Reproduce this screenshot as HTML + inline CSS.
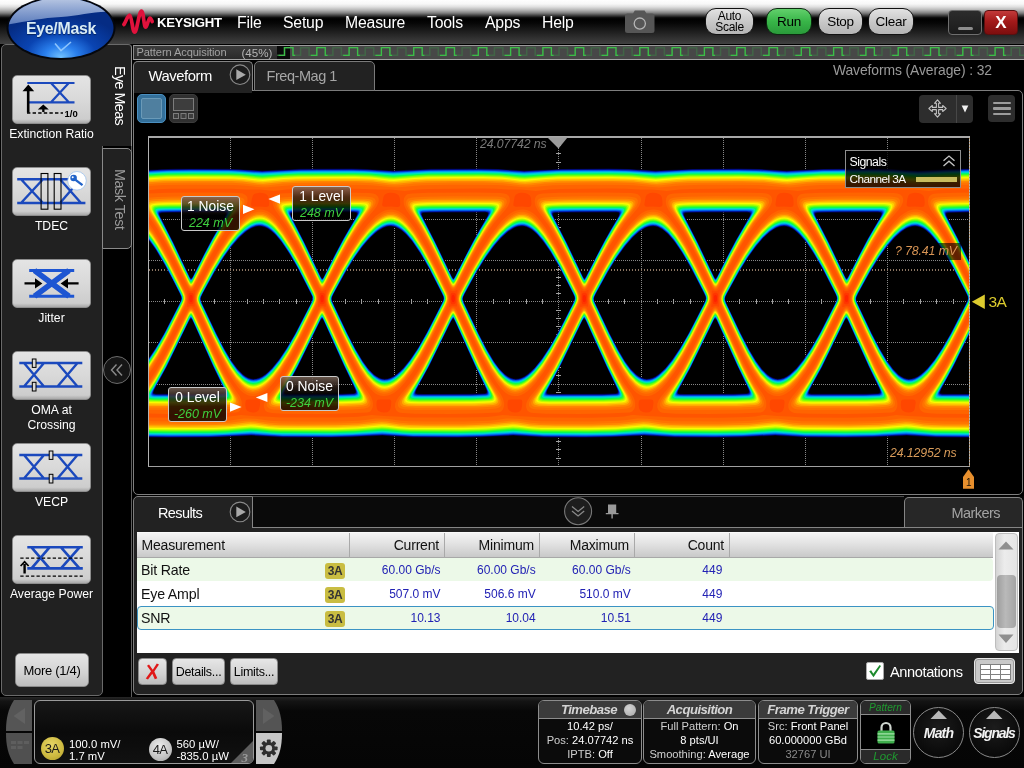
<!DOCTYPE html>
<html lang="en">
<head>
<meta charset="utf-8">
<title>Eye/Mask</title>
<style>
*{box-sizing:border-box;margin:0;padding:0}
html,body{width:1024px;height:768px;overflow:hidden;background:#000}
body{position:relative;font-family:"Liberation Sans",sans-serif;color:#fff;font-size:13px}
.a{position:absolute}
.t{position:absolute;white-space:nowrap;line-height:1}
svg{position:absolute;overflow:visible}
/* top bar */
#top{left:0;top:0;width:1024px;height:44px;background:linear-gradient(#fefefe 0,#f7f7f7 4px,#dedede 7px,#b6b6b6 10px,#808080 13px,#3e3e3e 15.5px,#0e0e0e 17.5px,#000 19px,#060606 23px,#3e3e3e 43px,#424242 44px)}
.menu{top:15px;font-size:15.8px;color:#fff;letter-spacing:-0.2px}
.pill{position:absolute;top:8px;height:27px;border-radius:11px;border:1px solid #111;background:linear-gradient(#e2e2e2,#c6c6c6 55%,#b4b4b4);color:#000;font-size:13.5px;text-align:center;line-height:25px;letter-spacing:-0.3px}
/* left panel */
#lp{left:1px;top:44px;width:102px;height:652px;background:#212121;border:1px solid #6a6a6a;border-radius:5px 0 5px 5px}
.mb{position:absolute;left:12px;width:79px;height:49px;border-radius:5px;background:linear-gradient(#e4e4e4,#d9d9d9 50%,#cdcdcd 92%,#a8a8a8);border:1px solid #8d8d8d}
.ml{position:absolute;left:0;width:103px;text-align:center;font-size:12.2px;color:#fff;line-height:15px;white-space:nowrap}
/* panels */
.panel{position:absolute;background:#000;border:1px solid #7e7e7e}
.tab{position:absolute;background:#222;border:1px solid #858585;border-bottom:none;border-radius:5px 5px 0 0}
.lbl{position:absolute;border:1px solid #c9c9c9;border-radius:3px;background:linear-gradient(rgba(120,100,88,.85) 0,rgba(45,32,24,.84) 30%,rgba(0,0,0,.80) 55%);text-align:center}
.lbl b{display:block;font-weight:normal;color:#fff;font-size:13.8px;line-height:15px;margin-top:2px;white-space:nowrap}
.lbl i{display:block;color:#3ecf3e;font-size:12.5px;line-height:14px;margin-top:2px;white-space:nowrap}
/* table */
.th{position:absolute;top:0;height:25px;font-size:14px;color:#111;line-height:25px;border-right:1px solid #a9a9a9;text-align:right;padding-right:5px;letter-spacing:-0.2px}
.row{position:absolute;left:0;width:856px;height:24px}
.row span{position:absolute;top:0;line-height:24px;white-space:nowrap}
.nm{left:4px;font-size:14.2px;color:#111;letter-spacing:-0.2px}
.v{font-size:12px;color:#2222b4;text-align:right}
.bdg{position:absolute;left:188px;top:5px;width:20px;height:16px;border-radius:3px;background:#c9bd42;color:#333;font-weight:bold;font-size:12px;line-height:16px;text-align:center;letter-spacing:-0.5px}
.gbtn{position:absolute;height:27px;border-radius:4px;background:linear-gradient(#e6e6e6,#d2d2d2 60%,#bdbdbd);border:1px solid #8a8a8a;color:#000;font-size:12.5px;line-height:27px;text-align:center;letter-spacing:-0.3px}
/* bottom */
.sbox{position:absolute;top:700px;height:64px;border:1px solid #8c8c8c;border-radius:6px;background:#0b0b0b;overflow:hidden}
.sbox .h{position:absolute;left:0;top:0;right:0;height:18px;background:#3b3b3b;border-bottom:1px solid #8c8c8c;font-weight:bold;font-style:italic;color:#d4d4d4;font-size:13.2px;line-height:17px;text-align:center;letter-spacing:-0.55px}
.sbox .l{position:absolute;left:0;right:0;text-align:center;font-size:11.15px;line-height:13px;color:#fff;white-space:nowrap}
.sbox .l span{color:#cfcfcf}
.circ{position:absolute;width:51px;height:51px;border-radius:50%;border:1px solid #8a8a8a;background:radial-gradient(circle at 50% 40%,#1c1c1c,#0a0a0a 70%);text-align:center;font-weight:bold;font-style:italic;font-size:14px;line-height:51px;color:#f2f2f2;letter-spacing:-0.8px}
</style>
</head>
<body>
<div id="root" style="position:absolute;left:0;top:0;width:1024px;height:768px;will-change:transform">
<div id="top" class="a"></div>
<!-- Eye/Mask button -->
<svg class="a" style="left:0;top:0;z-index:5" width="125" height="64" viewBox="0 0 125 64">
 <defs>
  <radialGradient id="emg" cx="50%" cy="88%" r="60%" fx="50%" fy="98%">
   <stop offset="0" stop-color="#6fc0ff"/><stop offset=".25" stop-color="#2a80ee"/><stop offset=".55" stop-color="#0a44b2"/><stop offset="1" stop-color="#052c84"/>
  </radialGradient>
  <linearGradient id="emh" x1="0" y1="0" x2="0" y2="1">
   <stop offset="0" stop-color="#d4def0" stop-opacity=".95"/><stop offset="1" stop-color="#6c8cc8" stop-opacity=".8"/>
  </linearGradient>
  <clipPath id="emc"><ellipse cx="61" cy="28" rx="52.5" ry="30"/></clipPath>
 </defs>
 <ellipse cx="61" cy="28" rx="54.5" ry="32" fill="#05070d"/>
 <ellipse cx="61" cy="28" rx="52.5" ry="30" fill="url(#emg)"/>
 <g clip-path="url(#emc)"><path d="M0 -6H125V14C100 8 84 16 61 17C40 18 24 22 0 26Z" fill="url(#emh)"/></g>
 <path d="M55 43.5L61 50.5L71 42" fill="none" stroke="#9fd0ff" stroke-width="1.6" opacity=".85"/>
</svg>
<div class="t" style="left:9px;top:20.5px;z-index:6;width:104px;text-align:center;font-weight:bold;font-size:15.9px;color:#d9ecf6;letter-spacing:-0.3px;text-shadow:0 1px 1px #06245e">Eye/Mask</div>
<!-- Keysight logo -->
<svg class="a" style="left:122px;top:8px" width="34" height="28" viewBox="0 0 34 28">
 <path d="M1.9 16.5C3.5 14.5 5.8 6.8 7.7 7.2C9.8 7.6 10.4 24.2 12.6 24.2C15 24.2 17 3 19.4 3C21.6 3 21.8 19.2 23.6 19.2C25.2 19.2 26.3 10.2 27.9 10C29 9.9 29.6 12.2 30.2 13.6" fill="none" stroke="#e1123c" stroke-width="3.7" stroke-linejoin="round" stroke-linecap="round"/>
</svg>
<div class="t" style="left:157px;top:15.5px;font-weight:bold;font-size:13.2px;color:#fff;letter-spacing:-0.35px">KEYSIGHT</div>
<div class="t menu" style="left:237px">File</div>
<div class="t menu" style="left:283px">Setup</div>
<div class="t menu" style="left:345px">Measure</div>
<div class="t menu" style="left:427px">Tools</div>
<div class="t menu" style="left:485px">Apps</div>
<div class="t menu" style="left:542px">Help</div>
<!-- camera -->
<svg class="a" style="left:625px;top:10px" width="30" height="24" viewBox="0 0 30 24">
 <path d="M2.5 3.5H8L9.8 .6H19.6L21.5 3.5H27a2.5 2.5 0 0 1 2.5 2.5V20.5a2.5 2.5 0 0 1-2.5 2.5H2.5a2.5 2.5 0 0 1-2.5-2.5V6a2.5 2.5 0 0 1 2.5-2.5Z" fill="#565656"/>
 <circle cx="14.8" cy="13.6" r="5.6" fill="none" stroke="#b5b5b5" stroke-width="1.3"/>
</svg>
<div class="pill" style="left:705px;width:49px;font-size:12px;line-height:11px;padding-top:2px">Auto<br>Scale</div>
<div class="pill" style="left:766px;width:46px;background:linear-gradient(#62d06c,#38b548 50%,#2a9a3a);border-color:#0c2a10">Run</div>
<div class="pill" style="left:818px;width:45px">Stop</div>
<div class="pill" style="left:868px;width:46px">Clear</div>
<div class="a" style="left:948px;top:10px;width:34px;height:25px;border:1px solid #6e6e6e;border-radius:4px;background:linear-gradient(#2c2c2c,#1b1b1b)"><div class="a" style="left:9px;top:16px;width:15px;height:3px;border-radius:1.5px;background:#8d8d8d"></div></div>
<div class="a" style="left:984px;top:10px;width:34px;height:25px;border:1px solid #5a1010;border-radius:4px;background:linear-gradient(#c23a3a,#a31a1a 45%,#7d0e0e);text-align:center;font-weight:bold;font-size:17px;line-height:23px;color:#fff">X</div>
<!-- pattern acquisition strip -->
<div class="a" style="left:133px;top:45px;width:891px;height:15px;background:#474747;border-top:1px solid #9a9a9a;border-bottom:1px solid #a4a4a4;border-left:1px solid #8a8a8a"></div>
<div class="a" style="left:134px;top:46px;width:143px;height:13px;background:linear-gradient(#3c3c3c,#2a2a2a)"></div>
<div class="a" style="left:277px;top:46px;width:13px;height:13px;background:#0a0a0a"></div>
<div class="t" style="left:136.5px;top:47px;font-size:11.1px;color:#a2a2a2;letter-spacing:-0.1px">Pattern Acquisition</div>
<div class="t" style="left:241.5px;top:46.5px;font-size:11.6px;color:#b4b4b4">(45%)</div>
<svg class="a" style="left:0;top:0" width="1024" height="64" viewBox="0 0 1024 64"><path d="M277 55.3H284.5V47.7H293V55.3H300.6V47.7H309.1V55.3H316.8V47.7H325.3V55.3H332.9V47.7H341.4V55.3H349.1V47.7H357.6V55.3H365.2V47.7H373.7V55.3H381.4V47.7H389.9V55.3H397.5V47.7H406V55.3H413.7V47.7H422.2V55.3H429.8V47.7H438.3V55.3H446V47.7H454.5V55.3H462.1V47.7H470.6V55.3H478.3V47.7H486.8V55.3H494.4V47.7H502.9V55.3H510.6V47.7H519.1V55.3H526.7V47.7H535.2V55.3H542.9V47.7H551.4V55.3H559V47.7H567.5V55.3H575.2V47.7H583.7V55.3H591.3V47.7H599.8V55.3H607.5V47.7H616V55.3H623.6V47.7H632.1V55.3H639.8V47.7H648.3V55.3H655.9V47.7H664.4V55.3H672.1V47.7H680.6V55.3H688.2V47.7H696.7V55.3H704.4V47.7H712.9V55.3H720.5V47.7H729V55.3H736.7V47.7H745.2V55.3H752.8V47.7H761.3V55.3H769V47.7H777.5V55.3H785.1V47.7H793.6V55.3H801.3V47.7H809.8V55.3H817.4V47.7H825.9V55.3H833.6V47.7H842.1V55.3H849.7V47.7H858.2V55.3H865.9V47.7H874.4V55.3H882V47.7H890.5V55.3H898.2V47.7H906.7V55.3H914.3V47.7H922.8V55.3H930.5V47.7H939V55.3H946.6V47.7H955.1V55.3H962.8V47.7H971.3V55.3H978.9V47.7H987.4V55.3H995.1V47.7H1003.6V55.3H1011.2V47.7H1019.7V55.3H1024" stroke="#3f6d46" stroke-width="1.6" opacity=".75" fill="none"/><path d="M278.5 55.3H284.5V47.7H293V55.3H295.2M310.8 55.3H316.8V47.7H325.3V55.3H327.5M343.1 55.3H349.1V47.7H357.6V55.3H359.8M375.4 55.3H381.4V47.7H389.9V55.3H392.1M407.7 55.3H413.7V47.7H422.2V55.3H424.4M440 55.3H446V47.7H454.5V55.3H456.7M472.3 55.3H478.3V47.7H486.8V55.3H489M504.6 55.3H510.6V47.7H519.1V55.3H521.3M536.9 55.3H542.9V47.7H551.4V55.3H553.6M569.2 55.3H575.2V47.7H583.7V55.3H585.9M601.5 55.3H607.5V47.7H616V55.3H618.2M633.8 55.3H639.8V47.7H648.3V55.3H650.5M666.1 55.3H672.1V47.7H680.6V55.3H682.8M698.4 55.3H704.4V47.7H712.9V55.3H715.1M730.7 55.3H736.7V47.7H745.2V55.3H747.4M763 55.3H769V47.7H777.5V55.3H779.7M795.3 55.3H801.3V47.7H809.8V55.3H812M827.6 55.3H833.6V47.7H842.1V55.3H844.3M859.9 55.3H865.9V47.7H874.4V55.3H876.6M892.2 55.3H898.2V47.7H906.7V55.3H908.9M924.5 55.3H930.5V47.7H939V55.3H941.2M956.8 55.3H962.8V47.7H971.3V55.3H973.5M989.1 55.3H995.1V47.7H1003.6V55.3H1005.8" stroke="#3cbe48" stroke-width="1.3" fill="none"/></svg>

<div id="lp" class="a"></div>
<!-- vertical tabs -->
<div class="a" style="left:102px;top:44px;width:30px;height:102px;background:#212121;border:1px solid #8a8a8a;border-left:none;border-top-color:#6a6a6a;border-radius:0 4px 0 0;border-bottom:none"></div>
<div class="a" style="left:131px;top:146px;width:1px;height:551px;background:#5e5e5e"></div>
<div class="a" style="left:102px;top:148px;width:30px;height:101px;background:#212121;border:1px solid #8a8a8a;border-radius:0 5px 5px 0"></div>
<div class="t" style="left:119.5px;top:66px;font-size:14.4px;color:#fff;transform-origin:0 0;transform:rotate(90deg) translate(0,-50%);letter-spacing:-0.6px">Eye Meas</div>
<div class="t" style="left:120px;top:168.5px;font-size:14.4px;color:#9b9b9b;transform-origin:0 0;transform:rotate(90deg) translate(0,-50%);letter-spacing:-0.45px">Mask Test</div>
<!-- collapse chevron -->
<div class="a" style="left:103px;top:356px;width:28px;height:28px;border-radius:50%;border:1px solid #6b6b6b;background:#151515"></div>
<svg class="a" style="left:103px;top:356px" width="28" height="28" viewBox="0 0 28 28"><path d="M13.5 8.5L8.5 14L13.5 19.5M19 8.5L14 14L19 19.5" fill="none" stroke="#8a8a8a" stroke-width="1.4"/></svg>
<!-- buttons -->
<div class="mb" style="top:75px"></div>
<svg class="a" style="left:12px;top:75px" width="79" height="49" viewBox="0 0 79 49">
 <g fill="none" stroke="#1b49bd" stroke-width="2.2"><path d="M15.3 8H62.5M15.3 27.3H62.5M39 8L56.8 27.3M56.8 8L39 27.3"/></g>
 <path d="M14.9 37.7V15H17.5V37.7ZM10.5 16.2L16.3 9.5L22.2 16.2Z" fill="#000"/>
 <path d="M30.2 37V33H32.5V37ZM25.8 34.4L31.3 29.4L36.8 34.4Z" fill="#000"/>
 <path d="M15 38H51" stroke="#000" stroke-width="1.3" stroke-dasharray="3.4 2.2" fill="none"/>
 <text x="52.5" y="41.5" font-family="Liberation Sans,sans-serif" font-weight="bold" font-size="9.5" fill="#000">1/0</text>
</svg>
<div class="ml" style="top:127px">Extinction Ratio</div>

<div class="mb" style="top:167px"></div>
<svg class="a" style="left:12px;top:167px" width="79" height="49" viewBox="0 0 79 49">
 <g fill="none" stroke="#1b49bd" stroke-width="2.4"><path d="M5.2 12.3H64M5.2 36H73.4M9 12.3L31 36M31 12.3L9 36M48 12.3L69 36M64 17.5L48 36"/></g>
 <g fill="none" stroke="#000" stroke-width="1.1"><rect x="29.1" y="6.5" width="6.8" height="35.7"/><rect x="42.2" y="6.5" width="6.8" height="35.7"/></g>
 <circle cx="65" cy="13.8" r="9.3" fill="#fff" stroke="#9ec3ee" stroke-width=".8"/>
 <circle cx="61.6" cy="11" r="3.3" fill="#2163c9"/><circle cx="60.7" cy="10.2" r="1" fill="#fff"/>
 <path d="M63.5 12.8L70.5 18.2" stroke="#2163c9" stroke-width="2.3" fill="none"/>
</svg>
<div class="ml" style="top:219px">TDEC</div>

<div class="mb" style="top:259px"></div>
<svg class="a" style="left:12px;top:259px" width="79" height="49" viewBox="0 0 79 49">
 <g fill="none" stroke="#1d55d2"><path d="M17.2 11.5H62.2M17.2 37.3H62.2" stroke-width="3"/><path d="M22.5 11.5L57 37.3M57 11.5L22.5 37.3" stroke-width="5.6"/></g>
 <path d="M12.5 23.2H24V25.6H12.5ZM23 19.2L30.4 24.4L23 29.6ZM66.6 23.2H55V25.6H66.6ZM56 19.2L48.6 24.4L56 29.6Z" fill="#000"/>
</svg>
<div class="ml" style="top:311px">Jitter</div>

<div class="mb" style="top:351px"></div>
<svg class="a" style="left:12px;top:351px" width="79" height="49" viewBox="0 0 79 49">
 <g fill="none" stroke="#1b49bd" stroke-width="2.4"><path d="M7.3 12H70.3M7.3 35.5H70.3M12 12L32 35.5M32 12L12 35.5M45.5 12L65.5 35.5M65.5 12L45.5 35.5"/></g>
 <g fill="#d9d9d9" stroke="#000" stroke-width="1"><rect x="20.3" y="8" width="3.7" height="8.4"/><rect x="20.3" y="31.3" width="3.7" height="8.7"/></g>
</svg>
<div class="ml" style="top:403px">OMA at<br>Crossing</div>

<div class="mb" style="top:443px"></div>
<svg class="a" style="left:12px;top:443px" width="79" height="49" viewBox="0 0 79 49">
 <g fill="none" stroke="#1b49bd" stroke-width="2.4"><path d="M7.3 12H70.3M7.3 35.5H70.3M12 12L32 35.5M32 12L12 35.5M45.5 12L65.5 35.5M65.5 12L45.5 35.5"/></g>
 <g fill="#d9d9d9" stroke="#000" stroke-width="1"><rect x="37.2" y="8" width="3.7" height="8.4"/><rect x="37.2" y="31.3" width="3.7" height="8.7"/></g>
</svg>
<div class="ml" style="top:495px">VECP</div>

<div class="mb" style="top:535px"></div>
<svg class="a" style="left:12px;top:535px" width="79" height="49" viewBox="0 0 79 49">
 <g fill="none" stroke="#1b49bd" stroke-width="2.6"><path d="M15.3 12.3H70.8M15.3 33.4H70.8M19.5 12.3L37.5 33.4M37.5 12.3L19.5 33.4M49 12.3L67.5 33.4M67.5 12.3L49 33.4"/></g>
 <path d="M8.3 23.2H70.8M8.3 41.2H70.8" stroke="#000" stroke-width="1.2" stroke-dasharray="3.3 2.1" fill="none"/>
 <path d="M11.4 38.6V29H13.8V38.6ZM8 30.5L12.6 25.5L17.2 30.5L16 31.6L12.6 28L9.2 31.6Z" fill="#000"/>
</svg>
<div class="ml" style="top:587px">Average Power</div>

<div class="gbtn" style="left:15px;top:653px;width:74px;height:34px;line-height:34px;font-size:13px;border-radius:5px">More (1/4)</div>

<!-- waveform panel -->
<div class="panel" style="left:133px;top:90px;width:890px;height:405px;border-radius:0 5px 5px 5px"></div>
<div class="tab" style="left:133px;top:61px;width:120px;height:30px"></div>
<div class="a" style="left:134px;top:90px;width:118px;height:3px;background:#222"></div>
<div class="a" style="left:134px;top:93px;width:118px;height:1px;background:#000"></div>
<div class="tab" style="left:254px;top:61px;width:121px;height:30px;border-color:#7a7a7a;border-bottom:1px solid #7a7a7a"></div>
<div class="t" style="left:148.5px;top:69px;font-size:14.8px;color:#fff;letter-spacing:-0.45px">Waveform</div>
<div class="t" style="left:266.5px;top:69px;font-size:14.5px;color:#a6a6a6;letter-spacing:-0.45px">Freq-Mag 1</div>
<svg class="a" style="left:229px;top:64px" width="22" height="22" viewBox="0 0 22 22"><circle cx="11" cy="10.7" r="9.8" fill="#1c1c1c" stroke="#8a8a8a" stroke-width="1.1"/><path d="M7.3 5.3L16.8 10.7L7.3 16.1Z" fill="#a9a9a9"/></svg>
<div class="t" style="left:833px;top:63.5px;font-size:13.9px;color:#9a9a9a;letter-spacing:-0.1px">Waveforms (Average) : 32</div>
<!-- view buttons -->
<div class="a" style="left:137px;top:94px;width:29px;height:29px;border-radius:5px;background:#34709a;border:1px solid #4a8fc0"></div>
<div class="a" style="left:141px;top:98px;width:21px;height:21px;border-radius:2px;background:#4f7f9f;border:1px solid #6a9ab8"></div>
<div class="a" style="left:169px;top:94px;width:29px;height:29px;border-radius:5px;background:#303030;border:1px solid #3c3c3c"></div>
<svg class="a" style="left:169px;top:94px" width="29" height="29" viewBox="0 0 29 29"><g fill="#3d3d3d" stroke="#7c7c7c" stroke-width="1"><rect x="4.5" y="4.5" width="20" height="12"/><rect x="4.5" y="19.5" width="5" height="5"/><rect x="12" y="19.5" width="5" height="5"/><rect x="19.5" y="19.5" width="5" height="5"/></g></svg>
<!-- move / menu buttons -->
<div class="a" style="left:919px;top:95px;width:54px;height:28px;border-radius:4px;background:#2d2d2d"></div>
<div class="a" style="left:956px;top:95px;width:1px;height:28px;background:#474747"></div>
<svg class="a" style="left:927.5px;top:99px" width="19" height="19" viewBox="0 0 22 22"><path d="M11 1L14.5 5H12.3V9.7H17V7.5L21 11L17 14.5V12.3H12.3V17H14.5L11 21L7.5 17H9.7V12.3H5V14.5L1 11L5 7.5V9.7H9.7V5H7.5Z" fill="#2d2d2d" stroke="#c6c6c6" stroke-width="1.2" stroke-linejoin="round"/></svg>
<svg class="a" style="left:960.5px;top:104.5px" width="8" height="8" viewBox="0 0 9 9"><path d="M.700 .500H8.3L4.5 8.5Z" fill="#f0f0f0"/></svg>
<div class="a" style="left:988px;top:95px;width:27px;height:27px;border-radius:4px;background:#2d2d2d"></div>
<div class="a" style="left:993px;top:101.5px;width:17.5px;height:2.6px;background:#9c9c9c;border-radius:1px"></div>
<div class="a" style="left:993px;top:107px;width:17.5px;height:2.6px;background:#9c9c9c;border-radius:1px"></div>
<div class="a" style="left:993px;top:112.5px;width:17.5px;height:2.6px;background:#9c9c9c;border-radius:1px"></div>
<!-- plot -->
<svg class="a" style="left:0;top:0" width="1024" height="500" viewBox="0 0 1024 500" shape-rendering="crispEdges"><path d="M230.5 138V466M312.5 138V466M394.5 138V466M476.5 138V466M558.5 138V466M641.5 138V466M723.5 138V466M805.5 138V466M887.5 138V466" stroke="#878787" stroke-width="1" stroke-dasharray="1 1" fill="none"/><path d="M149 178.5H969M149 219.5H969M149 260.5H969M149 301.5H969M149 342.5H969M149 384.5H969M149 425.5H969" stroke="#878787" stroke-width="1" stroke-dasharray="1 1" fill="none"/><path d="M164.5 299V304M181.5 299V304M197.5 299V304M214.5 299V304M247.5 299V304M263.5 299V304M279.5 299V304M296.5 299V304M329.5 299V304M345.5 299V304M361.5 299V304M378.5 299V304M411.5 299V304M427.5 299V304M444.5 299V304M460.5 299V304M493.5 299V304M509.5 299V304M526.5 299V304M542.5 299V304M575.5 299V304M591.5 299V304M608.5 299V304M624.5 299V304M657.5 299V304M673.5 299V304M690.5 299V304M706.5 299V304M739.5 299V304M756.5 299V304M772.5 299V304M788.5 299V304M821.5 299V304M838.5 299V304M854.5 299V304M870.5 299V304M903.5 299V304M920.5 299V304M936.5 299V304M953.5 299V304M556 145.5H561M556 153.5H561M556 162.5H561M556 170.5H561M556 186.5H561M556 195.5H561M556 203.5H561M556 211.5H561M556 227.5H561M556 236.5H561M556 244.5H561M556 252.5H561M556 269.5H561M556 277.5H561M556 285.5H561M556 293.5H561M556 310.5H561M556 318.5H561M556 326.5H561M556 334.5H561M556 351.5H561M556 359.5H561M556 367.5H561M556 375.5H561M556 392.5H561M556 400.5H561M556 408.5H561M556 416.5H561M556 433.5H561M556 441.5H561M556 449.5H561M556 458.5H561" stroke="#a0a0a0" stroke-width="1" fill="none"/><path d="M149 270H969" stroke="#8b7562" stroke-width="2" stroke-dasharray="1 2" fill="none"/></svg>
<div class="a" style="left:148px;top:137px;width:822px;height:330px;overflow:hidden"><svg class="a" style="left:0;top:0" width="822" height="330" viewBox="0 0 822 330" fill-rule="evenodd">
<path fill="#00003c" d="M26.4 31.7l53.8 0 34 1.8 38.6-1.7 51.4-0.2 15.6 0.4 18 1.2 7.4 0.3 38-1.7 49-0.2 18 0.4 26 1.5 37.6-1.6 47.4-0.3 20.1 0.3 25.9 1.6 37.6-1.6 46-0.3 21 0.3 19.4 1.4 7.6 0.2 37-1.6 45-0.3 22 0.3 19.4 1.4 7.6 0.2 31.4-1.5 20.6-0.3 0.2 22-0.2 21.8-21 0.4-2 0.6-0.4 1.3 1.4 3.8 10.1 19.6 11.9 24.7 0.2 51.9-0.3 18.4-16.1 33-12.4 22.9-1 3.1 0.6 1.1 2.4 0.5 26.6 0.1 0.2 21.9-0.2 21.9-33.6-0.2-29.4-1.7-35 1.6-27.6 0.3-38-0.2-31-1.7-34.4 1.6-26 0.3-39.6-0.2-31-1.7-34 1.5-24.4 0.4-41.6-0.2-31-1.7-34 1.5-22 0.4-43.4-0.2-31.6-1.7-33 1.5-18.4 0.3-47.6-0.1-32-1.7-42.9 1.7-39.5 0.2-20.6-0.3-0.2-58.6 0.2-19.8 7.6-11.2 9.4-16.5 14.6-28.3 1-2.2 0.5-2.5-0.5-2.3-2-4.3-13.6-25.9-9-15.1-8-11.2-0.2-20.3 0.2-49.5zM108.3 89.7l-5.6 2.1-6.5 4.4-6.4 6.2-7.1 8.3-7.5 10.5-8.4 13.6-11.6 20.8-2 4.1-0.5 2.1 0.3 2 1.2 3 14 29.3 8 15.4 7 11.8 6 8.2 5.8 5.7 2.8 2 3 1.5 2.4 0.8 2.6 0.2 3-0.3 2.4-0.8 3-1.4 3.6-2.4 6.4-6.1 7-8.6 7-10.4 9-15.4 15.6-30.1 1.4-3.4 0.2-1.6-0.6-2.4-1.6-3.3-13.4-26-9-15.2-7-10-6.7-7.5-2.9-2.6-3.4-2.4-3-1.4-2.6-0.7-3-0.3zM147.2 75.7l-2.4 0.2-1.6 0.6-0.3 1.3 0.3 1.5 14.4 28.5 15.2 31.9 1 1.5 0.4 0.2 0.6-0.3 1-1.4 10.7-21.5 8.4-16 12.9-22.1 0.9-2.3 0.1-1.1-1.1-0.9-3.5-0.3zM239.2 89.7l-5.4 2.1-6.5 4.4-6.5 6.3-7 8.3-7.6 10.5-9 14.5-11.4 21-1.6 3.1-0.4 1.9 0.4 2.4 1 2.4 14.6 30.3 8 15.4 7 11.6 5.4 7.5 3 3.3 2.9 2.5 2.8 2 2.9 1.5 2.4 0.7 2.6 0.3 2.9-0.3 2.5-0.7 3.1-1.5 3-2 3.5-2.9 3.4-3.5 7-8.5 8-12 9.6-16.6 14.4-28.3 1-2.5 0.3-1.7-0.3-1.4-2-4.5-13-25.1-8.4-14.5-8-11.6-6.6-7.3-3.4-3-3-2-3-1.4-2.6-0.7-3-0.3zM278.2 75.7l-3 0.4-1 0.5-0.2 1.2 0.7 2.4 12.8 25 16.3 34.3 1 1.6 0.4 0.3 0.6-0.2 1.4-2.3 17.8-34.7 13.8-23.9 1-2.5 0-1.3-0.6-0.5-1-0.4-3.4-0.2zM370.2 89.7l-3 1-2.4 1.2-6.4 4.3-6.6 6.4-6.6 7.7-7.4 10.4-8.6 13.6-12 21.7-2 4.2-0.3 1.6 0.3 2 1 2.5 14.6 30.5 8 15.3 7 11.7 5.4 7.5 3 3.3 3 2.6 2.8 2 2.8 1.5 2.4 0.7 2.6 0.3 2.4-0.2 3-0.8 3.1-1.5 3.7-2.4 6.8-6.4 7-8.7 8-12.1 8.4-14.8 14.6-28.2 1.4-3.4 0.4-2-0.8-3-2.1-4.1-13.5-25.8-8-13.5-8-11.4-6.4-7.2-3-2.5-3-1.9-3-1.5-2.5-0.7-3.1-0.2zM409.2 75.7l-3 0.4-0.9 0.7-0.2 1.4 0.7 1.9 13.3 26.1 15.7 33.1 1 1.7 0.4 0.4 0.6-0.1 1.4-2.2 17.9-34.9 13.7-23.8 1.1-2.6-0.1-1.5-1.6-0.7-3.4-0.2zM501.8 89.7l-2.6 0.6-3.1 1.5-6 4-6.3 5.8-7 8.2-8.6 11.8-8.4 13.7-11.6 20.9-1.5 3-0.7 2.6 0.2 1.8 1 2.5 14.6 30.4 8.5 16.3 6.5 10.8 6 8.1 5.4 5.5 2.9 2 2.7 1.4 2.4 0.8 2.6 0.3 2.4-0.2 3.1-0.7 3.1-1.6 3.7-2.4 6.7-6.3 7-8.7 8-12 9-15.7 14.4-28.3 1.1-2.5 0.4-2.1-0.5-2-3-6.3-13.4-25.7-8-13.4-7.5-10.6-6.5-7.1-2.9-2.3-3-2-3.1-1.5-2.6-0.7-2.4-0.2zM540.8 75.7l-3 0.3-1.4 0.8-0.2 1.4 0.6 1.7 13.1 25.9 15.9 33.3 1 1.7 0.4 0.5 0.6 0 1.4-2 10.3-20.5 8.5-16 12.8-22.2 1.1-2.4 0.1-1.4-0.2-0.6-0.8-0.4-3.2-0.3zM632.8 89.7l-2.6 0.7-3 1.4-3.3 2-3.3 2.4-6.4 6.1-7.4 8.9-7.6 10.6-9 14.5-11.4 21-1.2 2.5-0.5 2 0.2 1.4 0.9 2.7 15 31.4 7.6 14.4 7.4 12.5 6 8 5.2 5 2.8 2.1 3 1.5 2.6 0.7 2.4 0.2 3-0.3 3-1 3.2-1.6 2.8-2.1 6.6-6.1 7.4-9.3 8-12.2 8.6-14.8 14.4-28.3 1.1-2.2 0.5-2.6-0.6-2.2-2-4.3-13.4-25.9-8-13.6-8-11.5-6.6-7.2-3.2-2.7-3-2-2.8-1.4-2.4-0.7-3-0.3zM671.8 75.7l-2.6 0.2-1.4 0.5-0.5 1.4 0.5 2 13.7 27 15.3 32.1 1 1.8 1 0.7 1.4-1.9 18.3-35.7 13.3-23 1.1-2.6 0.3-1.4-0.4-0.7-0.7-0.3-3.3-0.3zM763.8 89.7l-5.6 2.1-6.4 4.4-6.6 6.2-6.9 8.3-7.5 10.5-8.6 13.6-11.4 20.8-2 4.1-0.6 2.1 0.3 2 1.3 3 14 29.3 8 15.4 7 11.8 6 8.2 5.7 5.7 2.8 2 2.9 1.5 2.6 0.8 2.4 0.2 3-0.3 2.6-0.8 3-1.4 3.5-2.4 6.5-6.1 7-8.6 7-10.4 9-15.4 15.4-30.1 1.5-3.4 0.2-1.6-0.6-2.4-1.5-3.3-13.6-26-9-15.2-7-10-6.6-7.5-2.8-2.6-3.6-2.4-3-1.4-2.4-0.7-3-0.3zM16.2 75.7l-2.4 0.2-1.6 0.5-0.4 1.4 0.5 2 13.7 27 15.2 32.1 1 1.8 1 0.7 1.6-1.9 18.2-35.7 13.3-23 1.1-2.6 0.3-1.4-0.5-0.7-0.6-0.3-3.4-0.3zM173.8 181.7l-1 1.2-1 1.9-21.7 44.4-12.3 22.9-1 2.7 0 1 0.4 0.5 1.6 0.4 4 0.1 49.4 0 13.1-0.5 1.5-0.4 0.6-0.7 0-2-1.2-2.8-10.8-22.6-19.6-43.8-1-1.8-0.6-0.5zM305.2 181.7l-1 0.6-1 1.7-20.7 42.8-13.7 25.4-1 3 0.4 1 0.6 0.2 2 0.4 5 0.1 48-0.2 12.4-0.4 1.6-0.3 0.7-0.8-0.1-2-1.2-3-10.2-21.4-19.8-43.9-1-2zM436.3 181.7l-1.1 0.7-1 1.8-20.6 42.6-13.8 25.7-0.9 2.7 0.3 0.9 0.6 0.3 1.6 0.4 4.8 0.1 48.4-0.1 12.6-0.5 1.6-0.3 0.8-0.8 0.1-1.4-0.9-2.7-10.3-21.3-20.3-45.1-0.9-2zM567.2 181.7l-1 0.9-1 1.8-22.3 45.8-11.7 21.6-1.1 3 0 1 0.7 0.6 1.7 0.4 4.3 0.1 48.9-0.1 12.5-0.5 1.6-0.2 0.9-0.9 0.1-1.4-1-2.9-10.8-22.7-19.8-43.7-1-2zM698.2 181.7l-1 1-1 1.9-21.7 44.6-12.3 22.7-1 2.9 0 0.9 0.6 0.6 1.8 0.5 3.6 0 49.6 0 12.4-0.5 2-0.4 0.6-0.7-0-1.9-1-2.7-10.3-21.4-20.3-45-1-1.8zM42.8 181.7l-1 1-1 1.9-21.8 44.6-12.2 22.7-1.1 2.9 0 1 0.5 0.5 1.9 0.5 3.7 0 49.5 0 12.5-0.5 2-0.4 0.5-0.7 0-2-1.1-2.6-10.2-21.4-20.2-45-1-1.8z"/>
<path fill="#0017aa" d="M13.7 32.8l29.5-0.5 35.6 0.1 12.4 0.4 23 1.4 38.6-1.7 51-0.2 16 0.4 25.4 1.5 38-1.7 48.6-0.2 18.4 0.3 26 1.6 38-1.7 46.6-0.2 20 0.3 27 1.6 37-1.7 45.4-0.2 21.6 0.3 27 1.6 37-1.7 44.4-0.2 22 0.3 27.6 1.6 32-1.5 20-0.4 0.2 21.5-0.2 21-21.6 0.4-2 0.5-0.5 1.1 0.2 1.4 0.9 2.1 10.8 20.9 12.2 25.2 0.2 51.4-0.2 17.9-16.2 33.1-12.8 23.5-1.3 3.5 0.3 0.8 0.4 0.4 2 0.4 27.6 0.2 0.2 21.2-0.2 21.2-33-0.2-30-1.8-33.6 1.6-29 0.4-38-0.2-31-1.8-33 1.6-27.4 0.4-39.6-0.2-31-1.8-32.4 1.6-26.6 0.4-40.4-0.2-31.6-1.8-32 1.6-24 0.4-43.4-0.2-31.6-1.8-31.4 1.6-20.6 0.4-47-0.2-32-1.8-29.4 1.5-14 0.4-39.6 0.1-20-0.3-0.2-58 0.2-19.1 8.6-12.9 8-13.9 14.4-28.2 1.6-3.4 0.7-2.4-0.3-2.2-1.4-3.4-7.6-14.9-7-13.1-9.4-15.9-7.6-10.4-0.2-19.7 0.2-48.8zM36.2 74.7l-22.4 0.5-2.1 0.6-0.5 0.4-0.1 1 1.1 3.3 12.8 24.7 16.2 34.2 1 1.8 1 0.7 1.6-1.9 11.1-22.2 8.5-16 12.8-22 1-2 0.2-1.6-0.6-1-3-0.4zM110.8 88.7l-3 0.5-3 1-3.2 1.6-3 2-6.8 5.9-7.5 8.5-8.5 11.6-9 14.4-12 21.8-2 4.2-0.3 1.6 0.2 2 1.1 2.5 14 29.5 8 15.5 7.4 12.6 6 8.2 5.6 5.6 2.7 2.1 2.7 1.4 2.6 0.8 2.4 0.4 3-0.3 3-0.8 3.2-1.5 2.9-2 3.5-2.9 3.4-3.6 7-8.6 7-10.4 8.6-14.5 15-29 2-4.1 0.8-2.9-0.4-2.5-1-2.3-12.4-24.4-8.6-14.9-8-12.1-6.4-7.8-5.7-5-2.3-1.6-3-1.5-3-0.8zM167.8 74.7l-23 0.5-2.1 0.6-0.4 0.4-0.1 1 1 3.1 12.9 24.9 16.1 34 1 1.9 1 0.8 0.6-0.2 1-1.5 10.7-21.4 9-17 12.7-21.9 1.1-2.1 0.2-1.6-0.7-1-3-0.4zM241.7 88.7l-2.9 0.5-3 1-6.1 3.6-6.9 6-7.6 8.5-8 10.9-8.4 13.5-12.6 22.5-2 4-0.6 2.6 0.2 1.6 1 2.7 14.4 30.4 8 15.5 7 11.8 5.6 7.6 5.5 5.8 2.6 2 2.9 1.7 2.4 1 3 0.5 3-0.2 3-0.9 3.3-1.5 2.9-2 3.4-2.8 3.4-3.6 7-8.5 7.6-11.2 9-15.6 14.4-28.1 2-4.3 0.5-1.9-0.2-2-1.3-3-12.4-24.4-9-15.7-8-11.9-6-7.1-5.6-4.9-3-1.9-2.4-1.2-3-0.8zM298.8 74.7l-23 0.5-2 0.6-0.5 1.4 1.5 3.9 12.1 23.7 16.9 35.2 1 1.6 0.4 0.3 0.6-0.2 1-1.3 17.7-34.6 6.9-12.6 8.3-14 0.9-3-0.8-1-2.6-0.4zM372.8 88.7l-3 0.5-3 1-6 3.6-7 6.1-7 7.9-8.6 11.6-9 14.3-12.4 22.7-1.6 3.1-0.5 2.3 0.1 1.4 1 2.6 14.4 30.6 8.6 16.3 7 11.7 5.4 7.5 5.8 5.9 2.8 2 2.8 1.4 2.6 0.9 2.6 0.3 2.4-0.2 3.3-1 3.1-1.4 3.6-2.6 6.6-6.2 7-8.7 8-12.1 8-13.9 14.4-28.1 2-4.3 0.6-2.1-0.2-2-1.4-3.2-12.4-24.4-9.6-16.5-7-10.3-6.4-7.8-6-5.3-2.6-1.5-3-1.3-3-0.7zM429.7 74.7l-22.9 0.5-1.8 0.6-0.5 0.4-0.1 1 1.4 3.7 12.7 24.9 16.3 34 1.4 2.1 1-0.6 1-1.7 17.4-33.8 6.9-12.6 8.3-13.8 1-3.2-0.2-0.4-0.8-0.7-2.6-0.3zM504.2 88.7l-3.4 0.5-2.9 1-6 3.6-6.7 5.7-7.4 8.4-8 10.9-8.6 13.4-12 21.5-3 6-0.4 2.1 0.4 2.4 1 2.5 14.6 30.5 8 15.3 6.9 11.8 5.5 7.5 5.9 6 2.7 2 2.9 1.4 2.5 0.9 2.6 0.3 3-0.3 2.8-0.9 3.1-1.4 2.9-2 6.6-6.1 7-8.6 8-11.9 8-13.8 15-29 2-4.2 0.7-2.4-0.1-1.8-1-2.6-12.6-24.5-9-15.7-8-12-6.4-7.7-6-5.2-5-2.7-3-0.7zM560.8 74.7l-23 0.5-1.7 0.6-0.5 0.4-0.1 1 1.3 3.6 12.6 24.4 16.4 34.4 1 1.8 0.4 0.4 0.6 0 1.4-2 10.4-20.6 8.4-16 13.8-23.6 0.9-2.4 0.1-1-0.7-1-2.9-0.4zM635.2 88.7l-3.4 0.5-2.8 1-3 1.6-3.7 2.4-7.1 6.4-7 8.1-8 11-8.4 13.5-12.6 22.6-2 4.2-0.3 1.8 0.3 2.3 1 2.4 14.6 30.5 8.5 16.3 6.5 10.8 6 8.2 5.4 5.5 2.7 2 2.9 1.4 2.4 0.8 2.6 0.4 3-0.3 2.9-0.9 3.1-1.4 2.9-2 6.5-6 7-8.5 8-11.9 9-15.6 14.6-28.2 1.5-3.4 0.7-2.4-0.2-2-1-2.6-12.6-24.5-8.4-14.8-8-12.1-6.6-7.9-5.7-5.1-2.3-1.6-3-1.4-3-0.8zM691.8 74.7l-22.6 0.5-2 0.6-0.5 0.4-0.1 1 1.2 3.3 12.7 24.7 16.3 34.2 1 1.8 1 0.7 1.4-1.9 11.2-22.2 8.5-16 12.9-22 0.9-2 0.2-1.6-0.7-1-3-0.4zM766.2 88.7l-3 0.5-3 1-3.1 1.6-3 2-6.9 5.9-7.4 8.5-8.6 11.6-9 14.4-12 21.8-1.9 4.2-0.3 1.6 0.2 2 1 2.5 14 29.5 8 15.5 7.6 12.6 6 8.2 5.4 5.6 2.8 2.1 2.8 1.4 2.4 0.8 2.6 0.4 3-0.3 2.9-0.8 3.2-1.5 2.9-2 3.4-2.9 3.6-3.6 7-8.6 7-10.4 8.4-14.5 15-29 2-4.1 0.9-2.9-0.3-2.5-1-2.3-12.6-24.4-8.4-14.9-8-12.1-6.6-7.8-5.6-5-2.4-1.6-3-1.5-3-0.8zM42.8 181.2l-1 1-1 1.9-22.3 45.7-12.7 23.3-0.9 2.7 0.3 1 0.6 0.3 2 0.3 6 0.1 49.4-0.1 11.6-0.4 1.4-0.4 0.8-0.8-0.1-2-1.1-2.8-10.3-21.2-20.7-46.1-1-1.9zM173.8 181.2l-1 1.2-1 1.9-22.2 45.5-12.8 23.4-0.8 2.6 0.2 0.8 0.6 0.4 2 0.4 5 0.1 50.4-0.1 11.6-0.4 1.4-0.4 0.9-0.8-0.2-2-1.1-3.1-10.9-22.5-20.1-44.7-1-1.8-0.6-0.5zM304.8 181.2l-2 3.3-21.4 43.7-13.2 24.3-1 2.7-0 1 0.6 0.8 2 0.4 4.4 0.1 50.6-0.1 12-0.4 1.4-0.3 1-0.9-0-1.6-1-2.6-10.7-22.4-20.3-44.9-1.4-2.7-0.6-0.4zM436.2 181.2l-1 0.7-1 1.8-20.6 42.5-6.6 12.6-7.8 13.9-1 3 0.4 1.1 0.6 0.4 2.6 0.3 7 0.1 47.4-0.2 11.6-0.4 1.4-0.3 1-0.8 0.1-1.7-1.1-2.8-10.1-21.2-20.9-46.1-1-2zM567.2 181.2l-1 0.8-1 1.9-22.6 46.4-12.4 22.6-0.9 2.9 0.4 1 0.5 0.3 2 0.4 6 0 47-0.1 13-0.4 2-0.3 1-0.6 0.2-1.9-1.2-3-10.7-22.4-20.3-44.9-1-1.9zM698.2 181.2l-1 1-1 1.9-22.2 45.7-12.8 23.3-0.8 2.7 0.3 1 0.5 0.3 2 0.3 6 0.1 49.6-0.1 11.4-0.4 1.6-0.4 0.7-0.8-0.1-2-1.2-2.8-10.2-21.2-20.8-46.1-1-1.9z"/>
<path fill="#004de2" d="M21 33.2l22.2-0.2 37 0.1 11 0.4 16 1.3 7 0.2 39-1.8 51.6-0.2 16 0.4 24.4 1.6 37-1.7 50.6-0.3 18.4 0.4 25 1.6 36.6-1.7 49-0.3 20 0.4 19 1.4 7 0.2 36-1.7 47.4-0.3 21.6 0.4 19 1.4 7 0.2 36-1.7 46-0.3 23 0.4 26 1.6 30.4-1.5 21.6-0.4 0.2 20.7-0.2 20.3-22 0.4-2 0.5-0.6 0.4-0.2 0.8 0.2 1.6 1 2.3 11.4 21.7 12.2 25.2 0.2 50.8-0.2 17.3-14.7 30.1-7.1 13.6-7.8 13.6-1.5 3.8 0.5 1.3 2.6 0.7 28 0.1 0.2 20.5-0.2 20.5-34-0.3-29.6-1.7-33.4 1.6-29 0.4-38.6-0.2-30-1.8-33.4 1.6-27.6 0.4-40-0.2-30-1.8-33 1.6-26 0.4-41.4-0.2-30.6-1.8-32.4 1.6-23.6 0.4-44.4-0.2-30.6-1.8-31.4 1.5-19 0.4-49-0.1-31.6-1.8-41.9 1.8-39.1 0.2-22-0.3-0.2-57.2 0.2-18.6 7-10.4 9-15.5 15-29.2 2-4.2 0.6-2.1-0.3-2-1.3-3.2-8-15.9-7-13.1-8.4-14.4-4-6-4.6-6-0.2-19 0.2-48zM109.2 88.2l-2.4 0.6-3.6 1.4-6.1 4-6.9 6.4-7 8.2-7.4 10.4-8.6 13.6-12.4 22.6-2 4.1-0.6 2.3 0.2 1.4 0.8 2.6 14.6 30.6 8.4 16.4 7 11.8 6 8.2 5.6 5.6 2.5 1.8 2.7 1.6 2.8 0.9 2.4 0.3 3-0.2 3-0.9 3.4-1.7 2.9-2 6.7-6.2 7-8.7 8-12 8.6-14.8 15-29.2 1.4-3.2 0.7-2.3-0.2-2-1.5-3.4-13-25.4-8.4-14.8-8.6-12.5-6.4-7.6-3-2.8-3-2.2-3.6-1.8-2.4-0.8-2.6-0.4zM150.2 74.2l-7.4 0.6-1.2 1 0.2 2 14.7 29 15.7 33 1 1.8 1 0.8 0.6-0.2 1-1.4 10.8-21.6 9-17 13.6-23.3 1-2.1 0.1-1.6-0.5-0.6-1-0.3-3-0.2zM240.2 88.2l-2.4 0.6-3.5 1.4-3.4 2-3.3 2.6-6.8 6.4-7.6 9-8 11.5-8 13-12 21.9-1.4 3.2-0.5 2 0.4 2.4 1.1 2.5 14.4 30.5 8 15.4 7.6 12.6 6 8.1 5.4 5.4 5 3.1 2.9 1 2.7 0.2 3-0.3 3-0.9 3-1.6 3.4-2.4 6.6-6.3 7-8.7 8-12.1 8.4-14.9 15-29.3 1.6-3.5 0.2-1.8-0.2-1.5-1.6-3.5-13.4-26.3-8.6-14.6-8-11.8-6.4-7.5-3.1-2.8-3.4-2.4-3-1.6-2.5-0.8-2.6-0.3zM281.8 74.2l-8 0.6-1.1 1 0.2 2 15.2 29.9 15.7 32.9 1 1.5 1 0.2 1.4-2.3 10.2-20.2 8.2-15.6 6.5-11.4 8.1-13.7 1.1-2.3 0.1-1.6-1.2-0.8-3.4-0.3zM371.2 88.2l-3 0.8-2.8 1.2-6.2 4.1-7 6.5-7.4 8.9-7.6 10.6-9 14.5-12 22-1.4 3.3-0.4 1.7 0.4 2.2 1 2.5 14 29.5 8.4 16.5 7 11.8 6 8.2 5.6 5.7 2.7 2 2.7 1.6 3 1 2.6 0.2 3-0.2 2.9-1 3.1-1.5 3-2.1 3.4-3 3.6-3.6 7.4-9.3 8.6-13.1 9-16 14-27.5 1-2.5 0.3-2-0.3-1.8-1.6-3.4-13.4-26.3-9-15.4-8-11.6-6.6-7.3-3-2.6-2.9-2-2.9-1.6-2.6-0.8-2.6-0.3zM412.8 74.2l-6 0.3-2 0.3-1 1.1 0.3 2.3 14.4 28 16.3 34.2 1 1.6 0.4 0.4 0.6-0.1 1.4-2.1 10.3-20.4 9-17 13.8-23.6 1.1-2.4 0.1-1.6-1.3-0.9-3.4-0.2zM502.8 88.2l-3 0.7-3.3 1.3-6.1 4-6.6 6.2-7.6 8.8-8.4 12-8 13-12 21.8-1.6 3.2-0.7 2.6 0.3 1.9 1 2.5 14.4 30.6 8.6 16.4 7 11.7 5.4 7.5 5.7 5.8 2.7 2 2.7 1.6 2.9 0.9 2.6 0.3 3-0.2 3-0.9 3-1.5 3-2.1 6.4-6 7-8.5 8-12 9.6-16.5 15-29.4 1-2.3 0.4-2.4-0.4-2.1-2-4.4-14-26.9-8-13.6-7.6-10.9-6-7-6-5.1-2.6-1.4-2.8-1.2-3-0.5zM543.8 74.2l-6 0.3-2 0.4-0.6 0.3-0.4 1 0.4 2 14.4 28 16.2 34 1 1.7 1 0.5 1.4-2 10.7-21.2 8.2-15.4 14.5-25 0.9-2 0.1-1.6-0.4-0.4-1-0.5-3.4-0.2zM633.8 88.2l-2.6 0.6-3.4 1.4-6.3 4-6.7 6.3-7 8.2-8 11.1-9 14.5-12 21.9-1.6 3.1-0.6 2.5 0.2 1.5 1 2.7 14.4 30.6 8.6 16.4 7 11.8 5.4 7.5 5.8 5.9 2.7 2 2.7 1.6 2.8 0.9 2.6 0.3 3-0.2 3-0.9 3.2-1.7 2.9-2 3.3-2.8 3.6-3.5 7-8.7 7-10.4 9-15.5 15-29.2 2-4.2 0.5-2.1-0.3-2-1.2-3.2-13-25.4-9.6-16.4-7.4-11-6.5-7.6-3.1-2.8-2.9-2.2-2.6-1.4-2.9-1.2-3-0.5zM674.8 74.2l-6 0.3-2 0.4-0.6 0.4-0.3 0.9 0.3 1.8 14.2 27.8 16.4 34.2 1 1.8 1 0.6 1.4-1.8 11.3-22.4 8.5-16 13.7-23.4 0.9-2 0.1-1.6-0.5-0.5-1-0.4-3.4-0.2zM764.8 88.2l-2.6 0.6-3.4 1.4-6.2 4-6.8 6.4-7 8.2-7.6 10.4-8.4 13.6-12.6 22.6-2 4.1-0.5 2.3 0.2 1.4 0.9 2.6 14.4 30.6 8.6 16.4 7 11.8 6 8.2 5.4 5.6 2.6 1.8 2.7 1.6 2.7 0.9 2.6 0.3 3-0.2 3-0.9 3.3-1.7 2.9-2 6.8-6.2 7-8.7 7.9-12 8.5-14.8 15-29.2 1.6-3.2 0.6-2.3-0.2-2-1.4-3.4-13-25.4-8.5-14.8-8.6-12.5-6.4-7.6-3.1-2.8-3-2.2-3.4-1.8-2.6-0.8-2.4-0.4zM19.2 74.2l-6 0.3-2 0.4-0.4 0.4-0.4 0.9 0.4 1.8 14.1 27.8 16.3 34.2 1 1.8 1 0.6 1.6-1.8 11.2-22.4 8.5-16 13.7-23.4 0.9-2 0.1-1.6-0.4-0.5-1-0.4-3.6-0.2zM173.8 180.7l-1 1.1-1 1.9-22.3 45.5-13.3 24.2-1 2.8 0.3 1 0.6 0.6 2.1 0.4 5 0.1 50.6-0.2 12.4-0.4 1.7-0.5 0.9-0.8-0.1-1.6-1-2.7-11.2-23.3-20.3-44.8-1.4-2.9zM304.8 180.7l-2 3.2-22.2 45.3-13.4 24.4-0.8 2.6 0.2 1 0.6 0.6 2 0.3 4.6 0.2 49-0.1 14-0.5 2-0.3 1-0.8-0-1.8-1-2.9-10.8-22.1-20.8-46.1-1.4-2.7-0.6-0.4zM436.2 180.6l-1 0.7-1 1.8-23.3 47.7-12.6 23-0.8 2.4 0.2 1 0.5 0.5 2 0.4 4.6 0.2 48-0.1 15-0.5 2-0.3 1-0.6 0.1-2-1.1-3.1-11.4-23.4-20.2-44.8-1-1.9zM567.2 180.6l-1 0.9-1 1.8-23.2 47.5-12.6 23-0.8 2.4 0.2 1 0.6 0.6 1.8 0.3 4.6 0.2 48-0.1 15-0.5 2-0.3 1.1-0.6 0.2-1-0.1-1-1.2-3.3-10.8-22.3-20.8-45.9-1-1.9zM698.2 180.6l-1 1-1 1.9-22.3 45.7-13.2 24-1 3 0.2 1 0.6 0.6 1.7 0.3 4.6 0.2 48-0.1 15-0.5 2-0.2 1.2-0.7 0.3-1.1-0.2-0.9-1.3-3.6-10.3-21-21.3-47.1-1-1.8zM42.8 180.6l-1 1-1 1.9-22.4 45.7-13.2 24-1 3 0.2 1 0.6 0.6 1.8 0.3 4.4 0.2 48-0.1 15-0.5 2-0.2 1.3-0.7 0.3-1-0.2-1-1.4-3.6-10.2-21-21.2-47.1-1-1.8z"/>
<path fill="#008dfa" d="M43.2 33.8l41 0.2 30 1.8 32.6-1.7 27.4-0.4 41 0.3 30 1.8 32.6-1.7 27.4-0.4 41.6 0.3 29.4 1.8 32.6-1.7 28-0.4 41 0.3 29.4 1.8 33-1.7 27.6-0.4 41 0.3 30 1.8 38-1.8 54.4-0.2 14 0.4 19 1.4 6 0.2 30.6-1.6 21-0.4 0.2 20-0.2 19.5-22.6 0.5-2.1 0.4-0.5 0.6-0.3 1 0.4 2 1.1 2.1 11.2 21.3 12.8 26.4 0.2 50.2-0.2 16.7-16.9 34.3-6.4 12-7.3 12.7-1 2.3-0.2 1.4 0.8 1.2 2.4 0.5 28.6 0.1 0.2 19.8-0.2 19.8-34-0.3-29.6-1.8-32 1.6-29.4 0.4-39-0.2-30.6-1.8-31.4 1.6-28 0.4-41-0.2-30.6-1.8-31.4 1.6-26.6 0.4-42.4-0.2-30.6-1.8-31 1.6-24 0.4-45-0.1-31-1.9-30 1.5-21 0.5-48.4-0.1-31.6-1.9-28.4 1.5-13.6 0.4-40 0.1-21-0.2-0.2-56.5 0.2-17.9 8-12.1 9.6-16.7 14.4-28.4 1.6-3.4 0.3-2.1-0.4-2-2.5-5.3-14-27-9-15.1-8-11.2-0.2-18.4 0.2-47.3 18.6-0.9zM108.2 87.7l-5.4 2.1-6.5 4.4-6.5 6.3-7 8.3-8 11.3-9 14.6-12 22.1-1.5 3.3-0.3 1.7 0.2 2.1 1 2.5 14.6 30.6 8.4 16.5 7 11.8 6 8.2 5.8 5.7 2.8 2.1 2.9 1.5 2.5 0.7 2.6 0.2 3-0.3 3-1 3-1.6 3-2 6.4-6.2 7.6-9.3 8-12.2 8.4-14.8 15.6-30.4 1-2.3 0.4-2.4-0.4-2.1-2-4.4-14-27-8.6-14.5-7.4-10.9-6.6-7.4-3-2.7-3.4-2.4-3-1.4-2.6-0.8-3-0.2zM144.2 73.7l-2 0.3-1.1 0.8-0.3 1.4 0.9 2.6 13.8 26.4 17.3 36.2 1 1.4 1 0 1.4-2.4 9.9-19.6 8.4-16 6.5-11.6 9.2-15.2 0.8-1.8 0.2-1.4-0.4-0.7-1-0.5-4-0.3-41.6 0zM239.2 87.7l-3.2 1.1-3 1.4-6.2 4.6-7 6.9-7 8.6-8 11.5-8.6 14-11.4 21.2-1.5 3.2-0.2 1.6 0.1 1.8 1 2.6 14.6 30.6 8.4 16.5 7 11.8 6 8.3 5.9 5.8 2.8 2 2.9 1.5 2.4 0.8 2.6 0.2 2.4-0.2 3-0.8 3-1.5 3.6-2.4 3.4-3 3.6-3.6 7.4-9.4 7.6-11.5 9.4-16.7 14.6-28.5 1-2.3 0.5-2.6-0.5-2.3-1.6-3.3-13.4-26.3-9-15.5-8-11.6-6.6-7.4-3.4-3-3-2-3-1.5-2.6-0.7-3-0.2zM275.2 73.7l-2 0.4-1.1 0.7-0.2 1.4 0.9 2.5 13.8 26.5 17.2 36 1 1.5 1 0.1 1.4-2.2 10.8-21.4 8.5-16 6.5-11.4 8.2-13.6 0.9-2 0.1-1.5-0.4-0.7-1-0.4-4-0.3-41.6-0zM370.2 87.7l-3.1 1.1-3 1.4-6.2 4.6-6.7 6.4-7 8.5-8 11.5-8 13-12 22-1.4 3.1-0.7 2.5 0.2 1.4 0.9 2.8 15 31.6 8.6 16.4 7 11.7 6 8.1 5.4 5.5 2.8 1.9 2.8 1.5 2.4 0.7 2.6 0.3 2.4-0.2 3-0.8 3.1-1.5 3-1.9 3.4-2.9 3.5-3.5 7.1-8.6 7.9-12 9.6-16.6 15-29.4 1.2-3.1 0.4-2-0.6-2.4-1.6-3.4-14-27.2-8.4-14.5-7.6-11-7-8-3.4-2.9-3-2-3-1.5-2.6-0.7-3-0.2zM406.2 73.7l-2 0.4-1 0.7-0.2 1.4 0.8 2.3 13.6 26.3 17.4 36.2 1 1.6 0.4 0.4 0.6-0.1 1.4-2.1 10.4-20.6 9-17 5.9-10.4 8.7-14.5 1.1-2.5-0.1-1.3-0.4-0.6-1-0.3-4.6-0.3-41-0zM501.8 87.7l-2.6 0.7-3.1 1.4-3.2 2-3.3 2.4-6.4 6.1-7.4 8.9-8.6 12.1-8.4 14-11.6 21.1-1.4 3.1-0.6 2.3 0.2 1.4 0.8 2.6 14.6 30.6 8.4 16.5 7 11.9 6.6 8.9 5.4 5.5 2.9 2 2.7 1.4 2.4 0.8 2.6 0.3 2.4-0.1 3-0.9 3.2-1.4 3.6-2.5 6.8-6.4 7-8.7 8-12.1 8.4-14.8 15.6-30.3 1.3-3.3 0.4-2-0.4-2-1.9-4.1-13.4-26.2-8.6-14.6-8-11.7-6.4-7.5-3-2.7-3-2.2-3.1-1.5-2.9-1-3-0.3zM537.8 73.7l-2.6 0.4-0.9 0.7-0.2 1.4 0.7 2.1 14.2 27.5 16.8 35 1 1.7 1 0.4 1.4-1.9 11.2-22.2 8.5-16 14.3-24.3 1.2-2.7-0.2-1.5-0.7-0.5-1.3-0.3-4.4-0.2-40.6 0zM632.8 87.7l-2.6 0.7-3 1.4-6.5 4.4-6.9 6.7-7 8.4-8 11.4-8 13-12.6 22.9-1.4 3.2-0.5 2 0.5 2.4 1 2.5 14 29.5 8.4 16.6 7 11.9 6 8.3 5.6 5.8 2.6 2 2.8 1.6 2.6 0.9 3 0.4 2.4-0.1 3.1-0.8 3.2-1.6 3.6-2.4 6.7-6.3 7.4-9.3 8.6-13.1 9-15.9 14.4-28.5 1.1-2.5 0.3-2-0.4-2-2-4.3-13.4-26.2-9-15.4-8-11.5-6.6-7.3-3.2-2.7-3-2-3.2-1.5-2.6-0.7-2.4-0.2zM668.8 73.7l-2 0.3-1.4 0.8-0.2 1.4 0.7 2 14.2 27.6 16.7 34.8 1 1.8 1 0.6 1.4-1.8 10.8-21.4 9-17 6-10.6 8.2-13.5 1.2-2.5 0.2-1.4-0.4-0.6-0.9-0.6-4.1-0.3-41-0zM763.7 87.7l-5.5 2.1-6.4 4.4-6.6 6.3-7 8.3-8 11.3-9 14.6-12 22.1-1.4 3.3-0.3 1.7 0.3 2.1 1 2.5 14.4 30.6 8.6 16.5 7 11.8 6 8.2 5.7 5.7 2.7 2.1 3 1.5 2.6 0.7 2.4 0.2 3-0.3 3-1 3-1.6 3.1-2 6.5-6.2 7.4-9.3 8-12.2 8.6-14.8 15.4-30.4 1-2.3 0.5-2.4-0.5-2.1-2-4.4-14-27-8.5-14.5-7.5-10.9-6.4-7.4-3-2.7-3.6-2.4-3-1.4-2.4-0.8-3-0.2zM13.2 73.7l-2 0.3-1.3 0.8-0.2 1.4 0.7 2 14.2 27.6 16.6 34.8 1 1.8 1 0.6 1.6-1.8 10.7-21.4 9-17 6-10.6 8.3-13.5 1.1-2.5 0.2-1.4-0.3-0.6-1-0.6-4-0.3-41-0zM173.8 180.1l-1 1.1-1 1.9-22.4 45.7-14 25.4-0.9 3 0.7 1.2 2 0.5 5.6 0.1 50-0.1 14-0.5 1.4-0.3 1.1-0.9 0.1-2-1.2-2.9-11.2-23.1-21.2-46.9-1-1.7zM304.8 180.2l-2 3.1-22.8 46.5-13.3 24-1.1 3 0.1 1 0.5 0.6 2 0.5 4.6 0.1 50.4-0.1 14.6-0.5 2-0.5 0.6-0.7 0.1-1.9-1.3-3.2-10.6-21.9-21.4-47.1-1.4-2.6-0.6-0.4zM435.8 180.2l-2 3.3-21.9 44.7-6.4 12-7.7 13.6-1.1 3 0.1 1 0.4 0.5 1.6 0.5 4.4 0.2 50.6-0.1 15-0.5 2-0.5 0.7-0.7 0.2-1.4-0.9-2.8-11.8-24.2-20.2-44.8-2-3.7-0.6-0.2zM567.2 180.1l-1 0.8-0.9 1.8-23.3 47.5-13.2 23.8-1.1 3.2 0.5 1 0.6 0.3 2.4 0.4 6.6 0.1 49-0.1 13-0.5 2-0.4 0.8-0.8 0.2-1.4-1-3-11.3-23-21.3-47.1-1-1.9zM698.2 180.1l-1 1-1 1.8-23.1 47.3-13.3 24-0.9 3 0.3 0.9 0.6 0.4 2 0.4 6 0.1 49.9-0.1 13.5-0.5 1.6-0.4 0.9-0.8 0.1-2-1-2.6-11.9-24.4-20.7-45.7-1-1.8zM42.8 180.1l-1 1-1 1.8-23.2 47.3-13.4 24-0.8 3 0.4 0.9 0.4 0.4 2 0.4 6 0.1 50-0.1 13.6-0.5 1.4-0.4 1-0.8 0.1-2-1.1-2.6-11.8-24.4-20.6-45.7-1-1.8z"/>
<path fill="#00c4e2" d="M21.2 34.8l22-0.3 37.6 0.1 11 0.4 22.4 1.6 37-1.8 54-0.2 16.6 0.4 23.4 1.6 36.6-1.8 51.4-0.3 18.6 0.4 24.4 1.7 36-1.8 50-0.3 20.6 0.4 25 1.7 35.4-1.8 48.6-0.3 21.4 0.4 25.6 1.7 35.4-1.8 47.6-0.3 22.4 0.4 25.6 1.7 29.4-1.6 22.6-0.4 0.2 19.2-0.2 18.7-23.6 0.6-2.1 0.7-0.4 0.4-0.2 1 1.3 3.6 11.6 22 13.4 27.5 0.2 49.5-0.2 16.1-15.4 31.3-7.4 14-8.6 15-1.3 3.6 0.7 1.2 2.4 0.6 29.6 0.2 0.2 19-0.2 19-34.6-0.3-29-1.9-32.4 1.8-29 0.4-40-0.3-29.6-1.9-32.4 1.8-27 0.4-41.6-0.2-30-2-32 1.8-26 0.4-43-0.2-30-2-31.4 1.7-22.6 0.4-46.4-0.1-30.6-2-30.4 1.7-19 0.4-50.6-0.1-31-2-27 1.5-14 0.5-39 0.2-23-0.3-0.2-55.7 0.2-17.3 7.6-11.2 9.4-16.6 15-29.4 1.6-3.2 0.5-2.3-0.2-2-1.3-3.4-7.6-15.1-7.4-14.1-9-15.3-4.6-6.7-4-5.3-0.2-17.7 0.2-46.5zM109.8 86.7l-3 0.7-3.4 1.4-6.2 4-7 6.5-7.4 8.9-8.5 12-8.1 13-12.4 23-1.6 3.1-0.5 2.5 0.1 1.4 1 2.8 14.4 30.7 8.6 16.6 7 11.9 6.4 9 5.5 5.6 2.7 2 2.8 1.4 2.6 0.9 2.4 0.4 3-0.3 3-0.9 3.2-1.6 2.9-1.9 3.5-2.9 3.4-3.6 7-8.6 8-12.1 8.6-14.8 15.4-30.3 1.6-3.3 0.6-2.4-0.2-2-1-2.6-13.4-26.5-8.6-15-8.4-12.7-6.6-7.8-3.1-3-3.3-2.4-2.6-1.6-3-1-2.4-0.5zM150.2 72.7l-6.4 0.3-2.6 0.4-1 0.7-0.2 0.7 0.4 2 15 29 16.8 35.2 1 1.8 1 0.7 1-0.7 1-1.8 11.3-22.2 9-17 14.4-24 1.1-2.6-0.1-1.4-0.7-0.7-1-0.3-3.5-0.2zM240.7 86.7l-2.9 0.7-3.3 1.4-3.4 2-3.3 2.4-7 6.7-7 8.4-8 11.3-9 14.7-12 22.1-1.6 3.1-0.5 2.3 0.5 2.4 1 2.7 14.6 30.6 8.4 16.5 7 11.8 6 8.3 5.6 5.6 2.7 2.1 2.7 1.4 2.6 0.9 2.4 0.3 3-0.2 3-0.8 3.3-1.6 2.9-2 3.4-2.8 3.4-3.6 7-8.6 8-12 8.6-14.8 15.4-30.2 1.9-4 0.4-2-0.3-2.3-1-2.5-13-25.6-9.4-16.7-8-11.9-6.6-7.7-3-2.9-3.3-2.4-2.7-1.6-3-1.1-2.4-0.4zM281.3 72.7l-6.5 0.3-2.6 0.4-0.5 0.4-0.6 1 0.4 2 15 29 17.3 36 1 1.5 1 0.1 1.4-2.2 10.3-20.4 9-17 6.6-11.6 9.1-14.9 0.9-2.1-0.1-1.4-0.4-0.6-1.4-0.4-3.4-0.2zM372.2 86.7l-2.8 0.5-2.7 1-2.9 1.6-3.7 2.4-7.3 6.8-7.6 8.8-7.4 10.5-9 14.4-13 23.9-1.6 3.2-0.3 2 0.3 2.4 1 2.5 14.6 30.6 8.4 16.5 7 11.9 6 8.2 5.7 5.9 2.7 2 2.8 1.4 2.8 1 2.6 0.3 2.5-0.3 3.4-1 3.1-1.5 3.4-2.5 6.6-6.2 7-8.7 8.4-13 8.5-15 15.6-30.4 0.9-2.4 0.4-2.3-0.4-2-1.4-3.5-13-25.4-9.6-16.5-7.4-11.1-6-7.2-6-5.3-3.4-2-2.6-1-2.6-0.5zM412.2 72.7l-6.4 0.3-2.6 0.5-0.4 0.3-0.6 1 0.4 2 15 29 17.2 35.8 1 1.6 1 0.2 1.4-2 11.7-23.2 8.6-16 6-10.4 8.7-14.4 1-2.2-0.1-1.4-1.3-0.9-4-0.3zM503.2 86.7l-2.7 0.5-2.7 1.1-3 1.5-3.6 2.4-7 6.4-7.4 8.7-8.6 11.9-9 14.6-12.4 22.9-1.6 3.4-0.2 1.7 0.2 2.1 1 2.5 15 31.7 8 15.5 7.6 12.7 6 8.1 5.4 5.5 2.5 1.9 2.8 1.4 2.7 1 2.6 0.3 3-0.3 3-1 3-1.5 3.4-2.4 6.6-6.2 7.4-9.4 7.6-11.4 9.4-16.7 14.6-28.5 1.4-3.3 0.6-2.2-0.4-2.4-1.2-2.6-13.4-26.5-8.6-14.9-8-12-6.4-7.8-6-5.2-3-1.8-2.9-1.2-2.7-0.5zM543.8 72.7l-9 0.6-1.3 0.9-0.2 1 0.4 1.6 15.3 29.4 16.8 35.2 1 1.7 1 0.4 1.4-1.9 11.3-22.4 8.5-16 6.6-11.4 8.6-14.2 1.1-2.4-0.1-1.4-0.4-0.6-1-0.4-3.6-0.2zM634.2 86.7l-3 0.7-3.4 1.4-6 3.9-7 6.5-7 8.2-7.6 10.4-9 14.4-13 23.8-1.5 3.2-0.6 2.6 0.1 1.7 1 2.7 14.6 30.7 8.4 16.5 7 12 6 8.3 5.9 6.1 2.7 2 2.8 1.4 2.6 0.9 2.6 0.4 3-0.3 3-0.9 3-1.5 3-2 6.4-6 7-8.6 8-11.9 9-15.7 15.6-30.3 1.4-3.2 0.6-2.3-0.2-2-1.4-3.4-12.4-24.6-8.6-15.1-8.4-12.9-6.6-8-3.1-3-3.2-2.6-3.1-1.9-2.8-1.1-2.8-0.5zM674.8 72.7l-6.6 0.3-2.4 0.4-1 0.6-0.4 0.8 0.4 2 15.3 29.4 16.7 35 1 1.8 1 0.5 1.4-1.7 11.4-22.6 9.3-17.4 6.1-10.6 8.3-13.4 1.1-2.6-0.1-1.4-0.5-0.6-1-0.4-3.6-0.2zM765.2 86.7l-3 0.7-3.3 1.4-6.1 4-7 6.5-7.6 8.9-8.5 12-8 13-12.5 23-1.4 3.1-0.6 2.5 0.1 1.4 0.9 2.8 14.6 30.7 8.4 16.6 7 11.9 6.6 9 5.4 5.6 2.7 2 2.8 1.4 2.5 0.9 2.6 0.4 3-0.3 3-0.9 3.1-1.5 2.9-2 3.4-2.9 3.6-3.6 7-8.6 8-12.1 8.5-14.8 15.5-30.3 1.5-3.3 0.6-2.4-0.1-2-1-2.6-13.6-26.5-8.4-15-8.6-12.7-6.5-7.8-3.1-3-3.3-2.4-2.6-1.6-2.9-1-2.6-0.5zM19.2 72.7l-6.4 0.3-2.6 0.4-1 0.6-0.3 0.8 0.4 2 15.3 29.4 16.6 35 1 1.8 1 0.5 1.6-1.7 11.3-22.6 9.3-17.4 6.1-10.6 8.3-13.4 1.1-2.6-0.1-1.4-0.6-0.6-1-0.4-3.4-0.2zM173.8 179.6l-1 1-1 1.9-23.2 47.3-5.7 10.4-8.3 14.6-1 3 0.3 1 0.7 0.4 2.6 0.5 7 0.1 50.6-0.2 12.4-0.5 2-0.5 0.9-0.8-0.1-2-1.2-3.3-11.3-22.7-21.3-47.1-1.4-2.7zM304.8 179.6l-2 3.1-22.8 46.5-5.9 11-8.4 14.6-1 3 0.3 1 0.7 0.4 2.5 0.5 7 0.1 50.6-0.2 12.4-0.5 2-0.4 1-0.9 0.1-1.6-1.1-2.8-12.3-25.2-20.7-45.7-1.4-2.6zM435.8 179.7l-2 3.2-22.7 46.3-6.5 12-7.8 13.6-1 3 0.3 1 0.7 0.4 2.4 0.4 5.6 0.2 50.4-0.2 14-0.5 2-0.4 1-0.8 0.2-1.7-1.2-3-11.7-24-21.3-46.9-1.4-2.5zM566.8 179.7l-2 3.4-22.4 45.7-5.9 10.9-8.7 15.4-0.9 2.7 0.3 1 0.6 0.4 2.4 0.4 5.6 0.2 51.4-0.2 13.6-0.5 1.5-0.3 1.1-1-0.1-2-1.1-2.9-11.1-22.7-21.3-47.1-1.6-2.9-0.4-0.5zM698.2 179.5l-1 1-1 1.8-23.2 47.5-14.2 25.4-0.8 2.6 0.2 0.8 0.9 0.6 2.7 0.5 6.4 0.1 50.6-0.2 13-0.5 2-0.5 0.7-0.8-0.1-2-1.2-3.1-11.7-23.9-21.3-46.9-1-1.8zM42.8 179.5l-1 1-1 1.8-23.3 47.5-14.3 25.4-0.7 2.6 0.3 0.8 0.8 0.6 2.6 0.5 6.6 0.1 50.4-0.2 13-0.5 2-0.5 0.8-0.8-0.1-2-1.1-3.1-11.8-23.9-21.2-46.9-1-1.8z"/>
<path fill="#00e9ae" d="M14.3 35.8l28.9-0.5 37 0.1 12.6 0.5 15.4 1.4 6 0.2 37.6-1.9 53-0.2 17.4 0.4 23 1.7 37-1.9 50.6-0.3 18.4 0.4 19.6 1.6 6 0.2 36-1.9 49-0.3 20 0.4 26 1.8 36-1.9 47.4-0.3 21.6 0.4 26 1.8 36-1.9 46.4-0.3 22.6 0.4 26 1.8 28.4-1.7 23.5-0.4 0.3 18.4-0.2 17.9-23.6 0.6-2.5 0.5-0.6 0.4-0.4 1 0.4 2 1.1 2.5 11.9 22.1 13.7 28.1 0.2 48.9-0.2 15.4-16.8 34-7.5 14-7.7 13.2-1.6 3.8 0.2 1 0.4 0.6 3 0.6 30 0.2 0.2 18.2-0.2 18.2-35.5-0.3-28.1-2-31.4 1.9-29.6 0.4-41-0.3-28.9-2-31.1 1.8-28.4 0.5-42.6-0.3-29-2-30.4 1.8-26.6 0.5-43.4-0.2-9-0.4-21.6-1.7-30.4 1.8-24 0.4-46-0.1-9-0.4-21.6-1.7-29.4 1.8-20.6 0.4-50-0.1-9.4-0.4-16-1.4-6-0.3-27 1.7-14 0.4-39.6 0.2-22-0.3-0.2-54.9 0.2-16.6 8-12.1 8.6-14.8 16-31.3 1.4-3.5 0.4-1.7-0.3-2.6-1.1-2.5-8-16.1-7-13.2-9.4-16.2-4.6-6.8-4-5.3-0.2-16.9 0.2-45.7zM33.2 71.7l-22 0.6-2.4 0.7-0.6 0.8-0.1 1 1.7 4.1 7.8 14.3 7.9 15.6 15.7 33.1 1 1.7 1 0.5 1.6-1.7 11.6-23.2 9.1-17 7-12 8.3-13.2 0.9-2.2 0.1-1.6-1-1-3.6-0.4zM108.2 86.2l-3.1 1-3.1 1.6-6.2 4.4-7 7-7 8.6-8 11.5-9 14.9-11.6 21.3-1.4 3.3-0.4 2 0.4 2.4 1 2.5 14.4 30.7 9 17.5 7 11.8 6 8.2 5.6 5.6 5 3.3 2.4 1 3 0.4 2.6-0.1 3-0.9 3.2-1.5 3.6-2.5 6.6-6.2 7.6-9.3 8.4-13 9-16 15-29.6 1.1-2.3 0.4-2.6-0.5-2.3-1.4-3.4-14.6-28.3-9-15.4-7.4-10.9-6.6-7.4-3-2.7-3.4-2.5-3-1.4-2.6-0.7-3-0.3zM164.2 71.7l-22 0.6-2.4 0.8-0.5 0.7-0.1 1 1.6 3.9 8.1 15.1 7.7 15 15.6 32.9 1 1.7 1 0.7 1-0.7 1-1.8 11.8-23.4 9.5-17.4 5.5-9.6 8.8-14 1-2.4 0.1-1.6-1.1-1-3.6-0.4zM239.8 86.2l-2.6 0.6-3.1 1.4-3.3 2-3.3 2.6-6.7 6.4-7.6 9.1-8 11.4-8.4 13.9-12.6 23.1-1.4 3.4-0.3 1.7 0.3 2.1 1 2.5 14.4 30.8 8.6 16.6 7 12 6 8.4 3 3.4 3 2.8 3 2.3 2.4 1.3 2.6 0.9 3 0.3 3-0.3 3-1 3-1.6 3-2.1 6.4-6.1 7.6-9.3 8-12.2 9-15.8 15.4-30.5 1.3-3.1 0.3-2-0.6-2.6-1.4-3.3-14-27.4-8.6-14.7-8.4-12.4-6.6-7.4-3-2.7-3-2.1-2.5-1.4-2.9-1-3-0.3zM295.2 71.7l-22 0.6-1.4 0.3-1 0.6-0.5 1.6 1.5 3.7 8.2 15.3 7.4 14.4 15.8 33.3 1 1.8 1 0.8 1-0.6 1-1.7 11.7-23 9.1-17 7-12 7.8-12.6 1.1-2.4 0.1-1.6-0.2-0.5-1-0.6-3.6-0.3zM370.8 86.2l-2.6 0.7-3 1.3-3.3 2-3.3 2.6-6.8 6.5-7 8.4-8.6 12.2-8.4 13.9-12.6 23.1-1.2 2.9-0.4 2 0.2 1.7 1 2.7 15 31.8 8.4 16.5 7 11.9 6 8.3 3 3.3 3 2.8 2.8 2 2.8 1.4 2.4 0.7 2.6 0.3 2.4-0.2 3-0.8 3-1.5 3.6-2.5 3.4-2.9 3.6-3.6 7.5-9.4 8.5-13.1 9-16.1 14.4-28.5 1.4-3.4 0.3-2-0.7-2.9-1.4-3.2-14-27.3-9-15.5-7.6-11-6.4-7.5-3.4-3-2.8-2-2.8-1.6-3.1-1-2.9-0.3zM426.2 71.7l-22 0.6-1.5 0.3-0.9 0.6-0.4 1.6 1.4 3.5 8.6 15.9 7.1 14 16.3 34.1 1.4 1.8 1-0.5 1-1.6 17.3-33.8 8.5-15 9.8-15.7 1.1-2.3 0.3-1.4-0.3-1-0.7-0.5-3-0.5zM501.8 86.2l-2.6 0.7-3 1.3-6.5 4.6-6.9 6.6-7 8.5-8 11.4-9.6 15.5-12 22.3-1 2.1-0.5 2.6 0.2 2 1.3 3.3 14 29.7 9 17.6 7 11.8 6 8.4 5.6 5.7 2.5 1.9 2.9 1.7 2.6 0.9 3 0.4 2.4-0.2 3-0.8 3.1-1.4 3.6-2.6 3.5-3 3.8-3.9 7-8.9 8-12.2 9-15.9 15-29.5 1.5-3.6 0.3-2-0.3-2-1.9-4.3-14-27.3-9-15.5-7.6-10.9-6.4-7.5-3-2.7-3.1-2.2-2.9-1.6-3-1-3-0.3zM557.8 71.7l-22.6 0.6-1.4 0.4-0.9 0.5-0.4 1.6 1.7 4.3 8.3 15.1 7.6 15 15.7 32.9 1 1.6 1 0.4 1.4-1.9 11.4-22.4 9.3-17.6 6.1-10.4 9.3-15 0.8-2 0.2-1.6-1-1-3.5-0.4zM632.8 86.2l-3.3 1-3.1 1.6-6.2 4.4-7 6.9-7 8.6-8 11.5-8.4 14-12 22.1-1.6 3.2-0.4 2.3 0.4 2.4 1 2.7 14.6 30.7 8 15.7 7.4 12.8 6 8.3 5.6 5.8 2.6 2 2.8 1.7 2.6 0.9 3 0.4 2.4-0.2 3-0.8 3.2-1.4 3.6-2.6 6.8-6.3 7-8.7 8.4-12.9 9-15.9 15.6-30.5 1-2.4 0.3-2.3-0.3-2-1.6-3.5-13.4-26.5-9.6-16.5-7.4-11-6.6-7.6-3-2.9-3.4-2.5-3-1.6-3.1-0.9-2.9-0.3zM688.8 71.7l-22 0.6-2.6 0.7-0.5 0.8-0.1 1 1.6 4.1 7.9 14.3 7.9 15.6 15.8 33.1 1 1.7 1 0.5 1.4-1.7 11.7-23.2 9.1-17 7-12 8.2-13.2 1-2.2 0.1-1.6-1.1-1-3.4-0.4zM763.8 86.2l-3.2 1-3.1 1.6-6.2 4.4-7 7-7.1 8.6-8 11.5-9 14.9-11.4 21.3-1.6 3.3-0.3 2 0.3 2.4 1 2.5 14.6 30.7 9 17.5 7 11.8 6 8.2 5.4 5.6 5 3.3 2.5 1 3.1 0.4 2.4-0.1 3.1-0.9 3.2-1.4 3.6-2.6 6.7-6.2 7.4-9.3 8.6-13 9-16 15-29.6 1-2.4 0.4-2.5-0.4-2.3-1.6-3.4-14.4-28.3-9-15.4-7.6-10.9-6.4-7.4-3.1-2.7-3.5-2.5-3-1.4-2.4-0.7-3-0.3zM42.2 179.2l-1.4 2.5-22.9 46.5-6.4 12-8.8 15-1.1 3 0.2 1 1 0.8 2.4 0.4 8 0.2 51-0.2 13.1-0.6 1.8-0.6 0.7-0.7 0-1.7-1-2.9-12.3-24.7-21.3-46.9-1.4-2.8-0.6-0.5zM173.8 179l-1 1-1 1.9-14.7 30.3-9.1 18-6 11-8.2 14.2-1.1 2.8 0.2 1 0.9 0.8 2.4 0.4 6.6 0.2 50.4-0.2 14.6-0.5 2-0.4 1-0.8 0.1-1.9-1.1-3.1-12.4-24.9-21.2-46.7-1.4-2.7zM304.8 179l-1 1.2-1 1.9-15.4 31.7-8.3 16.4-6 11.1-8.3 14.3-1 2.6 0.2 1 0.8 0.7 2 0.5 6 0.1 50.4 0 15.6-0.6 2-0.4 1-0.7 0.2-2-1.2-3.3-12.3-24.7-21.3-47-1.4-2.5zM435.8 179.1l-2 3.2-22.8 46.5-6.5 12-8.7 15-0.9 2.4 0.2 1 0.7 0.7 2 0.5 5.4 0.1 50.6 0 16-0.6 2-0.4 1.1-0.7 0.3-1-0.1-1-1.3-3.5-11.7-23.5-21.9-48.2-1.4-2.4zM566.8 179.2l-2 3.3-22.7 46.3-6.5 12-8.7 15-0.9 2.4 0.2 1 0.6 0.6 2 0.6 5 0.1 50.4-0 16.6-0.6 2-0.3 1.2-0.8 0.3-1.6-1.1-3.1-12.7-25.9-20.7-45.7-1.6-2.9-1-0.7zM697.8 179.2l-1.6 2.5-22.8 46.5-6.4 12-8.8 15-1.1 3 0.2 1 0.9 0.8 2.6 0.4 8 0.2 51-0.2 13-0.6 1.8-0.6 0.6-0.7 0.1-1.7-1.1-2.9-12.2-24.7-21.2-46.9-1.6-2.8-0.4-0.5z"/>
<path fill="#00fa5c" d="M29.9 36.2l53.9 0.2 10.4 0.5 15 1.3 5.1 0.2 36.5-2 55.4-0.2 15.6 0.4 23.4 1.8 36-2 53-0.2 18 0.4 19.5 1.6 5.1 0.2 35.4-2 50.6-0.2 20 0.4 25 1.8 35-2 49.4-0.2 21.6 0.4 25 1.8 35-1.9 48.4-0.3 22.6 0.4 25 1.8 29.4-1.8 22.6-0.4 0.2 17.6-0.2 17.1-24.6 0.6-2.5 0.6-0.6 0.7-0.2 1 0.3 1.4 1 2.5 12.2 22.5 14.4 29.4 0.2 48.2-0.2 14.8-16.3 33.2-7.6 14-9.1 15.5-1 2-0.5 1.9 0.3 1 0.6 0.5 2.7 0.5 30.9 0.2 0.2 17.4-0.2 17.3-35-0.2-28.6-2.1-30 1.9-29.4 0.4-42-0.2-29.6-2.1-30 1.9-28.4 0.4-43-0.2-29.6-2.1-29.5 1.8-26.9 0.5-45-0.2-29.6-2.1-29 1.8-24.4 0.5-47.6-0.2-9.4-0.4-20.6-1.7-28 1.8-21 0.5-51.4-0.2-10-0.4-15.1-1.4-5.9-0.3-25.6 1.6-14.4 0.6-40 0.1-22.6-0.2-0.2-54.1 0.2-15.8 9-13.8 9-16 15-29.6 1.4-3.4 0.3-2-0.7-2.9-1.4-3.3-8-16-7-13.2-9.6-16.2-8-11.2-0.2-16.1 0.2-44.9 14-0.8zM109.8 85.2l-3 0.7-3.4 1.3-6.2 4.1-7 6.5-7.4 8.9-8.6 12.2-8.4 13.9-13 24-1.3 3-0.4 2 0.1 1.7 1 2.8 15 31.8 8.6 16.6 7 12 6.4 9 5.5 5.5 2.6 2 2.7 1.6 2.8 0.9 2.4 0.3 3-0.2 3-1 3-1.5 3.1-2.1 3.5-2.9 3.4-3.5 7.6-9.4 8-12.2 8.4-14.9 16-31.5 1.6-3.5 0.2-1.5-0.2-2.4-1-2.5-13-25.8-9.6-16.8-8-12.1-6.4-8-3-2.9-3.2-2.5-3.3-2-2.5-1.1-3-0.6zM145.8 71.2l-4.6 0.3-2 0.6-0.8 1.1 0.5 2.6 15.6 29.4 17.7 37.1 1 1.8 1 0.6 1-0.7 1-1.7 12.2-24.1 9.2-17 6.4-11 8.8-14 1.1-2.4-0.1-1.6-0.6-0.6-1-0.4-4.4-0.3-33.6-0zM240.8 85.2l-2.6 0.6-3.4 1.3-6.4 4.1-6.6 6.2-7.6 8.8-8.4 12-9.6 15.6-12.4 23.2-1.1 2.2-0.5 2.6 0.2 2 1.4 3.4 13.4 28.7 8.6 16.8 7.4 13.1 6 8.5 6.1 6.5 2.9 2.3 2.9 1.7 2.7 0.9 2.4 0.3 3-0.2 3-0.9 3.3-1.7 2.9-2 3.4-2.8 3.4-3.5 7-8.7 8-12 9-15.8 16-31.4 1.6-3.4 0.3-1.8-0.3-2.6-1-2.5-13.6-26.7-9.4-16.7-8-12-6.6-7.7-3-2.8-3.2-2.6-2.8-1.5-3-1.1-2.4-0.5zM277.2 71.2l-5 0.4-2 0.6-0.5 0.6-0.2 1 0.5 2 15.6 29.4 18.2 37.9 1 1.4 1 0.1 1.4-2.1 11.3-22.3 9.1-17 6.9-12 9.7-15.4 0.8-2-0.1-1.6-0.7-0.6-1-0.4-4.4-0.3-33.6 0zM371.8 85.2l-2.6 0.6-3.4 1.4-6.3 4-6.7 6.3-7.6 8.9-8 11.2-9 14.7-13 23.9-1.4 3.3-0.5 2.3 0.4 2.4 1.1 2.7 15 31.9 8.4 16.5 7 11.9 6 8.2 5.7 5.8 2.6 2 2.7 1.6 3 0.9 2.6 0.3 3-0.3 2.9-0.9 3.1-1.6 3.4-2.4 6.6-6.4 7-8.7 8.4-13 9-15.9 15.6-30.6 1-2.4 0.4-2.6-0.4-2.4-1.6-3.4-13.4-26.5-9-15.8-8-11.9-6.6-7.7-3.4-3.3-2.7-2-2.9-1.6-3-1.1-2.4-0.4zM408.2 71.2l-5 0.4-2 0.6-0.4 0.7-0.2 0.9 0.6 2.4 15.2 28.6 18.4 38.1 1 1.5 1 0.2 1.4-1.9 11.9-23.5 9.4-17.4 6.4-11 9.3-15 0.9-2-0.1-1.6-0.8-0.7-1-0.3-4.4-0.3-33 0zM502.8 85.2l-3 0.8-3.1 1.2-3.4 2-3.3 2.6-7.2 6.9-7 8.4-8.6 12.2-8.4 14-12.6 23.1-1.4 3.3-0.4 2.1 0.4 2.4 1 2.5 14 29.8 8.4 16.8 7.6 12.9 6 8.5 3 3.5 3 2.9 2.8 2.2 2.7 1.5 2.9 0.9 2.6 0.3 3-0.3 3-0.9 3-1.6 3.4-2.4 6.6-6.3 7-8.7 8-12.1 8.4-14.9 16-31.4 1.6-3.3 0.5-2.3-0.2-2-1.3-3.5-13-25.7-9.6-16.8-8-12.1-6.4-7.8-3.4-3.1-3.2-2.5-2.6-1.5-2.8-1.1-3.1-0.6zM539.2 71.2l-5 0.4-1.9 0.6-0.6 1.6 0.5 2.2 15.3 28.8 18.3 37.9 1 1.6 1 0.4 1.4-1.8 11.7-23.1 9.1-17 7-12 9.1-14.6 1.1-2.4-0.1-1.6-0.4-0.4-1.5-0.6-4.4-0.3-33 0zM633.8 85.2l-3 0.8-3 1.3-3.4 1.9-3.3 2.6-6.9 6.5-7.4 9-9 13-8.6 14-12 22.3-1.3 3.2-0.4 2 0.3 2.1 1 2.6 14.4 30.8 8.6 16.7 7.4 12.8 6 8.4 5.9 6 2.7 2.1 2.6 1.5 2.8 0.9 2.6 0.3 3-0.3 3-0.9 3-1.5 3-2.1 3.4-3 3.6-3.5 7.4-9.4 8.6-13.1 8.4-15.1 15-29.5 1.6-3.2 0.6-2.6-0.2-2-1-2.7-13-25.8-9-16-9-13.7-6.4-7.8-3.3-3-3.2-2.6-2.6-1.4-2.9-1.2-3-0.5zM670.2 71.2l-5 0.4-1.8 0.6-0.6 1.6 0.4 2 15.4 29 18.2 37.7 1 1.7 1 0.5 1-0.9 1-1.7 11.7-23.3 9.5-17.6 6.4-11 8.8-14 1.1-2.4-0.1-1.5-0.4-0.6-1.1-0.5-4.5-0.3-33.4 0zM765.2 85.2l-3 0.7-3.3 1.3-6.1 4.1-7 6.5-7.6 8.9-8.4 12.2-8.6 13.9-13 24-1.2 3-0.4 2 0.2 1.7 1 2.8 15 31.8 8.4 16.6 7 12 6.6 9 5.4 5.5 2.6 2 2.7 1.6 2.7 0.9 2.6 0.3 3-0.2 3-1 3-1.5 3-2.1 3.4-2.9 3.6-3.5 7.5-9.4 7.9-12.2 8.5-14.9 16.1-31.5 1.4-3.5 0.3-1.5-0.3-2.4-1-2.5-12.9-25.8-9.5-16.8-8-12.1-6.6-8-3-2.9-3.1-2.5-3.3-2-2.6-1.1-3-0.6zM14.8 71.2l-5 0.4-1.9 0.6-0.6 1.6 0.4 2 15.4 29 18.1 37.7 1 1.7 1 0.5 1-0.9 1-1.7 11.8-23.3 9.5-17.6 6.4-11 8.8-14 1.1-2.4 0-1.5-0.6-0.6-1-0.5-4.4-0.3-33.6 0zM173.2 178.7l-1.4 2.5-14.8 30.6-8.6 17-6.8 12.4-8.9 15-0.9 3 0.3 1 0.7 0.5 2.4 0.5 6.6 0.2 53-0.1 13.4-0.6 2.3-0.5 1.1-1 0.1-1.4-0.9-3-12.8-25.6-21.8-47.8-1.5-2.7-0.5-0.3zM304.8 178.4l-1 1.1-1 1.9-14.7 30.4-9.1 18-6 11-9.2 15.4-0.9 3 0.3 1 0.7 0.6 2.6 0.4 6.7 0.2 52.7-0.2 13.9-0.5 2-0.5 0.9-1 0-2-0.9-2.6-12.2-24.4-22.4-49-1.4-2.6zM435.8 178.5l-2 3.1-14.9 30.6-8.8 17.6-6.6 12-8.8 14.8-0.7 2.6 0.2 0.9 0.8 0.7 2.6 0.4 6.6 0.2 52.8-0.2 13.8-0.5 2-0.5 1-1-0-2-1-2.8-12.9-25.6-21.1-46.8-1.6-2.9-1-0.8zM566.8 178.5l-2 3.3-14.8 30.4-8.6 17-5.9 11-9.7 16.6-0.7 2.4 0.3 1 0.7 0.6 2.7 0.5 7 0.1 52.3-0.2 13.7-0.5 2-0.5 1.1-1 0-2-1.1-3-12.3-24.4-21.7-48-1.6-2.8-1-0.7zM697.8 178.6l-2 3.4-14.2 29.2-9.1 18-6.5 12-8.9 15-0.9 3 0.3 1 0.7 0.6 2.6 0.4 7 0.2 52.4-0.2 13.6-0.5 2.1-0.5 1.1-1 0.1-1.4-0.9-2.7-13.3-26.9-21.1-46.6-1.6-2.7-1-0.6zM42.2 178.6l-2 3.4-14.1 29.3-9.1 17.9-6.5 12-8.9 15-0.9 3 0.3 1 0.7 0.6 2.5 0.4 7 0.2 52.5-0.2 13.5-0.5 2.2-0.5 1.1-1 0.1-1.4-0.8-2.7-13.4-26.9-21.2-46.6-1.4-2.7-1-0.6z"/>
<path fill="#34ff2d" d="M21.9 37.2l21.3-0.2 38.6 0.2 11 0.4 21.4 1.8 23-1.6 13-0.5 56-0.2 16.6 0.5 22.4 1.8 35.6-2.1 53.4-0.2 18.6 0.4 19 1.7 5 0.2 34.4-2.1 51.6-0.3 21 0.5 24 1.9 34.4-2.1 50.6-0.3 21.4 0.5 24.6 1.9 34.4-2.1 49-0.3 23 0.5 24.6 1.9 28.4-1.8 23.6-0.5 0.2 16.7-0.2 16.2-25.6 0.7-2.4 0.7-0.7 0.8-0.1 1 1.3 3.6 12.7 23.4 14.8 30.1 0.2 14.5-0.2 15.4-1-3-4-8.2-12-23.3-8-13.8-7-10.5-6.6-8-5.7-5.2-2.3-1.5-2.9-1.5-3.1-0.8-2.4-0.1-3.6 0.4-2.8 1.1-3.2 1.6-3.4 2.3-7 6.3-7.6 8.7-8.4 11.9-9 14.6-13.6 24.9-1.4 3.3-0.5 2.4 0.4 2.4 1.1 2.8 15 31.9 8.4 16.6 7.6 12.8 6 8.2 5.6 5.7 2.8 2.2 2.7 1.4 2.9 0.8 2.4 0.3 2.6-0.3 3-0.9 3-1.6 3.4-2.4 3.6-3.1 3.4-3.6 7-8.8 7.6-11.4 8.4-14.9 14.6-28.3 3-6.2 1-3 0.2 15.4-0.2 14.1-17.8 35.8-7 13.1-9.2 15.2-1.5 3.8 0.2 1 0.7 0.7 3 0.6 31.6 0.2 0.2 16.5-0.2 16.5-35.6-0.3-28-2.2-31 2-28.4 0.4-42.6-0.2-29-2.2-30.4 2-27.6 0.4-44-0.2-9-0.5-14.4-1.4-5.6-0.3-28.4 1.9-27.1 0.5-45.9-0.2-9.6-0.4-20-1.8-28.4 1.9-24.6 0.5-48.4-0.2-9.6-0.4-15-1.5-5.4-0.3-26.6 1.8-21.4 0.6-52.6-0.1-10-0.5-15-1.5-5.4-0.3-24.6 1.7-14.4 0.6-39 0.2-24.6-0.3-0.2-16.2 0.2-17.5 2.6 0.7 5.9 0.2 57.1-0.1 13-0.7 2-0.7 0.7-1.5-0.3-1.7-1-2.5-12.7-25.2-22.3-48.9-1.4-2.7-1-0.5-1 0.9-1 1.7-15.8 32.5-9.4 18.4-6.1 11-9.3 15.6-0.2-16 0.2-15.1 8.6-12.9 8.4-15 16-31.5 1.6-3.4 0.4-2.1-0.3-2.6-1.1-2.8-15-29.6-10-17.2-4.6-6.7-4-5.3-0.2-15.4 0.2-43.9zM111.8 84.2l-3 0.3-3 0.9-3 1.4-3.9 2.4-7.1 6.3-8 9.2-8.6 11.9-9 14.6-13.4 24.9-1.6 3.3-0.4 2.4 0.4 2.4 1 2.8 14 29.9 8.6 16.8 7.4 13 6 8.6 6 6.4 2.6 2.1 3 1.7 2.4 0.9 3 0.5 3-0.3 3-0.9 3-1.6 3.5-2.3 3.5-3.2 3.6-3.6 7-8.8 7.4-11.4 9.6-16.7 15.4-30.6 1.6-3.3 0.5-2.4-0.2-2-0.9-2.6-12.4-24.9-9.6-17.1-7.9-12.5-6.5-8.2-6-5.7-3-2.1-3-1.5-2.6-0.7zM149.7 70.2l-7.5 0.3-3 0.5-1 0.4-0.6 0.8 0.2 2.2 1.4 3.4 7.9 14 7 13.4 18.1 37.8 1 1.7 1 0.6 1-0.7 1-1.6 12.3-24.2 9.5-17.6 6.5-11 9.2-14.4 1.2-2.6 0.1-1.4-0.8-1-1-0.4-4-0.3zM242.8 84.2l-3 0.3-3 0.9-3.6 1.7-3.2 2.1-7.2 6.4-7.6 8.6-9 12.5-9.4 15.5-13 24.1-1.6 3.4-0.3 2.1 0.3 2.4 1 2.6 14.6 30.9 9 17.6 7 12 6 8.5 5.6 6 2.5 2 2.9 1.6 2.4 1 3 0.4 3-0.2 3-0.9 3-1.5 3.6-2.4 6.4-6.1 7.6-9.4 8.4-13 8.6-15 15.4-30.6 1.6-3.2 0.6-2.7-0.2-2.1-1-2.7-12-24-9-16.3-8.4-13.4-6.6-8.3-3-3.2-3.4-3-3-2.1-3-1.5-2.6-0.7zM280.8 70.2l-8 0.4-3 0.6-1.1 1 0.3 2.6 1.2 2.8 8.2 14.6 6.5 12.6 18.3 38.1 1.6 2.2 1 0.1 1.4-2 11.9-23.4 9.4-17.6 7.1-12 9.2-14.4 1.2-2.6 0.1-1.4-0.3-0.7-1-0.6-4.6-0.4zM373.8 84.2l-3 0.4-3 0.9-3.6 1.7-3.1 2-7.3 6.5-7.6 8.6-8.4 11.8-9 14.6-13.6 24.8-1.7 3.7-0.5 2.6 0.2 2.1 1 2.7 14.6 30.9 8.4 16.7 7.6 13 6 8.4 5.7 6.2 2.5 2 2.8 1.6 2.4 0.9 3 0.5 3-0.2 3-0.9 3.1-1.5 3.5-2.3 3.4-3.1 3.6-3.6 7.4-9.4 7.6-11.5 9.4-16.8 15.6-30.6 1.3-3.1 0.4-2-0.3-2.4-1-2.6-11.4-23-10-18.1-8-12.5-6.6-8.4-3.4-3.6-2.9-2.4-2.9-2-2.8-1.4-2.4-0.8zM411.7 70.2l-7.5 0.4-3 0.4-1 0.6-0.4 0.6-0.1 1 0.4 1.6 15.9 30 18.8 38.8 1 1.5 1 0.2 1.4-1.9 12.2-24.2 9.5-17.4 7.1-12 9.2-14.6 0.9-2 0.1-1.4-0.4-0.7-1-0.6-4-0.4-35-0.1zM504.8 84.2l-3.1 0.4-2.9 0.9-3.5 1.7-3.1 2-3.7 3-3.7 3.6-7.6 8.7-8.4 11.8-9.6 15.4-13 24-1.4 3.2-0.7 2.9 0.1 1.7 1 2.8 14 29.9 8.6 16.9 7.4 13.1 6 8.7 6 6.5 2.9 2.4 2.7 1.5 2.4 1 3 0.5 3-0.2 3-0.8 3-1.5 3.1-2.1 3.5-2.8 3.4-3.5 7.6-9.3 8.4-13 9-15.9 15.6-30.6 1.4-3.3 0.4-2-0.3-2.6-1.1-2.6-12.4-24.9-9.6-17-8-12.4-6.4-8.1-6-5.6-2.7-1.8-3.1-1.6-2.8-0.7zM543.2 70.2l-8 0.4-3 0.5-1 0.6-0.3 0.5-0.1 1 0.4 1.6 16.2 30.4 18.4 38.2 1 1.6 1 0.3 1-0.9 1-1.8 11.7-23.4 9.5-17.4 6.5-11 9.7-15.4 1-2.2 0.1-1.4-0.5-0.8-1-0.5-4-0.4zM635.8 84.2l-3.6 0.5-2.9 1.1-3.1 1.5-3.4 2.4-3.8 3.1-3.8 3.6-7.4 8.8-8.6 12-9.4 15.6-12.6 23.1-1.4 3.2-0.6 2.7 0.2 2 1.4 3.5 14.4 30.8 9 17.6 7 11.9 6 8.4 3 3.4 3 2.8 2.8 2 2.8 1.5 2.4 0.8 2.6 0.4 2.4-0.2 3.2-0.9 3.1-1.6 3.6-2.4 6.7-6.4 7-8.7 8.4-12.9 8.6-15 16-31.5 1.4-3.4 0.5-2.1-0.3-2.6-1.2-2.8-12-23.9-9-16.3-8.4-13.3-6.6-8.3-6.1-5.8-2.9-2-3-1.5-2.4-0.8zM674.2 70.2l-8 0.4-3 0.5-1.2 1.1 0.3 2.6 16.2 30.4 18.3 38.1 1 1.6 1 0.4 1-0.8 1-1.7 12.1-24 9.2-17 6.5-11 9.6-15.3 1.1-2.3 0.1-1.4-0.6-0.9-1-0.5-4-0.3zM18.8 70.2l-8 0.4-3 0.5-1.3 1.1 0.3 2.6 16.2 30.4 18.2 38.1 1 1.6 1 0.4 1-0.8 1-1.7 12.2-24 9.2-17 6.5-11 9.7-15.3 1-2.3 0.1-1.4-0.7-0.9-1-0.5-4-0.3zM173.8 177.7l-1 1-1 1.8-15.2 31.2-9.1 18.1-6.9 12.4-8.8 14.8-1 2.8 0.2 1 0.8 0.7 2.4 0.6 5.6 0.1 52-0 17-0.7 2.4-0.5 1.1-0.8 0.2-2-1.3-3.4-12.6-25-22.4-49.1-1.4-2.6zM305.2 177.7l-1 0.5-1.5 2.5-15.7 32.5-9.5 18.6-5.5 10-9.2 15.4-0.9 2.6 0.2 1 0.7 0.7 2.4 0.6 5.7 0.1 51.3-0 17.6-0.6 2.4-0.5 1.2-0.9 0.3-1.4-0.9-3.1-13.4-26.5-22.2-48.7-1-1.9zM436.2 177.7l-1 0.6-1 1.6-16.1 33.3-9.2 18-6.4 11.6-8.7 14.4-0.6 1.6-0.2 1.4 0.6 1 0.6 0.5 3 0.4 7 0.2 51-0.1 15.6-0.6 2.4-0.5 1.3-0.9 0.2-2-0.9-2.8-13.3-26.2-22.3-49-1-1.7zM567.2 177.7l-1 0.7-1 1.7-16.3 33.7-8.9 17.4-6.4 11.6-8.4 14-1.1 3 0.2 1 0.9 0.8 3 0.5 7 0.2 53-0.2 14.6-0.6 2-0.5 1-1.1-0-1.7-1-3-7.3-14-6.1-12.5-22.2-48.7-1-1.7zM698.2 177.7l-1 0.9-1 1.7-15.7 32.5-9.4 18.4-6.1 11-8.8 14.6-1 3 0.2 1 0.8 0.8 2.6 0.5 6.4 0.2 52-0.1 16-0.7 2.6-0.5 1-0.8 0.1-2-1.1-3.2-12.8-25.2-22.2-48.9-1.6-2.7z"/>
<path fill="#7dff0b" d="M18.8 38.2l24.4-0.2 38.6 0.1 11.4 0.5 21 1.8 22.6-1.6 14-0.6 55.4-0.2 16.6 0.5 18 1.7 5 0.2 21.4-1.6 13.1-0.5 53.9-0.3 19 0.5 18.6 1.7 5 0.2 21.4-1.5 12.6-0.6 52.4-0.3 21 0.5 23.6 1.9 21.4-1.5 12.6-0.6 51-0.3 22 0.4 24 2 34-2.1 50-0.3 23 0.4 24 2 28-1.9 24-0.5 0.2 15.8-0.2 15.3-26 0.7-2.1 0.3-0.9 0.6-0.5 0.5-0.2 1 0.2 1.6 0.9 2.2 13.7 24.8 14.9 30.3 0.2 13.7-0.2 14.1-7-14.7-10-19.3-7.6-13-7-10.7-6.4-8.1-6-5.6-3-1.9-2.9-1.4-2.7-0.7-2.4-0.1-3 0.4-3.1 1-3 1.4-3.7 2.6-7.2 6.4-7.6 8.7-8.4 11.9-9.6 15.5-13.4 25.1-1.5 3.4-0.3 2 0.2 2.2 1 2.7 15 32 9 17.7 7 11.9 6 8.5 5.7 6 2.6 2 2.7 1.6 2.6 0.9 3 0.4 2.4-0.1 3-0.9 3.1-1.5 3.7-2.4 6.8-6.4 7-8.7 7-10.5 8.4-14.7 10.6-20.1 9-18.6 0.2 14-0.2 13.3-17.9 36.1-8 14.6-9.2 15-1 2-0.5 2 0.3 1 0.7 0.6 3 0.6 32.6 0.2 0.2 15.6-0.2 15.5-36-0.3-27.6-2.2-30 2-29.4 0.5-43-0.2-9-0.5-14-1.5-5.6-0.3-30 2-28 0.5-44.4-0.2-9.6-0.6-14-1.4-5-0.3-29.4 2-26.6 0.5-46.4-0.2-9.6-0.6-19-1.7-29 2-24 0.5-49-0.2-9.4-0.5-14.6-1.5-5.4-0.3-26 1.9-21.6 0.5-53.4-0.1-10-0.5-14.6-1.5-5.4-0.3-23.6 1.7-14.4 0.6-38.6 0.2-26-0.2-0.2-15.3 0.2-16.2 3.6 0.5 11.4 0.1 52.6-0.2 12-0.8 2-0.8 0.6-1.2-0.2-1.6-1-2.6-7.7-14.8-6.1-12.4-22.2-48.7-1.4-2.6-1-0.4-1 0.8-1 1.7-15.9 32.6-9.5 18.6-7 12.4-8.2 13.3-0.2-14.7 0.2-14.3 8.6-12.9 9-15.9 16-31.7 1.3-3.2 0.4-2-0.3-2.6-1.4-3.6-15-29.6-10-17.2-4-6-4.6-6.1-0.2-14.5 0.2-43zM21.8 69.2l-11 0.4-3.6 0.5-1 0.5-0.5 0.6-0.2 1 0.2 1.6 1.5 3.3 8.3 14.7 7.1 13.4 18.6 38.8 1 1.5 1 0.5 1-0.8 1-1.7 11.8-23.3 10-18.4 7.5-12.6 9.4-14.4 1-2.6 0-1.4-0.7-0.8-1-0.4-4-0.4zM108.8 83.7l-3.6 1-3 1.5-6.2 4.6-7.2 7.1-7.6 9.3-8.4 12.5-9 15.1-11.6 21.6-1.4 3.4-0.3 2 0.3 2.2 1 2.7 15 32 9 17.7 7 11.9 6 8.5 5.6 6 2.6 2 2.8 1.6 2.4 0.9 3 0.4 3-0.2 3-1 3.4-1.7 3.2-2.3 3.4-3 3.6-3.7 7.4-9.5 9-14.1 9-16.2 15-29.8 1.1-2.4 0.4-2.6-0.5-2.3-1.4-3.5-14.6-28.6-9.4-16.6-7.6-11-6.4-7.7-3-2.8-3.6-2.6-2.5-1.3-2.9-1.1-3-0.3zM152.8 69.2l-10 0.4-4 0.4-1 0.3-1 0.9-0.1 2 1.5 3.7 7.9 13.9 7.8 15 18.3 38 1 1.6 1 0.6 1-0.7 1-1.6 13.2-26 9.6-17.5 6.6-11 9.6-14.9 0.8-2.1-0-1.4-0.8-0.9-1-0.4-4-0.3zM239.8 83.7l-2.6 0.7-3 1.4-3.3 2-3.7 2.8-7 6.9-7.4 9.2-8 11.6-9 14.9-12.6 23.4-1.3 3.2-0.3 2 0.2 2 1 2.7 15 32 8.5 16.8 7.5 12.9 6 8.4 5.7 6.2 2.7 2.1 2.6 1.4 2.4 1 3 0.4 2.6-0.1 3-0.8 3.1-1.6 3.7-2.4 6.7-6.3 7.5-9.4 8.4-13 9-16 15.6-30.6 1.4-3.4 0.6-2.3-0.4-2.6-1.2-3-13.4-26.8-10-17.7-8-12-7-8.3-3.5-3.2-2.8-2-2.7-1.5-3-1-3-0.3zM283.8 69.2l-10.6 0.4-3.4 0.4-1 0.4-0.9 0.8-0.1 2 1.4 3.6 8.3 14.4 7.5 14.6 18.2 37.8 1.6 2.2 1 0.1 1.4-2 12.3-24.1 9.4-17.6 7.1-12 10.1-15.4 1.1-2.6-0.1-1.4-0.9-1-1-0.3-4-0.3zM370.8 83.7l-3 0.9-3 1.5-6.6 4.6-7 6.9-7.4 9.2-8.6 12.4-9 15.1-12 22.5-1 2.4-0.5 2.6 0.2 2 0.9 2.4 15 32.1 9 17.7 7.4 12.8 6.6 8.9 5.4 5.5 2.8 2 2.8 1.5 2.4 0.8 2.6 0.2 3-0.3 3-1 3-1.6 3.4-2.5 3.6-3.1 3.4-3.7 7.6-9.6 8-12.5 9.4-17 15-29.8 1.2-2.8 0.4-2.6-0.4-2.4-1.2-2.8-14-27.7-9-15.9-8.4-12.8-7-8.3-3-2.7-3.2-2.4-2.8-1.5-3-1-3-0.3zM415.2 69.2l-10.4 0.4-4 0.4-1 0.4-0.8 0.8-0.1 2 1.4 3.6 8.3 14.4 7.8 15 17.8 37.2 1.6 2.3 1 0.2 1-1 1-1.8 11.2-22.3 10-18.6 7.4-12.4 9.8-15 1.1-2.6-0.1-1.4-0.4-0.7-1-0.5-4.6-0.4zM501.8 83.7l-3 1-3 1.4-6.5 4.7-7.1 6.9-7 8.6-8 11.5-9 14.9-12.4 23.3-1.5 3.2-0.6 2.6 0.4 2.4 1.1 2.9 14.6 31 9 17.7 7 12.1 6 8.5 6 6.4 2.5 2 2.9 1.6 2.6 0.9 3 0.4 2.4-0.2 3-0.9 3-1.4 3.6-2.4 3.4-3 3.6-3.7 7.4-9.4 9-14 9-16.1 15-29.8 1.5-3.6 0.2-2-0.6-3-1.5-3.4-14.6-28.6-9.4-16.4-7.6-11-6.4-7.6-3-2.7-3.1-2.3-2.9-1.5-3-1-3-0.3zM546.2 69.2l-11 0.4-3.4 0.5-1 0.4-0.7 0.7-0.1 2 1.7 4 8.2 14.6 7.6 14.4 18.3 38 1 1.4 1 0.4 1-1 1-1.7 12.1-24.1 10.1-18.4 6.5-11 9.8-15 1.1-2.6-0.1-1.4-0.5-0.8-1-0.4-4.6-0.4zM632.8 83.7l-3 1-3.2 1.5-3.1 2-3.7 3-7 7.1-7.6 9.4-7.4 11-9 15.1-12 22.4-1.6 3.4-0.3 2.2 0.3 2.4 1 2.7 14 29.9 9 17.9 7.6 13 6 8.6 6 6.4 2.6 2.1 2.8 1.6 2.6 0.9 3 0.4 3-0.3 3-0.9 3.2-1.7 3.2-2.3 3.6-3.1 3.4-3.7 7.6-9.6 8-12.4 9.4-16.9 15-29.8 1.6-3.6 0.2-2.2-0.2-2-1.6-3.6-14-27.7-9.4-16.7-8-11.9-6.6-7.7-3-2.8-3.4-2.6-3-1.6-3-0.9-3-0.3zM677.2 69.2l-11 0.4-3.4 0.5-1 0.5-0.6 0.6-0.2 1 0.2 1.6 1.6 3.3 8.2 14.7 7.1 13.5 18.7 38.7 1 1.5 1 0.5 1-0.8 1-1.7 11.7-23.3 10-18.4 7.5-12.6 9.4-14.4 1-2.6-0-1.4-0.6-0.8-1-0.4-4-0.4zM173.8 177.1l-1 0.9-1 1.8-15.8 32.4-9.5 18.6-7 12.4-8.8 14.6-1 3 0.3 1 0.8 0.6 3 0.6 7 0.2 53-0.1 16-0.7 2.4-0.6 1-0.9 0.2-2.1-1.1-3-7.7-14.6-5.6-11.5-22.8-49.8-1.4-2.5zM304.8 177.1l-1 1.1-1 1.8-15.7 32.2-9.2 18-7 12.6-9.1 15-1 3 0.3 1 0.7 0.5 2.4 0.7 7 0.2 54-0.1 16-0.8 2.3-0.5 0.9-1 0.1-2-1.3-3.3-7.2-13.7-5.9-12-22.9-50.1-1.4-2.4zM435.8 177.2l-2.1 3-15.2 31.6-9.5 18.4-7 12.6-9.1 15-0.9 3 0.2 1 0.6 0.5 2.4 0.6 6.6 0.3 54-0.1 16.4-0.7 2.4-0.6 0.9-1 0.2-1.6-1-3-7.6-14.4-6.2-12.6-22.1-48.7-1.6-2.7-0.4-0.6zM566.8 177.2l-2 3.2-15.2 31.4-9.5 18.4-6.7 12-9.6 16-0.7 2.6 0.2 1 0.9 0.7 3 0.5 8.6 0.2 53-0.2 14.4-0.6 2.5-0.6 0.9-1 0.1-2-0.9-2.6-7.9-15-5.9-12-22.2-48.9-1.6-2.7-0.4-0.4zM698.2 177.1l-1 0.8-1 1.7-15.8 32.6-9.5 18.6-6.4 11.4-9.4 15.6-1 3 0.3 1 0.8 0.6 3 0.6 7.6 0.2 53.4-0.2 15-0.6 2.6-0.6 0.9-1 0.1-2-1-2.8-7.8-14.8-6.1-12.4-22.1-48.7-1.6-2.6z"/>
<path fill="#c0ff00" d="M18.4 39.2l24.8-0.3 39 0.2 11.6 0.5 15.7 1.6 5.3 0.3 21.4-1.7 14-0.6 56.6-0.2 16.4 0.5 17.4 1.7 5.2 0.3 21-1.6 13-0.6 54.4-0.3 19.6 0.5 18 1.8 5 0.2 21-1.6 12.4-0.6 53-0.3 21 0.4 23.6 2.1 21-1.6 12.4-0.6 51.6-0.3 22.4 0.4 23.6 2.1 21.4-1.6 12-0.6 50.6-0.3 23.4 0.4 23.6 2.1 27.4-2 24.6-0.5 0.2 14.8-0.2 14.3-26.6 0.7-3 0.7-0.8 0.7-0.3 1 0.1 1.6 1 2.5 13.7 24.5 15.9 32.1 0.2 12.9-0.2 13.1-8.6-17.5-9.4-18.1-7-12.1-7-10.6-6.6-7.9-5.9-5.5-3.1-1.9-2.4-1.1-2.6-0.6-2.4-0.2-3 0.4-3 1-3 1.5-3.7 2.5-7.3 6.5-8 9.4-8.6 12.1-10 16.5-13 24.3-1.1 2.6-0.5 2.6 0.2 2 1 2.6 15 32.1 9 17.8 7.4 12.9 6.6 9.1 5.4 5.7 3 2.2 2.6 1.3 2.4 0.9 2.6 0.3 2.4-0.2 3-0.9 3-1.4 3.6-2.4 6.4-6 7-8.6 7-10.4 8.6-14.5 9.4-18.1 10.6-21.4 0.2 13-0.2 12.6-18.3 36.8-8.1 14.6-9.6 15.5-1.3 2.5-0.4 2 0.4 1 0.7 0.5 3.6 0.7 33 0.2 0.2 14.6-0.2 14.5-36.6-0.3-27-2.3-29.4 2.1-29.6 0.5-44-0.2-9-0.6-14-1.5-5-0.3-29 2.1-28.4 0.5-45.6-0.2-9.4-0.6-13.6-1.5-5-0.3-29 2.1-26.4 0.5-47-0.2-9.6-0.6-14.4-1.6-5-0.2-26.6 2-25.4 0.6-50-0.2-9.6-0.5-14.4-1.6-5-0.3-25.6 1.9-22 0.7-54-0.2-10-0.5-14.4-1.6-5-0.3-23 1.8-14.6 0.6-38.4 0.2-26.6-0.2-0.2-14.3 0.2-15 6.6 0.3 19.4 0.1 44.6-0.4 10-0.7 1.9-0.9 0.6-1.4-0.1-1.6-1-2.4-7.7-14.5-6-12.1-23.3-50.9-1.4-2.5-1-0.4-1 0.8-1 1.6-16.3 33.4-9.5 18.6-7.1 12.4-7.7 12.3-0.2-13.7 0.2-13.4 8-12.2 8.6-14.9 16.4-32.4 2-4.4 0.6-2.3-0.1-2.4-1.5-4-14.4-28.7-10.6-18.4-4.4-6.8-4.6-6.1-0.2-13.6 0.2-42zM22.2 68.2l-11.4 0.4-4 0.5-1 0.3-1 0.8-0.3 1 0.1 1.6 1.6 3.6 8.3 14.4 7.4 14 19.3 40 1 1.5 1 0.4 1-0.8 1-1.6 11.7-23.1 8.6-16 8.5-14.4 10.8-16.3 1.1-2.3 0.3-2-0.4-0.9-1-0.6-4.6-0.5zM108.7 82.7l-2.9 0.9-3 1.4-6.6 4.6-7 6.9-7.4 9.2-8 11.6-9.6 15.8-12.4 23.5-1.2 2.6-0.5 2.6 0.2 2 0.9 2.6 15 32.1 9 17.8 7.6 12.9 6.4 9.1 5.6 5.7 3 2.2 2.4 1.3 2.6 0.9 2.4 0.3 3-0.3 3-1 3.3-1.6 3.3-2.4 3.4-3.1 3.6-3.6 7.4-9.6 8-12.3 10-18 15-29.8 1.5-3.8 0.3-2-0.3-2-1.5-3.6-14-27.8-10-17.6-8-11.9-6.4-7.7-3.1-2.8-3.5-2.6-3-1.6-2.7-0.8-2.7-0.4zM153.8 68.2l-11.6 0.4-4.4 0.5-1 0.4-0.9 0.7-0.3 1 0.1 1.5 1.6 3.5 8.3 14.6 7.4 14 19.2 39.8 1 1.5 1 0.6 1-0.7 1-1.5 11.8-23.3 9.4-17.4 8.1-13.6 10.2-15.4 1.3-2.6 0.3-2-0.5-1-0.9-0.4-4.1-0.6zM239.8 82.7l-3 1-3 1.4-6.6 4.6-7 6.9-7.4 9.2-8.6 12.4-9.4 16-12 22.6-1.1 2.4-0.5 2.6 0.4 2.4 1.2 3.1 14 30 9 17.9 7.4 13.1 6 8.6 6 6.5 3 2.4 2.6 1.5 2.6 0.9 2.8 0.5 3-0.3 3-0.9 3.4-1.7 3.2-2.3 3.4-3.1 3.6-3.6 7.4-9.5 9-14.1 9-16.2 15-29.8 1.6-3.6 0.3-2.4-0.3-2.1-1.6-3.7-14-27.8-9.4-16.8-8-12-7-8.3-3-2.8-3.4-2.5-2.8-1.4-3-1-2.8-0.4zM284.8 68.2l-15.6 0.8-1.4 0.5-0.8 0.7-0.3 2.1 1.5 3.7 8.8 15.2 7.6 14.6 18.6 38.6 1.6 2.1 1 0.1 2-2.9 10.8-21.5 9.4-17.4 8.6-14.6 10.2-15.4 1.3-2.6 0.3-2-0.5-1-0.9-0.4-4.2-0.6zM371.2 82.7l-2.4 0.6-3.3 1.5-3.3 2-3.4 2.6-7 6.8-7.6 9.1-8.4 12.3-9.6 15.9-12 22.5-1.4 3.4-0.5 2.4 0.4 2.4 1.1 2.9 14 30 9 17.9 7.4 13.1 6 8.7 6 6.5 3 2.4 2.6 1.5 2.7 1 2.7 0.5 3-0.3 3.6-1.1 3-1.6 3.4-2.5 3.6-3.2 3.4-3.7 7.6-9.6 8-12.4 10-18 15-29.9 1-2.6 0.4-2.6-0.4-2.5-1.5-3.5-14.1-27.8-9.4-16.7-8.1-12-6.5-7.8-3.3-3.1-3.1-2.4-3-1.6-3-1-2.6-0.4zM415.8 68.2l-12 0.5-4 0.5-1.7 1-0.3 1 0.1 1.6 1.8 4 7.8 13.4 8 15 18.7 39 1.6 2.2 1 0.2 1-1 1-1.7 11.1-22.1 8.6-16 8.5-14.6 11.2-17 1.2-2.4 0.1-1.6-0.5-1-0.9-0.4-4.3-0.6zM502.2 82.7l-3.4 1-3 1.5-6.4 4.6-7.2 7-7.5 9.3-7.9 11.7-9.6 15.9-12 22.5-1.4 3.5-0.4 2.1 0.4 2.4 1 2.7 14.4 31 9.1 17.9 7.5 13 6 8.5 6 6.4 2.6 2.1 2.9 1.6 2.4 0.9 3.1 0.4 3-0.3 3-1 3-1.7 3.4-2.4 3.6-3.2 3.4-3.6 7.6-9.7 7.4-11.5 9.6-17 15.4-30.7 1.6-3.4 0.5-2.4-0.3-2.6-1.2-3.1-13.6-27-9.4-16.9-8.6-13-6.4-7.9-3.2-3.1-3.4-2.5-3-1.8-3-1-3-0.5zM546.8 68.2l-11 0.4-4.6 0.5-1.4 0.6-0.6 0.5-0.3 1 0.1 1.6 1.8 3.8 8.1 14.2 7.7 14.4 19.2 39.7 1 1.4 1 0.3 1-0.8 1-1.7 11.2-22.3 9.5-17.6 8.6-14.4 10.1-15.4 1.1-2.2 0.3-2-0.5-1-0.9-0.4-4.4-0.6zM633.2 82.7l-3.4 1.1-3 1.4-6.3 4.6-7.3 7.1-7.4 9.3-8.5 12.5-9.5 16-11.6 21.7-1.4 3.4-0.3 2 0.3 2 1 2.8 15 32.1 8.4 16.9 7.6 13 6 8.6 6 6.4 2.7 2.2 2.7 1.6 2.6 0.9 3 0.4 2.4-0.2 3-0.9 3-1.5 3.6-2.4 3.4-3 3.6-3.6 7.4-9.4 8.6-13.1 9-16.1 16-31.7 1-2.6 0.6-2.4-0.3-2.6-1.3-3.4-12.6-25-10-18-8.4-13-7-8.6-3.1-3-3.5-2.6-3-1.7-3-1.1-3-0.4zM677.8 68.2l-11.6 0.4-4 0.5-1 0.3-0.9 0.8-0.3 1 0.1 1.6 1.7 3.6 8.2 14.4 7.4 14 19.4 40 1 1.5 1 0.4 1-0.8 1-1.6 11.6-23.1 8.6-16 8.5-14.4 10.7-16.3 1.2-2.3 0.3-2-0.5-0.9-1-0.6-4.4-0.5zM173.3 176.7l-2.1 3.3-15.1 31.2-9.2 18-7.9 14-9.3 15-0.9 2-0.2 1.6 0.4 1 0.8 0.5 3 0.7 7.4 0.2 53.6-0.1 16.4-0.7 2.6-0.5 1.4-1.1 0.2-2-1.1-3-8.2-15.6-6.2-12.4-22.7-49.7-1.4-2.4-0.6-0.3zM304.8 176.4l-1 1.1-1 1.7-15.8 32.6-9.5 18.4-7.1 12.6-9.6 15.5-0.9 1.9-0.2 1.6 0.4 1 0.7 0.5 3 0.7 7 0.2 54-0.1 17-0.8 2.3-0.5 1.2-1 0.2-2-1.3-3.4-7.8-14.6-5.9-12-23.3-50.9-1.4-2.3zM435.8 176.5l-2 2.9-15.7 32.4-9.5 18.4-7.1 12.5-9.7 15.8-0.8 1.7-0.2 1.6 0.4 1 0.6 0.4 3 0.7 7 0.3 53.4-0.1 17.6-0.8 2.4-0.5 1.2-1 0.2-2-1.3-3.6-7.8-14.4-5.9-12-23.4-51.1-1.4-2.1zM566.8 176.6l-2 3-15.4 31.6-9.5 18.6-7 12.4-10.2 16.6-0.8 3 0.3 0.9 0.7 0.5 2.9 0.7 7 0.3 54-0.1 17-0.8 2.4-0.5 1.3-1 0.2-2-0.9-2.8-8.2-15.2-6.2-12.6-22.6-49.7-1.6-2.6-0.4-0.4zM697.8 176.6l-2 3.2-15.3 31.4-9.5 18.6-7 12.4-10.2 16.6-0.6 1.4-0.2 1.6 0.4 1 0.8 0.6 3 0.6 8 0.2 53.6-0.2 16-0.7 2.5-0.5 1.3-1 0.2-2-1.1-3-7.7-14.6-6-12-23.2-50.9-1.6-2.5-0.4-0.4z"/>
<path fill="#fafa00" d="M20.7 40.2l22.5-0.2 39.6 0.2 11.4 0.5 15.6 1.7 5 0.2 21-1.7 13-0.6 25.4-0.3 33 0.1 16.6 0.5 17 1.8 5 0.2 21-1.7 12.4-0.6 26-0.3 29.6-0 19.4 0.6 17.6 1.8 5 0.2 21-1.7 12.4-0.6 53.6-0.3 21 0.5 23 2.1 21-1.6 12.4-0.6 52-0.4 22 0.5 23.6 2.1 21-1.6 12-0.6 51.4-0.4 23 0.5 19 1.9 5 0.2 26.6-2 25-0.5 0 26.9-16.6 0.3-11 0.5-2 0.3-1.3 0.7-0.8 1-0.1 1 0.2 1.4 1.1 2.6 8.2 14 6 11 16.3 33 0.2 12-0.2 12.1-9-18.4-8.6-16.2-7.4-13-7-10.6-6.6-8-5.9-5.5-3.1-1.9-2.4-1.1-2.6-0.6-2.4-0.2-3 0.5-3 1-3 1.5-3.6 2.4-7.4 6.6-8 9.4-9 12.9-10 16.6-12.6 23.4-1.4 3.4-0.5 2.7 0.3 2.4 1.2 3.1 14 30.1 9.4 18.9 7.6 13.1 6 8.6 6 6.5 2.8 2.3 2.6 1.5 2.6 1 3 0.4 2.4-0.2 3-0.9 3-1.4 3.6-2.4 6.4-6.1 7.6-9.3 7.4-11.3 8-13.9 9-17.2 10.6-21.3 0.2 12.1-0.2 11.7-11.4 23.3-7.9 15.4-8.5 15-9.6 15-1.2 2.6-0.3 1.4 0.1 1 1 1 3.2 0.8 34.6 0.3-0 27-37-0.4-8-0.5-14-1.6-4.6-0.3-28 2.2-31 0.6-44-0.3-9.4-0.6-14-1.6-4.6-0.3-27.4 2.2-29.6 0.6-46-0.3-9.4-0.6-14-1.6-5-0.3-26.6 2.2-27 0.5-48.4-0.2-10-0.6-14.4-1.6-4.6-0.3-26 2.1-25 0.6-51-0.2-10-0.6-14.5-1.6-4.5-0.3-25 2.1-21.6 0.6-55-0.2-10.4-0.5-14.6-1.7-4.4-0.3-22.6 1.9-14.4 0.6-38 0.3-27.6-0.3-0-27 35.6 0.3 35.4-0.4 10.6-0.8 1.7-0.9 0.8-1.4-0-1.6-1.1-2.7-8.2-15.3-6-12-23.8-51.7-1.4-2.4-1-0.4-1 0.7-1.6 2.6-15.6 32.2-10.1 19.6-7.1 12.4-7.2 11.2-0.2-12.6 0.2-12.5 8.6-13 9-16 16.4-32.7 1.6-3.5 0.4-2.3-0.2-2.6-1.2-3.2-8-16.3-7.6-14.5-10-17.4-5-7.6-4-5.3-0-53.6zM108.8 81.7l-3 0.9-3 1.5-6.5 4.6-7.1 6.9-7.4 9.2-8.6 12.4-9.4 16-12.6 23.6-1 2.4-0.4 2.6 0.3 2.4 1.1 3.1 14 30.1 9.6 18.9 7.4 13.1 6 8.6 6 6.5 2.9 2.3 2.7 1.5 2.4 1 3 0.4 2.6-0.2 3-0.9 3-1.4 3.5-2.4 3.5-3 3.4-3.6 7.5-9.4 8.5-13.2 9.6-17 16-31.8 1-2.6 0.5-2.4-0.2-2.6-1.3-3.4-13-26.1-10.1-18-8.5-13-7-8.5-3-3-3.4-2.7-3-1.7-3-1-3-0.4zM150.8 67.2l-10.6 0.5-3.8 0.5-1.2 0.7-0.6 0.9 0.1 2.4 1.6 3.6 8.2 14 7.5 14 20.2 41.6 1 1.5 1 0.5 1-0.6 1-1.5 13.3-26 10.4-19.1 7.1-11.4 10.4-15.6 1.1-2.4 0.1-1.6-0.6-1-1.2-0.6-4.6-0.5-38-0.1zM240.2 81.7l-3 0.8-3 1.4-6.4 4.4-7.1 6.8-7.5 9.1-9 13.2-9.4 16-12 22.5-1.6 3.5-0.3 2.4 0.3 2.4 1 2.9 14.6 31.1 9 17.9 7.4 13.2 6 8.6 6 6.5 3 2.4 2.6 1.5 2.5 0.9 2.9 0.5 3-0.3 3-0.9 3.3-1.7 3.3-2.3 3.4-3.1 3.6-3.7 7.4-9.5 8-12.4 9.6-17 16-31.8 1.1-2.8 0.5-2.4-0.2-2.2-1-2.9-13-26.2-9.4-17.2-9-14.1-7-8.6-3.6-3.4-3-2.4-3-1.8-3-1.1-3-0.5zM281.8 67.2l-10.6 0.5-3.7 0.5-1 0.6-0.8 1 0.1 2.4 1.4 3.2 8.7 14.8 7.5 14 19.8 41 1.6 2 1 0.1 1-1 1-1.8 11.2-22.3 9.5-17.4 8.9-15 10.8-16 1.3-2.6 0.2-2-0.5-0.8-1-0.6-5-0.7-38-0.1zM371.2 81.7l-3.4 1-3 1.5-6.6 4.7-7 6.9-8 9.9-9 13.4-9.4 16.2-11 20.8-1.5 3.7-0.3 2 0.2 2.3 1 2.7 14 30.1 9.6 19.1 7.4 13.1 6 8.7 6 6.5 3 2.4 2.6 1.5 2.6 1 2.8 0.5 3-0.3 3-0.9 3.4-1.7 3.2-2.3 3.4-3 3.6-3.7 7.4-9.5 8.6-13.2 9-16.1 16-31.8 1.4-3.4 0.3-2-0.2-2.6-1.1-2.7-13.4-27.1-9.6-17.2-9-13.8-6.4-7.9-3.5-3.4-3.1-2.4-3-1.7-3-1.1-3-0.5zM413.2 67.2l-10.4 0.5-4 0.5-1.2 0.6-0.8 1 0.1 2.4 1.4 3 8.7 15 7.5 14 19.7 40.8 1.6 2.2 1 0.1 1-0.9 1-1.7 10.8-21.5 9.4-17.4 9.5-16 10.8-16 1.3-2.6 0.2-2-0.6-0.9-1-0.6-5-0.6-37.4-0.1zM502.2 81.7l-3.4 1.1-3.1 1.4-6.2 4.6-7.3 7.1-7.5 9.3-8.5 12.5-9.4 16-12 22.6-1.3 2.9-0.4 2.6 0.2 2 0.9 2.8 14.6 31.2 9.4 18.9 7.6 13 6 8.6 6 6.4 2.6 2.1 2.8 1.6 2.6 0.9 3 0.4 3-0.3 2.9-1.1 3.1-1.6 3.4-2.5 3.6-3.1 3.4-3.7 7.6-9.6 8-12.5 10-18 15.4-30.9 1.1-2.6 0.3-2.6-0.4-2.4-1.4-3.6-13.6-27-9.4-17-8.6-12.9-7-8.5-3.2-3-3.2-2.5-3.1-1.6-2.8-0.9-2.7-0.4zM544.2 67.2l-10.4 0.5-4 0.5-1.1 0.6-0.8 1-0.1 1 0.2 1.4 1.6 3.6 8.8 15 7.2 13.4 19.6 40.6 1.6 2.3 1 0.3 1-0.9 1-1.6 11.7-23.1 9.4-17.6 9-15 10.5-15.4 1.3-2.6 0.2-2-0.6-1-1.1-0.5-5-0.6-37.4-0.1zM633.2 81.7l-3.3 1.1-3.1 1.4-6.2 4.6-7.4 7.2-7.4 9.3-9 13.3-9.6 16.2-11.4 21.8-1.2 2.6-0.4 2.6 0.3 2.4 1.3 3.3 14.4 31.1 9 17.9 7.6 13.1 6.4 9.2 5.6 5.8 2.7 2.2 2.7 1.6 2.6 0.9 3 0.4 3-0.3 3-1 3-1.6 3.5-2.5 3.5-3.1 4-4.3 7.4-9.7 8.6-13.4 10-18.2 14.4-29 1.2-2.8 0.3-2.6-0.5-2.7-1.4-3.5-14-27.9-9.6-16.9-8-12.1-7-8.4-3.1-2.9-3.3-2.5-3.1-1.6-2.7-0.9-2.8-0.4zM675.2 67.2l-10.4 0.5-4 0.5-1 0.6-0.8 1 0.1 2.4 1.6 3.5 8.8 15.1 7.5 14 19.8 40.8 1 1.4 1 0.4 1-0.7 1-1.6 11.8-23.3 9.4-17.6 9-15 10.5-15.4 1.3-2.6 0.2-2-0.6-1-1.2-0.5-4.4-0.6-38-0.1zM19.8 67.2l-10.6 0.5-3.9 0.5-1.1 0.6-0.7 1 0.1 2.4 1.6 3.6 8.8 15 7.5 14 19.7 40.8 1 1.4 1 0.4 1-0.7 1-1.6 11.9-23.3 9.4-17.6 9-15 10.5-15.4 1.3-2.6 0.2-2-0.6-1-1.2-0.5-4.5-0.6-38-0.1zM173.8 175.7l-1 0.8-1 1.7-16.9 34.6-9.8 19-6.6 11.4-10.1 16-1 3 0.1 1 1 1 3.3 0.8 8 0.2 55-0.1 17-0.8 2.4-0.8 1-1 0.1-2.3-1.1-3-8.1-15-6-12-23.9-51.9-1.4-2.3zM304.8 175.7l-1 1-1 1.7-16.3 33.4-9.5 18.4-7.4 13-10.4 16.5-0.6 1.5-0.1 1.6 0.5 1 0.8 0.5 3 0.7 8.4 0.2 54-0.1 17-0.8 2.7-0.5 1.3-1.1 0.3-1.9-1.2-3.6-7.9-14.4-6.5-13-23.7-51.7-1.4-2.2zM436.2 175.7l-1 0.5-1.5 2.4-16.8 34.6-9.9 19-6.9 12.1-9.5 14.9-1 3 0.2 1.1 1 1 3 0.7 8 0.2 53.4-0.1 18-0.7 2.8-0.6 1.3-1 0.3-2-1.2-3.6-7.9-14.4-6.5-13-23.2-50.9-1.6-2.6zM567.2 175.7l-1 0.6-1.4 2.5-16.3 33.4-10.4 20-6.6 11.6-9.8 15.4-1 3 0.1 1 1 1 3 0.8 7.4 0.2 54-0.1 18-0.7 2.9-0.6 1.3-1 0.3-2-0.9-3.1-8.4-15.5-6.5-13-23.1-50.5-1.6-2.5zM698.2 175.7l-1 0.7-1.4 2.6-16.2 33.2-10.1 19.6-6.9 12-9.8 15.4-1 3 0.1 1 1 1 2.9 0.8 7.4 0.2 54-0.1 18-0.7 3-0.6 1.3-1 0.3-2-1.2-3.6-8.1-15-6-12-23.7-51.7-1.6-2.4z"/>
<path fill="#fdd200" d="M30.5 41.2l54.7 0.2 10.6 0.6 14 1.6 5 0.3 21-1.8 13.4-0.6 25-0.3 34-0 16.6 0.6 16.4 1.9 4.6 0.2 21-1.8 12.4-0.6 26-0.3 30.6-0 18.4 0.5 18 2 4.6 0.2 21-1.8 12.4-0.6 54.6-0.3 20 0.5 23 2.2 21-1.8 12.4-0.6 53-0.3 21.6 0.5 19 2 4.4 0.2 20.6-1.8 12-0.6 52-0.3 22.4 0.4 19.6 2.1 4.5 0.2 25.5-2.1 26-0.6 0 24.7-17.6 0.3-11 0.5-2 0.4-1.4 0.7-0.8 1-0.2 1 0.4 2 1.1 2.4 8.6 14.6 6.1 11 7.6 15 9.2 18.9-0 22.3-9-18.4-8.6-16.3-7.4-13-7-10.6-6.6-8.1-5.8-5.4-2.6-1.7-2.7-1.3-2.9-0.7-2.4-0.1-3 0.4-3 1-3.6 1.8-3.4 2.4-7.6 6.9-7.4 8.9-9 12.9-10.6 17.6-12.4 23.5-1.5 3.4-0.4 2.6 0.3 2.4 1 2.9 13.6 29.2 9.4 19.2 8 14.1 6 8.8 6 6.8 2.6 2.1 3 1.9 2.5 1 2.9 0.6 3-0.2 2.9-0.8 3.1-1.6 3-2 3.6-3 3.4-3.5 7-8.6 7-10.4 8-13.7 9-17.1 11.6-23.3-0 22-11.3 23.2-8.5 16.4-8.6 15-10.2 15.6-1.2 2.4-0.5 2 0.3 1.1 0.9 0.9 3.5 0.9 35.6 0.3 0 24.7-37-0.3-9-0.6-13-1.7-4.6-0.3-27.4 2.3-30 0.6-45.6-0.3-10-0.6-13.4-1.7-5-0.3-26.6 2.3-29 0.6-47-0.2-10-0.7-13.4-1.7-5-0.3-26 2.3-27.6 0.6-49-0.2-10.4-0.7-13-1.7-5-0.3-25.6 2.2-25 0.7-51.4-0.2-10-0.6-14.6-1.8-4.4-0.3-24.6 2.2-21.4 0.6-55.6-0.1-10.4-0.6-14.6-1.8-4.4-0.3-21.6 2-15.4 0.7-38 0.2-27.6-0.2 0-24.8 40.6 0.3 31-0.4 11-0.9 1.8-0.9 0.8-1.4-0.1-2-1.1-2.8-7.6-13.8-5.7-11-7.8-16.4-17.3-38.2-1.6-2.8-1-0.8-1 0.1-1.4 2.1-17.2 35-10.1 19.6-7 12-6.3 9.6 0-23.1 8.6-13 10.4-18.9 15.6-30.9 1.5-3.7 0.3-2.6-0.4-2.4-1.4-3.7-15.6-30.8-10-17.5-5-7.6-4-5.4 0-51.4 13.6-0.8zM108.8 80.7l-3.4 1.1-3 1.4-6.6 4.9-7.6 7.6-7.4 9.5-9 13.5-9.6 16.3-11.4 21.9-1 2.6-0.4 2.3 0.3 2.4 1.1 2.9 14.4 31.3 9.6 19 7.4 13 6.6 9.3 5.4 5.9 2.7 2.2 2.9 1.6 2.4 1 3 0.4 3-0.3 3-1 3.3-1.7 3.4-2.6 3.9-3.4 3.4-3.8 7.6-9.7 8.4-13.4 10-18.2 15-30.1 1.2-2.8 0.3-2.6-0.5-2.7-1.4-3.6-13.6-27.1-9.4-17.1-8.6-13-7-8.6-3.4-3.4-3-2.3-3-1.7-3-1-3-0.3zM145.8 66.2l-8 0.5-3 0.8-1 0.7-0.5 1 0.4 2.6 1.5 3.3 8.8 14.7 7.5 14 8.6 17 12.1 25.5 1.6 1.8 1-0.1 2-2.8 11.3-22.4 9.5-17.6 9.3-15.4 11.7-17 1.2-2.6 0.2-2-0.6-1-1.2-0.6-5.4-0.6-38.6-0.2zM239.8 80.7l-3 0.9-3 1.5-6.6 4.7-7.4 7.4-7.6 9.4-8.4 12.6-10 17-11.6 21.9-1.3 3.1-0.4 2.6 0.3 2.2 1 2.9 14.4 31.2 9 18.1 8 14.1 6 8.6 6 6.6 2.8 2.3 2.8 1.6 2.4 1 3 0.4 3-0.3 3-1 3.4-1.7 3.2-2.3 3.4-3.1 3.6-3.7 7.4-9.5 8-12.4 9.6-17 16-31.9 1.4-3.5 0.6-2.6-0.3-2.6-1.3-3.5-13-26.1-10-18.2-9-13.9-7-8.5-3.4-3.3-3-2.3-3-1.7-3-1-3-0.3zM277.2 66.2l-8 0.5-3 0.6-1 0.5-0.6 1-0.2 1.4 0.3 1.6 1.5 3.2 8.9 14.8 7.8 14.4 8 16 12.3 25.9 1.6 1.9 1 0 1-0.9 1-1.7 11.7-23.2 9.5-17.4 9-15 11.7-17 1.2-2.6 0.2-2-0.6-1-1.3-0.6-5.4-0.6-38.6-0.2zM370.8 80.7l-3.1 1-3.1 1.5-3.4 2.2-3.4 2.9-7 7.1-7.6 9.4-9 13.4-9.4 16.2-11.6 21.9-1.2 2.9-0.4 2.6 0.3 2.4 1.3 3.6 14 30.1 9.6 19.1 7.4 13.1 6 8.7 6 6.6 2.9 2.4 2.7 1.5 2.4 1 3 0.5 3-0.3 3-0.9 3.5-1.8 3.1-2.2 3.4-3.1 3.6-3.7 7.4-9.5 9-14 9-16.3 16-31.9 1.2-2.9 0.5-2.4-0.3-2.6-1.4-3.7-13-26.1-10-18.2-9-13.8-7-8.5-3.4-3.3-3-2.3-3-1.6-3-1-3-0.3zM408.3 66.2l-8.1 0.5-3 0.6-1 0.6-0.5 0.9-0.2 1.4 0.4 1.6 1.3 3 8.7 14.4 7.6 14 8.5 17 12.2 25.7 1.6 2 1 0.2 1-0.9 1-1.6 11.8-23.4 9.5-17.4 9.4-15.6 11.3-16.4 1.2-2.6 0.2-2-0.6-1-1.4-0.6-5.4-0.6-38-0.2zM501.8 80.7l-3 1-3.1 1.5-3.5 2.3-3.4 2.9-7 7.1-7.6 9.4-9 13.5-9 15.3-12 22.8-1.1 2.7-0.4 2.6 0.3 2.4 1.2 3.4 14 30.1 9.6 19.1 7.4 13.2 6 8.7 6 6.6 3 2.5 2.6 1.5 2.4 1 3 0.5 3-0.3 3-0.9 3.6-1.8 3.4-2.6 7-6.8 7.6-9.7 8-12.4 10-18 15.4-31 1.3-3.1 0.5-2.4-0.2-2.6-1.6-3.9-13-26.1-10.4-19-8.6-12.9-7-8.5-3.4-3.3-3-2.3-3-1.6-3-1-3-0.2zM539.3 66.2l-8.1 0.5-3 0.7-1 0.6-0.4 0.8-0.2 1.4 0.4 1.6 1.6 3.4 8.4 14 7.6 14 9 18.1 11.6 24.4 1.6 2.2 1 0.2 1-0.8 0.9-1.5 12.2-24 9.6-17.6 9.1-15 11.3-16.4 1.2-2.6 0.2-2-0.6-1-1.5-0.7-5.4-0.5-38-0.2zM633.2 80.7l-3 0.9-3 1.4-3.4 2.2-3.2 2.6-7.4 7.2-7.4 9.4-9 13.3-10 17.1-11.6 21.9-1 2.5-0.4 2.6 0.3 2.4 1.1 3.2 14 30.1 9.6 19.1 7.4 13.2 6.6 9.4 6 6.5 2.5 2.1 2.9 1.7 2.6 0.9 3 0.4 3-0.3 3-1.1 3.1-1.6 3.4-2.6 3.9-3.5 3.6-3.8 7.4-9.7 8.6-13.4 10-18.3 15-30.1 1-2.6 0.3-2.6-0.4-2.4-1.5-3.7-14-28-10-17.9-8-12.1-7-8.4-3.1-2.9-3.2-2.6-2.7-1.4-3-1.1-3-0.3zM670.2 66.2l-8 0.5-3 0.7-1 0.7-0.4 1.1 0.3 2.6 1.6 3.4 8.4 14 7.8 14.6 8.6 17 11.7 24.7 1.6 2.3 1 0.3 1-0.7 1-1.5 12.2-24.1 9.6-17.6 9.4-15.4 10.8-15.6 1.4-3 0.2-2-0.6-1-1.6-0.7-5.4-0.5-38-0.2zM14.8 66.2l-8 0.5-3 0.7-1 0.7-0.6 1.1 0.4 2.6 1.6 3.4 8.4 14 7.8 14.6 8.6 17 11.8 24.7 1.5 2.3 0.9 0.3 1-0.7 1-1.5 12.3-24.1 9.6-17.6 9.4-15.4 10.7-15.6 1.5-3 0.2-2-0.7-1-1.4-0.7-5.6-0.5-38-0.2zM173.2 175.2l-2 3.1-16.2 33.5-9.9 19-7.5 13-10.7 16.4-0.9 3 0.2 1.1 1 1 3 0.8 8 0.3 56.5-0.1 17.5-0.9 2.7-0.6 1.3-1.2 0.3-2.4-1-3-8.6-15.4-6.3-12.6-23.8-51.8-2-3.2-0.6-0.3zM304.8 175l-1 0.9-1 1.6-16.7 34.3-10.2 19.4-7.5 13-10.4 16-0.9 3 0.2 1 1 1 2.9 0.8 7.6 0.3 55.4-0 18.6-0.8 3-0.7 1.4-1.1 0.4-0.9 0-1.6-1.3-3.4-8.3-15-6.6-13-24.2-52.6-1.4-2.1zM435.8 175l-1 1-1 1.7-16.9 34.5-9.9 19-7.5 13-10.4 16-0.9 3 0.2 1 1 1 3.4 0.9 8 0.3 57-0.2 17-0.9 2.4-0.6 1.4-1.5 0.1-2-1-3-8.6-15.4-6.6-13-23.7-51.8-1.6-2.5-0.4-0.4zM566.8 175.1l-2 2.8-16.3 33.3-10.1 19.6-7.5 13-10.7 16.4-0.7 2-0.1 1.6 0.5 1 0.9 0.6 3.4 0.7 9 0.3 56.6-0.2 16-0.8 2.4-0.7 1.5-1.5 0.1-2-1-3-8.3-15-6.9-13.4-23.8-52-1.6-2.4-0.4-0.4zM697.8 175.1l-2 3-16.2 33.1-10.1 19.6-7.5 13-10.7 16.4-0.9 3 0.4 1.3 1 0.9 3.4 0.7 8 0.3 56.6-0.2 17-0.8 2.5-0.6 1.5-1.4 0.1-2.2-1-3-8.3-15-6.6-13-24.2-52.6-1.6-2.3-0.4-0.3z"/>
<path fill="#ffac00" d="M17.6 42.8l25.6-0.4 40 0.2 11.6 0.6 15 1.8 5 0.3 20-1.9 13.4-0.6 26-0.4 33.6 0.1 16.4 0.6 17 1.9 5 0.3 19.6-1.8 13-0.7 26.4-0.4 30 0.1 19.6 0.5 17.4 2 5 0.3 19.6-1.8 12.4-0.7 27.6-0.4 27.4 0.1 21.1 0.5 17.9 2 5 0.3 19.6-1.8 12.4-0.7 53.6-0.4 22.4 0.6 18 2 5 0.3 19.6-1.8 12.4-0.7 52.6-0.4 23.4 0.6 18.6 2 4.4 0.3 25.6-2.2 26-0.6 0 22.1-18 0.3-11.6 0.6-2 0.4-1.4 0.6-1 1.2-0.3 1.1 0.3 2 1.1 2.4 9.1 15 6.1 11 8 15.6 9.7 19.9-0 20.2-9.6-19.4-8.4-16.2-7.6-13-7-10.4-6.4-8-5.8-5.1-2.8-1.8-2.4-1.1-3-0.6-2.6-0.1-3 0.6-3 1.1-3.4 1.9-3.6 2.5-7.4 7.1-8 9.7-9 13.2-10 16.9-12.6 23.7-1.3 3.3-0.4 2.6 0.3 2.2 1 3 14 30.3 9.4 19.3 8 14.2 6.6 9.4 6 6.6 3 2.4 2.4 1.5 2.6 0.9 2.4 0.4 2.6-0.1 3-0.8 3-1.5 3.4-2.3 3.6-2.9 3.4-3.6 7-8.6 7-10.4 8-13.8 9-17.1 11.6-23.2-0 20-12.3 25.1-8.9 17-8.5 14.4-10.4 15.6-1.3 2.4-0.4 2 0.2 1.1 1 1.1 1.6 0.6 2.4 0.3 11.6 0.4 25-0-0 22.2-37.6-0.4-8.4-0.6-13-1.8-5-0.3-26 2.4-31 0.6-46.6-0.3-9-0.6-13.4-1.8-5-0.3-25.6 2.4-29.4 0.6-48-0.2-9.6-0.6-13.4-1.8-5-0.4-25.6 2.4-27.4 0.6-50-0.2-10-0.7-13-1.7-5-0.4-24.6 2.3-25.4 0.7-52.6-0.2-10.4-0.7-13.5-1.8-4.5-0.3-23.6 2.2-22 0.8-56.4-0.2-10.6-0.6-14-1.9-5-0.3-20.4 2.1-15 0.7-36.6 0.3-30-0.3-0-22.2 45 0.3 28.6-0.5 7-0.5 3.4-0.6 1.6-0.9 0.7-1 0.2-1-0.3-2-1.2-2.9-7.7-13.5-6-11.6-8.6-18-17.1-37.6-1.6-2.6-1-0.8-1 0.1-1.4 1.9-15.7 32-8.7 17-8.4 15-7.8 12-0-20.8 8.6-13.1 9-16 17-33.8 1.4-3.4 0.7-2.9-0.1-3-1-2.9-15-30.3-11-19.5-5-7.7-4.6-6.1-0-49zM23.8 64.7l-14 0.5-6 0.7-1.6 0.6-1 1-0.3 1.3 0.2 1.4 1.7 4 9.2 15 8.4 15.6 8.5 17 11.9 24.7 1.4 2.1 1 0.3 1-0.6 1-1.4 12.8-25.1 9.9-18 9.6-15.6 11.3-16 1.5-3 0.2-2-0.7-1.1-1.6-0.7-5-0.6zM110.8 79.2l-3 0.6-3 1.1-3.6 1.9-3.4 2.5-7.6 7.1-8 9.7-9 13.2-10 16.9-12.4 23.7-1.4 3.3-0.4 2.6 0.2 2.2 1 3 14 30.3 9.6 19.3 8 14.2 6.4 9.4 6 6.6 3 2.4 2.6 1.5 2.4 0.9 2.6 0.4 3-0.2 3-0.9 3.1-1.7 3.6-2.4 3.7-3.4 3.6-3.7 7.4-9.6 8.6-13.3 10-18.1 15.4-31 1.4-3.5 0.5-2.4-0.3-3-1-2.8-12-24.4-10.6-19.4-8.4-13.5-7-9.1-3.6-3.7-3-2.6-3-2-3-1.4-3-0.6zM154.8 64.7l-13.6 0.5-6 0.6-1.5 0.4-1.2 1-0.5 1.6 0.2 1.4 1.7 4 9.2 15 7.9 14.6 9 18 11.8 24.5 1.4 2.2 1 0.4 1-0.5 1.6-2.3 12.6-24.9 9.6-17.4 9.6-15.6 11.6-16.4 1.2-2.6 0.2-2-0.8-1.1-1.6-0.8-5-0.5zM241.8 79.2l-3 0.6-3.6 1.4-3.4 2-3.5 2.6-7.5 7.2-7.6 9.2-9.4 14-10 17-12 22.9-1.3 3.1-0.4 2.6 0.2 2 0.9 3 14 30.3 9.6 19.3 8 14.2 6.4 9.5 6 6.6 3 2.4 2.6 1.5 3 1.1 2.4 0.3 3-0.3 3-1 3-1.6 3.6-2.5 3.4-3.1 3.6-3.7 7.4-9.5 8.6-13.3 9.4-17.2 16-31.9 1.5-3.7 0.5-2.4-0.4-3-1-3-11.6-23.4-10.4-19.5-9-14.4-7-9-3.6-3.7-3-2.5-3-2-3-1.4-2.9-0.7zM285.8 64.7l-13.6 0.5-6 0.6-1.4 0.5-1.2 0.9-0.5 1.6 0.2 1.4 1.7 4 9.5 15.6 7.6 14 8.3 16.4 12.8 26.8 1.5 1.8 1.1 0 1-0.9 1-1.6 12.2-24.1 9.6-17.4 9.4-15.6 12-17 1.5-3 0.2-2-0.6-1-1.3-0.7-5.6-0.7zM372.7 79.2l-2.9 0.6-3.6 1.4-3.4 2-3.4 2.6-7.6 7.3-7.6 9.3-9 13.2-10 16.9-12.4 23.8-1.2 2.9-0.4 2.6 0.4 3 1.2 2.9 14 30.3 9.4 19.2 8 14.1 6.6 9.3 5.6 6.2 2.8 2.3 2.9 1.7 2.7 0.9 2.4 0.3 3-0.3 3-1 3.6-1.8 3.4-2.6 7-6.9 7.6-9.7 8.4-13.4 9.6-17.2 15.4-31 1.6-3.6 0.5-2.7-0.4-3-1.1-3.2-12-24.4-10-18.5-9-14.3-7-9-3.6-3.7-3-2.5-3-2-3-1.3-2.8-0.7zM416.8 64.7l-13.6 0.5-6 0.6-1.4 0.5-1.1 0.9-0.5 1.6 0.2 1.4 1.7 4 9.5 15.6 7.9 14.4 8.5 17 12.2 25.6 1.5 2 1.1 0.1 1-0.8 1-1.6 12.3-24.3 9.8-18 9.6-15.4 11.6-16.6 1.5-3 0.2-2-0.6-1-1.4-0.8-5-0.6zM503.8 79.2l-3 0.6-3.5 1.4-3.4 2-3.1 2.4-7.6 7.1-7.4 9.1-9.6 13.9-10 17-12.4 23.8-1.1 2.7-0.4 2.6 0.4 3 1.1 2.7 13.4 29.2 9.6 19.3 8 14.3 6.4 9.5 6 6.7 2.7 2.3 2.9 1.7 3 1.2 2.4 0.3 3-0.3 3-0.9 3-1.6 3.6-2.4 3.4-3.1 4-4.2 7.6-9.7 8.4-13.3 9.6-17.2 16-32.1 1.1-3 0.5-2.4-0.4-3-1.2-3.4-11.6-23.4-10.4-19.4-9-14.4-7-8.9-3.6-3.7-3-2.5-3-2-3-1.3-2.7-0.6zM548.2 64.7l-14 0.5-6 0.6-1.4 0.6-1 0.9-0.5 1.5 0.2 1.4 1.7 4 9.2 15 8.2 15 8.5 17 12.1 25.5 1.6 2 1 0.2 1-0.7 1-1.5 12.6-24.9 9.6-17.6 9.6-15.4 11.6-16.6 1.5-3 0.2-2-0.6-1-1.5-0.8-5-0.6zM634.8 79.2l-3 0.7-3.4 1.3-3.4 2-3.4 2.6-7.4 7-8 9.8-9.4 14.1-10 17.1-11.6 21.9-1.4 3.5-0.4 2.6 0.4 2.6 0.9 2.9 14.1 30.2 9.4 19.3 8 14.1 6.6 9.5 5.8 6.4 3.1 2.4 2.5 1.5 2.6 0.9 2.4 0.4 3-0.2 3-1 3.1-1.6 3.6-2.4 3.3-3 4-4.2 7.6-9.6 8.4-13.4 9.6-17.1 16-32.1 1.2-3.2 0.5-2.4-0.3-2.6-1-2.9-12-24.5-10.4-19.4-9-14.3-7-9-3.6-3.5-3-2.6-3-1.9-3-1.3-2.6-0.6zM679.2 64.7l-14 0.5-6 0.7-1.4 0.6-1 1-0.4 1.3 0.2 1.4 1.7 4 9.2 15 8.4 15.6 8.5 17 11.8 24.7 1.6 2.1 1 0.3 1-0.6 1-1.4 12.7-25.1 9.9-18 9.6-15.6 11.3-16 1.5-3 0.2-2-0.8-1.1-1.4-0.7-5-0.6zM173.8 174.1l-1 0.8-1.6 2.5-16.7 34.4-10.5 20-8 13.4-10.6 16-0.8 2-0 1.6 0.5 1 1.1 0.8 3.6 0.7 9.4 0.3 55.6-0.1 18-0.9 3-0.6 1.5-1.2 0.4-1 0.1-1.6-1.2-3.4-8.6-15-6.9-13.6-24.9-53.8-1.4-2zM304.8 174.2l-1 0.8-1.6 2.6-16.6 34.2-10.5 20-7.7 13-10.7 16-0.8 2-0.3 1.4 0.6 1.6 1 0.8 3.6 0.7 10 0.3 57.4-0.1 16.6-1 2.5-0.7 1.4-1.6 0.1-2.4-1.1-3-9.1-16-6.6-13.1-24.2-52.5-1.6-2.5-0.6-0.5zM435.8 174.2l-1 0.9-1.6 2.7-16.3 33.4-10.4 20-8 13.6-10.9 16.4-0.8 2 0 1.6 0.4 1 1 0.7 3.5 0.8 9.5 0.3 57.6-0.1 17-1 2.6-0.7 1.4-1.4 0.2-2.2-1.2-3.4-8.8-15.6-6.4-12.4-24.8-53.8-1.6-2.4-0.4-0.4zM567.2 174.1l-1 0.6-1.4 2.3-17.3 35.2-10.5 20-7.4 12.6-10.9 16.4-0.9 3 0.4 1.4 1 0.9 3.6 0.8 9 0.3 56.4-0.1 18-0.9 3-0.7 1.6-1.3 0.3-2.4-1.2-3.4-8.8-15.6-6.7-13-24.6-53.4-1.6-2.3zM698.2 174.1l-1 0.7-1.4 2.4-17.2 35-10.5 20-7.7 13-10.6 16-0.9 3 0.3 1.2 1 1 3.6 0.9 8 0.3 56-0.1 19-0.8 3.4-0.8 1.6-1.2 0.3-0.9 0.1-1.6-1.2-3.4-8.6-15-6.9-13.6-24.7-53.6-1.6-2.2z"/>
<path fill="#ff8700" d="M15.5 44.2l27.7-0.3 40 0.2 11.6 0.5 15 1.8 5.4 0.4 19.6-1.9 13.4-0.7 26-0.3 33.6-0 17 0.6 16.4 2 5 0.3 4.6-0.3 15-1.6 13-0.7 26.4-0.3 30.6-0 19 0.6 17.4 2 5 0.3 4.6-0.3 15-1.6 13-0.7 54.4-0.3 21 0.5 18.6 2.1 5 0.3 19-1.9 12.4-0.7 53.6-0.3 22.4 0.5 18.6 2.1 5 0.3 19-1.9 12.4-0.7 52.6-0.3 23.4 0.5 18.6 2.1 5 0.3 24.4-2.2 26.6-0.7 0 19.3-19.6 0.3-11.4 0.7-2 0.5-1.6 0.7-1 1.3-0.2 1.5 0.5 2 1.4 3 9.6 15.6 8.1 14.4 16.1 32.6 0.1 18-10-20.4-8.6-16.2-7.4-12.9-6.6-9.7-6.4-8-6-5.4-3-1.8-2.6-1-2.4-0.5-2.6 0-3 0.6-3.3 1.3-3.1 1.7-3.6 2.6-7.4 7.1-8 9.7-9.6 14-10.4 18-12 22.9-1.2 3-0.5 3 0.3 2.4 0.8 2.8 13 28.4 10.6 21.5 8 14.4 6.4 9.6 6 6.8 3 2.5 2.6 1.6 2.4 1 3 0.6 3-0.3 2.9-0.9 3.1-1.6 3-2 3.6-3 3.4-3.5 7-8.7 7-10.5 8-13.7 9-17.2 11.6-23.2 0 17.8-12.4 25.2-9.5 18-8.8 15-11.1 16-1.3 2.4-0.3 2 0.4 1.5 1 0.9 1.4 0.7 3 0.4 12 0.4 25.6 0.1 0 19.2-25 0-13-0.4-8-0.6-13-1.8-5-0.3-26 2.5-30.6 0.6-47-0.3-9.4-0.7-13-1.8-5-0.3-25.5 2.4-29.1 0.7-33.4 0-15.6-0.3-9.4-0.6-13.5-1.9-5.1-0.3-24.4 2.4-27.6 0.7-35 0-16-0.3-9.4-0.6-13.6-1.9-5-0.3-23.4 2.3-25.6 0.8-37 0-16.4-0.3-10-0.6-13.6-1.9-5-0.3-22.4 2.3-22 0.7-39 0.1-18.6-0.2-10.4-0.7-13.6-1.9-5-0.3-4 0.2-16 1.9-14.4 0.7-35 0.3-32.6-0.2 0-19.3 47.6 0.2 27.4-0.5 6.6-0.5 3.4-0.6 2.1-1.3 0.8-2-0.3-2.4-1.1-2.6-8.2-14-6.4-12-8.6-18-17.7-38.7-1.6-2.5-1-0.7-1.4 0.6-1.6 2.2-15.1 31.1-9 17.6-8.2 14.4-7.7 11.8 0-18.4 9-13.9 10.6-19.1 16-32.1 1.2-3.3 0.4-3-0.4-3-1.2-3.1-8-16.5-8-15.6-10.6-18.5-4.4-6.9-4.6-6.2 0-20.2 1.9 3.6 8.3 13 5.7 10 10.3 20 14.4 29.7 1.4 2 1 0.3 1-0.6 1.6-2.2 13.6-26.8 10.7-19 8.9-14 11.3-15.4 1.4-2.6 0.6-2-0.1-1-0.4-1-2-1.2-3.6-0.5-6.4-0.3-36.6-0.1-26.4 0.4-12.6 0.7-2.4 0.6-1.6 1 0-20.6zM108.8 78.2l-3 0.9-3.3 1.7-3.3 2.1-3.4 2.8-7.6 7.7-7.4 9.6-9.6 14.3-10 17.4-11 21.1-1.1 3-0.5 3 0.3 2.4 0.9 2.8 13 28.4 10.4 21.5 8.1 14.4 6.5 9.6 6 6.8 3 2.5 2.4 1.6 2.6 1 3 0.6 3-0.3 3-0.9 3-1.6 3.4-2.4 3.6-3.1 4-4.2 7.4-9.6 9-14.2 9.6-17.3 16-32.1 1.3-3.5 0.4-2.4-0.3-2.8-1-3-13-26.5-11-20.2-9-14-7-8.7-3.4-3.4-3-2.3-3-1.7-3-1-3-0.3zM159.2 63.2l-16.4 0.5-8.6 0.7-2 0.7-1 0.8-0.6 1.3 0 1.6 0.5 2 1.3 2.4 9.6 15.6 8.9 16 8.6 17 12.3 25.5 1.3 1.9 1.1 0.6 1.1-0.6 1.5-2 12.7-25 10.5-19 10.1-16 11.6-16 1.5-3 0.1-2-0.5-1.1-1.6-0.9-5-0.8zM239.8 78.2l-3 1-3.2 1.6-3.4 2.2-3.4 2.8-7.6 7.7-7.4 9.6-9 13.6-10.6 18.2-11 21.1-1 2.8-0.5 3 0.4 3 1.1 3.2 13.6 29.3 10 20.3 8 14.3 6.4 9.5 6 6.7 3 2.4 2.6 1.5 2.4 1 3 0.4 3-0.4 3-1 3.3-1.8 3.4-2.4 3.9-3.5 3.4-3.8 7.6-9.8 8.4-13.4 10-18.2 15.6-31.2 1.4-3.7 0.4-2.4-0.3-3-1.1-3-12.4-25.6-10.6-19.4-5-8.2-4.4-6.8-4-5.2-3.6-4.1-3.4-3.4-3-2.3-3-1.6-3-1-3-0.3zM290.2 63.2l-15.4 0.4-9 0.7-2 0.6-1.3 0.9-0.7 1.3-0.1 1.7 0.5 2 1.3 2.4 9.9 16 8.6 15.6 9.1 18 11.7 24.4 1.4 2 1 0.6 1-0.4 1.6-2.1 12.8-25.1 10.5-19 9.4-15 12.3-17 1.5-3 0.1-2-0.6-1.2-1.2-0.8-1.8-0.5-3.6-0.3zM371.2 78.1l-3 0.9-3.4 1.7-3.6 2.4-3.3 2.7-7.1 7.3-8.1 10.1-8.9 13.6-10 17.4-11.6 22.1-1 2.5-0.4 3 0.4 3 1 2.9 13.6 29.4 10 20.3 8 14.3 6.4 9.6 6 6.7 3 2.4 2.6 1.6 2.4 0.9 3.1 0.5 2.9-0.4 3-1 3.4-1.8 3.4-2.4 3.8-3.4 3.4-3.8 7.6-9.7 8.4-13.4 10.1-18.2 15.5-31.2 1.4-3.7 0.5-2.6-0.3-3-1.1-3.2-12.5-25.5-11-20.3-9-14.1-7-8.7-3.6-3.5-3-2.4-3-1.8-3-1-3-0.4zM421.2 63.2l-16 0.5-8.4 0.6-2 0.6-1.2 0.9-0.8 1.4 0 1.6 0.5 2 1.3 2.4 9.9 16 8.6 15.6 8.3 16.4 12.8 26.6 1 1.5 0.9 0.5 0.7-0.1 1-0.7 1-1.5 13.1-25.7 10-18.1 9.7-15.5 12.3-17 1.5-3 0.1-2-0.4-1-1.4-1-1.9-0.5-3.6-0.3zM502.2 78.2l-3 0.9-3.4 1.7-6.6 4.8-7.4 7.6-7.6 9.5-9 13.5-10.4 18.1-11.6 22.2-1 2.7-0.3 2.6 0.3 2.8 1 2.9 13 28.3 10.6 21.5 8 14.3 6.4 9.6 6 6.7 3 2.5 2.6 1.5 2.4 1 3 0.5 3-0.3 3-1 3.6-1.9 3.4-2.6 7-6.9 8-10.4 8.6-13.5 10-18.3 15.4-31.2 1-2.6 0.6-2.9-0.3-3-1.3-3.5-12.4-25.4-11-20.3-9-14-7-8.7-3.6-3.5-3-2.4-3-1.7-3-1.1-3-0.3zM552.8 63.2l-16 0.4-9 0.8-2 0.6-1.1 0.8-0.8 1.4 0 1.6 0.6 2 1.2 2.4 10.2 16.6 8.6 15.4 8.5 17 12.2 25.5 1.6 1.9 1 0.2 1-0.7 1.4-2.3 12.8-25 10-18 10-16 12-16.6 1.5-3 0.1-2-0.4-1-1.4-1-2-0.5-3.6-0.3zM633.2 78.2l-3 0.9-3.3 1.7-6.7 4.9-7.4 7.6-7.6 9.5-9.4 14.4-10 17.3-11 21.1-1.5 3.6-0.3 2.6 0.3 2.4 0.9 3.1 13.6 29.3 10 20.5 8 14.3 6.4 9.6 6 6.8 3 2.5 2.6 1.6 2.4 1 3 0.5 3-0.3 3-1 3.6-1.8 3.4-2.5 7-7 7.6-9.6 8.4-13.4 10-18.2 16-32.1 1.3-3.3 0.4-2.4-0.3-3-1.4-3.7-12.4-25.4-10.6-19.4-5-8.2-4.4-6.7-7-8.7-3.6-3.4-3-2.3-3-1.8-3-1-3-0.3zM683.8 63.2l-16.5 0.5-8.5 0.7-2 0.6-1 0.8-0.8 1.4 0 1.6 0.6 2 1.2 2.4 9.7 15.6 8.5 15.4 8.9 17.6 12.3 25.7 1.6 2 1 0.3 1-0.6 1.4-2.2 12.4-24.2 10.5-19 10-16 12-16.6 1.5-3 0.1-2-0.5-1-1.4-1-2-0.5-3.6-0.3zM173.2 173.5l-2 2.8-16.8 34.5-10.8 20.5-8 13.4-11.7 17.1-0.8 2-0.2 1.4 0.4 1.6 1.1 1 3.8 0.9 9 0.3 58-0.1 11.6-0.4 7.4-0.6 3-0.8 1.6-1.3 0.4-2.6-1.4-4-8.8-15-7-13.4-7.9-16.6-17.3-37.9-1-1.8-1-1-0.6-0.2zM305.2 173.2l-1.4 0.9-1.6 2.4-17.7 36.3-10.9 20.4-7.6 12.6-11 16-0.8 2-0.2 1.4 0.4 1.6 1.1 1 3.7 0.9 9 0.3 58-0.1 11-0.3 8-0.7 3-0.7 1.6-1.4 0.4-1 0.1-1.6-1.2-3.4-8.7-15-5.8-11-9.2-19-17.2-37.6-1.4-2.8zM435.2 173.7l-2 3-16.6 34.1-10.5 20-8.7 14.4-11.3 16.6-0.8 2-0.2 2 0.7 1.3 1 0.7 4 0.9 9.4 0.4 57.6-0.2 18.4-1 3-0.7 1.7-1.4 0.4-1 0.1-1.6-1.2-3.4-9.3-16-7-13.5-25.1-54.4-1-1.6-1-0.9-0.6-0.1zM566.8 173.4l-1 0.9-1.6 2.6-16.7 34.3-10.6 20-8.4 14-11.3 16.6-0.8 2-0.2 1.4 0.4 1.6 1.2 1 4 0.9 9 0.3 58-0.1 18.4-0.9 3-0.8 1.8-1.4 0.4-1 0-1.6-1.3-4-9.1-15.4-7-13.6-25.2-54.5-1.6-2.1-0.4-0.3zM697.8 173.5l-1 1-1 1.6-17.3 35.1-10.5 20-8 13.6-11.7 17-0.8 2-0.2 1.4 0.4 1.6 1.1 1 4 0.9 9 0.3 58-0.1 18.4-0.9 3.1-0.8 1.8-1.4 0.4-2.6-1.3-4-9.1-15.4-7-13.6-25.3-54.6-1.6-2.1-0.4-0.2z"/>
<path fill="#ff7300" d="M22.8 45.8l35-0.2 27 0.2 10.4 0.6 14.6 1.7 6 0.4 4.4-0.2 15-1.7 13-0.7 26-0.3 34.6 0 15.4 0.6 17 2 6 0.3 4.6-0.3 14-1.6 13-0.7 26.4-0.3 31 0 18.6 0.6 17.4 2 6 0.3 4.6-0.3 14-1.6 12.4-0.7 27.6-0.3 28.4 0 20 0.5 18 2 6 0.4 4.6-0.3 14-1.6 12.4-0.7 54.6-0.3 21.4 0.5 18 2 6 0.4 4.6-0.2 14.4-1.7 12-0.7 53-0.3 22.6 0.5 19 2.1 5.4 0.3 4.6-0.2 11-1.4 9-0.7 26-0.6 0 15.9-19.6 0.3-12.4 0.8-2.6 0.6-1.4 0.8-1 1.2-0.4 1.6 0.4 2.4 1 2.6 10 15.4 6.6 11.6 9 17 10.4 21.3 0 15.4-10-20.4-8.6-16.3-7.4-12.9-6.5-9.8-6.5-8-3-3-3-2.4-2.6-1.6-2.4-1-2.6-0.6-3-0.1-3 0.6-3.4 1.3-3.6 2.1-3.4 2.6-7.6 7.3-8 9.9-10 15-10.4 18.3-11.6 22.1-1.1 3.2-0.4 3 0.3 3 1 3 11.8 25.7 11 22.9 8.4 15.5 6.6 9.8 6 7.1 3 2.7 2.4 1.6 2.6 1.2 3 0.6 3-0.2 3-0.8 3-1.5 3-2 3.4-2.9 3.6-3.5 7.4-9.2 7-10.5 8-13.8 8.6-16.2 12-24.3 0 15.3-13.3 26.9-9.6 18-9.4 15.6-11.2 15.4-1.5 3-0.4 2 0.4 1.6 1.4 1.4 2 0.8 2.6 0.3 12 0.5 27 0 0 15.9-25 0-13-0.4-8-0.6-13-1.8-5.6-0.4-4 0.2-11.4 1.6-9.6 0.7-30.5 0.7-47.5-0.3-9-0.6-13.4-1.9-5.6-0.4-4 0.2-11.4 1.6-9 0.7-29 0.7-34 0-15.6-0.3-9-0.6-14-2-5.4-0.3-23.6 2.5-27.4 0.7-35.6 0-16-0.3-9-0.6-14-2-5.4-0.3-23 2.4-25 0.8-37 0-17-0.3-9.6-0.6-14-2-5.4-0.3-4 0.2-18 2.2-21.6 0.7-39 0.1-19-0.2-10-0.7-14-1.9-5.4-0.4-4.6 0.2-15 2-14.4 0.7-35 0.3-32.6-0.2 0-15.9 49.6 0.2 27-0.6 6.4-0.6 3.6-0.7 2-1.3 0.5-0.8 0.4-1.6-0.4-2.4-1.2-3-8.9-14.7-6.1-11.3-9-18.6-17.9-38.9-1.4-2.7-1.6-1.2-1.4 0.5-1.6 2.1-15.3 31.2-8.5 16.6-8.4 15-7.8 11.8 0-15.6 9.6-14.8 10.4-19.2 16-32.3 1.3-3.5 0.3-3-0.3-3-1.3-3.3-16-32.3-10.4-18.7-5-7.8-4.6-6.2 0-16.4 8.4 12.7 6.4 11 11 21 14.2 29.6 1.6 2.3 1.4 0.6 1-0.5 1.6-2.1 14.3-27.9 11-19.4 9.5-14.6 11.8-15.4 1.4-2.6 0.5-2-0.4-2-1.7-1.4-3-0.8-5-0.3-31.4-0.3-30.6 0.2-16 0.7-3.4 0.4-2.6 0.6 0-16.4 10-0.7zM108.8 76.7l-3 1-3.6 1.7-3.4 2.4-3.6 3-7.4 7.8-7.6 9.7-9.4 14.6-10.6 18.4-10.4 20.3-1.2 3.2-0.4 3 0.3 3 1.2 3.4 12.5 27.5 10.6 21.6 8.4 15.4 6.6 9.7 6 6.9 2.9 2.5 2.5 1.6 2.6 1 3 0.5 3-0.3 3-0.9 3.4-1.9 3.6-2.5 3.4-3.2 4-4.3 7.6-9.8 9-14.4 10.4-19.4 15-30.3 1.2-3.1 0.5-3-0.2-3-1.2-3.6-12.3-25.1-11-20.5-5-8.3-4.4-6.8-7.6-9.4-3.4-3.4-3-2.4-3-1.6-3-1-3-0.3zM149.2 61.7l-12.4 0.6-5 0.9-1.6 0.8-1 1.2-0.3 2 0.4 2 1.9 4 9.7 15 8.5 15 9.2 18 13.2 27.3 1.4 1.9 1.6 0.2 1-0.8 1-1.6 12.8-25 10.5-19 10.5-16.4 13.2-17.6 1.4-3 0.1-2.4-1.1-1.5-1.4-0.8-2.6-0.5-4-0.3-42-0.3zM240.2 76.7l-3 0.8-3 1.4-3.4 2.3-3.6 2.8-7.4 7.5-8 10.2-9.5 14.5-10.5 18.4-11 21.2-1.1 3-0.4 3 0.3 3 1.2 3.4 12.4 27.2 10.6 21.7 8.4 15.5 6.6 9.7 6 6.9 3 2.6 2.4 1.6 2.6 1 3 0.5 3-0.2 3-1 3.4-1.8 3.5-2.6 3.5-3.1 4-4.3 7.6-9.8 9-14.3 10-18.4 15.4-31.3 1.3-3.3 0.5-3-0.2-3-1-3.2-12-24.7-11-20.6-9.6-15.2-7.4-9.6-3.6-3.5-3-2.4-3-1.8-3-1-3-0.4zM280.2 61.7l-12.4 0.7-5 0.8-1.6 0.8-0.9 1.2-0.3 1.6 0.2 2 2.1 4.4 9.7 15 8.5 15 9.4 18.6 12.9 26.6 1.4 1.9 1.6 0.3 1.1-0.8 1.3-2.2 12.7-24.9 10.6-18.9 10.6-16.6 12.8-17 1.4-3 0.1-2.4-1.1-1.6-1.5-0.7-2.6-0.5-4-0.3-42-0.3zM371.2 76.7l-3 0.9-3 1.4-3.5 2.2-3.5 2.8-7.4 7.7-8 10.2-9.6 14.5-10.5 18.3-10.9 21.4-1 2.7-0.4 3 0.3 3 1.1 3.1 13 28.4 10.4 21.6 8.6 15.3 6.4 9.6 6 6.8 3 2.5 2.6 1.5 2.4 0.9 3 0.4 3-0.3 3-1 3.6-2 3.4-2.6 3.6-3.2 4-4.4 7.4-9.9 9-14.4 10-18.5 15.1-30.4 1.3-3.4 0.5-3-0.2-3-1.1-3.4-12.6-25.7-11-20.4-5-8.3-4.4-6.8-7-8.8-3.6-3.5-3-2.4-3-1.7-3-1.1-3-0.3zM411.8 61.7l-13 0.7-5 0.8-1.5 0.9-0.9 1.1-0.3 1.6 0.2 2 1.8 4 10.1 15.7 8.4 14.7 9.4 18.6 12.8 26.4 1.4 2.1 1.6 0.4 1-0.7 1.4-2.2 12.8-25 10.6-19 10.2-16 13.2-17.6 1.4-3 0.1-2.4-1.1-1.6-1.6-0.7-6.1-0.8-41.9-0.3zM502.2 76.7l-3 0.9-3 1.4-3.4 2.3-3.6 2.8-7.4 7.7-8 10.2-9.5 14.5-10.5 18.4-10.6 20.3-1.3 3.6-0.4 3 0.3 2.8 1 3.1 13 28.4 10.4 21.6 8.6 15.4 6.4 9.6 6 6.8 3 2.5 2.6 1.5 2.4 1 3 0.4 3-0.3 3-1 3.6-1.9 3.4-2.6 3.6-3.2 4-4.3 7.4-9.9 9-14.4 10-18.5 15.2-30.6 1.4-3.4 0.4-3-0.3-3.6-1.1-3.1-12-24.6-11-20.5-5-8.4-4.6-6.8-7.4-9.5-3.6-3.4-3-2.4-3-1.8-3-1-3-0.3zM542.8 61.7l-12.6 0.6-5 0.8-1.4 0.7-1.3 1.4-0.3 1.6 0.2 2 1.8 4 10.3 16 8.5 15 9.4 18.4 12.4 25.8 1.4 2.2 1.6 0.5 1-0.6 1.4-2.1 14.8-28.8 11.5-20 8.5-13 12.4-16.4 1.2-3 0-2-0.8-1.3-1.6-0.9-2.4-0.6-4-0.3-42-0.3zM633.2 76.7l-3 0.9-3 1.5-3.4 2.3-3.5 2.8-7.5 7.7-8 10.3-9.5 14.5-10.5 18.4-10.6 20.3-1.2 3.4-0.4 3 0.2 2.4 1 3.2 13 28.5 10.4 21.6 8.6 15.4 6.4 9.6 6 6.9 3 2.5 2.6 1.6 2.4 1 3 0.4 3-0.3 3-1 3.6-1.8 3.4-2.6 3.6-3.2 4-4.3 7.4-9.9 9-14.3 10-18.5 15.6-31.3 1-2.9 0.5-3-0.3-3.6-1.2-3.3-12-24.6-11-20.5-5-8.4-4.6-6.7-7.4-9.5-3.6-3.4-3-2.4-3-1.7-3-1-3-0.3zM673.8 61.7l-12.6 0.6-5 0.8-1.4 0.8-1.2 1.3-0.3 1.6 0.2 2 2.1 4.4 9.6 15 8.3 14.6 9.5 18.4 13 27 1.2 1.9 1.6 0.6 1-0.5 1.4-2.1 14.4-27.9 12-21 8.5-13 12.4-16.4 1.2-3 0-2-0.9-1.4-1.6-0.8-2.4-0.6-4-0.3-42-0.3zM173.2 172.6l-1 0.9-1.4 2.6-17.3 35.1-10.9 20.6-8.6 14-10.2 14-1.9 3-0.8 2-0.1 2 0.6 1.4 1.2 1 4 1.1 10 0.4 59-0.1 11.4-0.4 8-0.7 3.1-0.7 0.9-0.6 1-1.1 0.5-1.3 0-1.6-1.2-4-9.7-16.1-7.1-13.3-8.2-17-17.7-38.7-1.7-2.3-0.9-0.5zM304.2 172.6l-2 2.7-17.3 35.5-10.9 20.4-8.8 14.3-10.3 14.3-1.9 3-0.8 2-0.1 2 0.6 1.4 1.2 1 1.9 0.7 2.4 0.4 10 0.4 60-0.1 11-0.5 7.6-0.6 3-0.9 1-0.8 0.7-1 0.4-1.6-0.1-1.4-1.2-3.6-9.8-16.3-7.3-13.7-8.4-17.4-16.9-36.9-2-3.1-1-0.5zM435.2 172.7l-2 2.8-17.2 35.3-10.9 20.4-8.6 14-10.5 14.6-1.9 3-0.8 2-0.1 2 0.6 1.4 1.2 1 1.8 0.7 2.4 0.4 10 0.4 60.6-0.1 11-0.5 7-0.6 3-0.9 1.1-0.8 0.7-1 0.4-1.6-0.1-1.4-1.2-3.6-9.6-16-7.5-14-8.6-18-16.8-36.5-2-3-1-0.4zM566.8 172.5l-1 0.8-1.6 2.4-17.1 35.1-11.2 21-8.6 14-10.2 14-1.9 3-0.8 2-0.1 2 0.6 1.4 1.3 1.2 2 0.6 2.6 0.4 10.4 0.3 60-0.1 11-0.5 7-0.7 3-1 1.5-1.6 0.4-1.6-0.1-1.4-1.2-3.6-9.6-16-7.2-13.4-8.4-17.6-17.5-38-1.9-2.6zM697.8 172.5l-1 0.9-1.6 2.5-17.3 35.3-10.9 20.6-8.6 14-10.2 14-1.9 3-0.8 2-0.1 2 0.6 1.4 1.2 1.1 2 0.7 2.6 0.3 10 0.4 59.4-0.1 11-0.4 7.6-0.7 3.4-1 1.5-1.6 0.5-1.7-0.1-1.4-1.2-3.6-9.7-16-7.1-13.4-8.7-18-17.2-37.5-1.7-2.5-0.7-0.4z"/>
<path fill="#ff6400" d="M41.1 47.8l45.1 0.2 9 0.5 15 1.6 7.6 0.4 25-2.2 31.4-0.6 43.6 0.3 8.4 0.5 15 1.6 7.6 0.4 25-2.2 31.4-0.6 43.6 0.3 8.4 0.5 15 1.6 8 0.4 24.6-2.2 32-0.6 43 0.3 8.4 0.5 15.6 1.6 7.4 0.4 21.6-2.1 22.4-0.6 54 0.2 8.6 0.4 15.4 1.6 9 0.5 4.6-0.2 13.4-1.6 12.6-0.7 26-0.3 34.4 0.1 14 0.5 17 1.7 9 0.5 4-0.2 10.6-1.3 8.4-0.6 25.5-0.6 0.1 11.5-21 0.4-13 0.9-2.6 0.7-1.4 1-1 1.5-0.4 2 0.4 2.4 1.2 3 10.8 16.2 7 11.8 9 17 11 22.4 0 12.4-10.4-21.2-8.4-16-7.5-13-6.6-10-6.7-8.1-5.4-4.9-2.6-1.5-2.4-1-2.6-0.5-3-0.1-3 0.5-3.4 1.4-3.6 2-3.4 2.6-7.6 7.4-8.1 10.1-9.9 15.1-11.1 19.4-11.3 22-1.2 3-0.4 3.6 0.3 3.4 1 3 9.5 21 12.6 26.6 9.4 17.4 6.5 10 6.3 7.6 3 2.7 2.4 1.6 2.6 1.1 2.4 0.5 3-0.1 3-0.7 3-1.3 3-2 3.6-2.8 3.4-3.5 7.6-9.1 7.3-11 7.8-13.4 8.9-17 12-24.3 0 12.4-9 18.3-9 17.6-8 14.3-8.6 13.3-10.9 14.4-1.6 3-0.6 2.4 0.4 2 1.3 1.6 2 1 3 0.6 13 0.5 28 0.1 0 11.6-37.6-0.4-8.4-0.7-13.6-1.8-6.4-0.3-4 0.2-10.6 1.5-9 0.8-12 0.4-18 0.2-48-0.2-9-0.7-14.4-1.9-6.6-0.3-22.4 2.4-12 0.5-17 0.2-49.6-0.2-9-0.7-14.4-1.9-6.6-0.3-4 0.2-10 1.5-8.4 0.7-27 0.7-51-0.2-8.4-0.5-14.6-2-7.6-0.4-4 0.2-9.4 1.4-8 0.8-24.6 0.7-37.4 0-17-0.2-8.6-0.6-14.4-1.9-7.6-0.4-4 0.2-9.4 1.4-7.6 0.7-20.4 0.7-39.6 0.2-19-0.3-9-0.5-14.4-2-7.6-0.4-4.4 0.2-13.6 1.9-14 0.8-34 0.3-34-0.3 0-11.6 49.6 0.3 27.4-0.7 7.6-0.6 3.4-0.8 2-1.2 1.2-2.5 0-3-1.5-4-9.1-14.4-6.6-11.6-10-20.3-18-39.1-1.4-2.5-1.6-0.9-1.4 0.4-1.6 2-15.4 31.2-8.6 16.5-8.4 15-7.6 11.4 0-12.2 4.7-6.9 5.2-8.6 11.3-21 15.4-31.1 1.1-3.3 0.4-3.6-0.4-3.4-1.5-4-15.4-31.6-11.2-20-4.7-7.4-4.9-6.7 0-12.4 7.6 11 6.4 10.9 11 20.7 14.8 30.5 1.8 2.4 1.4 0.5 1.6-0.8 1.4-2.1 14.6-28.3 12-20.8 9.4-14.1 11.9-14.8 1.6-2.6 0.9-2.4-0.1-2.6-0.5-1-1-1-2.8-1-5-0.6-19-0.3-42 0.1-17 0.5-9 0.9 0-11.7 15.6-1zM110.2 74.7l-3 0.7-3.4 1.4-3.6 2.1-3.4 2.8-7.6 7.4-8 10.2-9.5 14.5-10.6 18.4-11.9 23-1.1 3-0.4 3 0.2 3 0.9 3.4 8.4 18.7 13.9 29.5 5.4 10.4 4.5 8 6.8 10.1 6 7 3 2.6 2.4 1.5 2.6 0.9 3 0.5 3-0.3 3.4-1.2 3-1.6 3.6-2.6 3.5-3.2 3.9-4.4 8-10.6 9.4-15.1 10.7-20 14.5-29.5 1.1-3.1 0.5-3.4-0.2-3-1-3.6-10.8-22.4-11.8-22.6-5.3-8.9-4.5-7.1-7-9.3-3.6-3.8-3-2.6-3-2-3-1.2-3-0.6zM144.8 59.7l-11 0.7-2.6 0.4-2 0.8-1.3 1.2-0.8 1.4-0.2 2 0.5 2.6 2 4 10.4 15.3 8.4 14.7 9.6 18.3 13.6 28.1 1.5 2 0.9 0.5 1-0.1 1.1-0.8 1.3-2 15-29 12-20.7 9-13.4 13-16.5 1.5-3.4-0.1-2.6-0.9-1.4-1.9-1.2-3-0.7-4.6-0.3-43-0.3zM241.8 74.7l-3 0.6-3.6 1.3-3.4 2.1-3.6 2.6-7.4 7.4-8 10-9.7 14.5-10.9 19-11.6 22.6-1.4 3.4-0.4 3 0.1 2.6 0.5 2.4 2.7 6.6 18.1 39 6.3 12.4 5.3 9.4 6.6 10.2 6.4 7.4 3 2.6 2.4 1.5 2.6 1 3 0.5 3-0.3 3.4-1.1 3-1.7 3.6-2.5 3.4-3.2 4-4.4 8-10.5 9.2-14.9 11-20.4 14.5-29.6 1.2-3.4 0.4-3-0.3-3.4-1-3.2-10.2-21.4-12-23-9.8-16.1-7-9.3-3.4-3.9-3-2.7-3-2-3-1.4-3-0.7zM275.8 59.7l-11 0.7-2.6 0.5-2 0.7-1.2 1.2-0.8 1.4-0.2 2 0.5 2.6 2 4 10.3 15.2 8.4 14.6 10 19.3 13.3 27.3 1.7 2.2 1.6 0.2 1.2-0.8 1.2-1.8 15-29.1 12-20.7 9-13.3 13.1-16.7 1.5-3.4-0.1-2.6-0.9-1.5-2-1.2-2.6-0.6-4.4-0.3-43.6-0.3zM372.8 74.7l-3 0.6-3.6 1.4-3.4 2-3.6 2.7-7.4 7.4-8 10-9.6 14.4-10.6 18.6-11.9 23-1.4 3.4-0.4 3 0.2 3 0.7 2.8 5.8 13.2 15.4 33 5.6 11 5.4 9.6 6.5 10 6.3 7.3 3 2.6 2.4 1.6 2.6 1 3 0.5 3-0.3 3.4-1.1 3-1.6 3.6-2.6 3.4-3.1 4-4.3 8-10.6 9.3-15 11-20.4 14.5-29.6 1.2-3.4 0.4-3-0.3-3.6-1.1-3.3-9.9-20.7-12-23-5.2-9-4.9-7.6-7-9.3-3.4-3.9-3-2.7-3-2-3-1.3-3-0.7zM406.8 59.7l-10.6 0.7-4.4 1-1.6 1.1-0.9 1.7-0.2 2 0.5 2.6 2 4 10.2 15 8.4 14.7 10 19.2 13.4 27.5 1.6 2.2 1.6 0.3 1.3-0.9 1.1-1.6 15-29.1 12-20.7 9-13.4 13.2-16.8 1.5-3.4-0.1-2.6-1-1.6-2-1.1-2.6-0.6-4.4-0.3-43-0.3zM503.8 74.7l-3 0.6-3.6 1.4-3.4 2.1-3.6 2.7-7.4 7.4-8 10.1-9.8 14.8-10.9 19-11.3 22-1.4 3.4-0.4 3 0.1 2.6 0.5 2.4 2.9 7 18.1 39 5.9 11.6 5.5 10 6.8 10.1 3.4 4.4 3 3.2 2.6 2.1 2.5 1.6 2.5 1 3 0.6 3-0.3 3.4-1.1 3-1.6 3.6-2.5 3.4-3.1 4-4.3 8-10.5 9.4-15.2 10.7-20 14.8-30 1.1-3.2 0.5-3.2-0.3-3.6-1.1-3.4-10.4-21.6-12-23-9.7-15.7-7-9.4-3.4-3.8-3-2.6-3-2.1-3-1.3-3-0.6zM537.8 59.7l-11 0.8-4 1-1.6 1.2-0.8 1.5-0.2 2 0.5 2.5 2 4.1 10.1 14.9 8.4 14.6 10 19.2 13.6 27.9 1.4 1.9 1 0.4 1-0.2 1-0.8 1.4-1.9 14.6-28.5 12-20.8 9-13.4 13.3-16.9 1.5-3.4-0.1-2.6-1.1-1.7-2-1-2.6-0.6-4.4-0.3-43-0.3zM634.8 74.7l-3 0.7-3.6 1.4-3.4 2.1-3.6 2.7-7.4 7.4-8 10.1-9.7 14.7-10.6 18.4-11.7 22.8-1.3 3.2-0.4 3 0.2 3 0.7 3 5.6 12.6 15.9 34 5.6 11 5.1 9 6.9 10.4 6.1 7.2 3 2.5 2.6 1.5 2.4 1 3.1 0.4 2.9-0.3 3-1 3.6-1.9 3.4-2.6 3.6-3.2 4-4.4 7.6-10.2 9-14.4 11-20.6 14.8-30 1.1-3 0.5-3.4-0.3-3.6-1.1-3.4-10.4-21.6-12-23-9.8-15.9-7-9.3-3.4-3.8-3-2.6-3-2-3-1.3-3-0.6zM668.8 59.7l-11 0.8-4 1-1.5 1.3-0.8 1.4-0.2 2 0.5 2.6 2 4 10 14.7 8.4 14.6 10.1 19.2 13.5 27.9 1.5 2 0.9 0.5 1-0.1 1.1-0.8 1.4-2 14.5-28.3 12-20.8 9-13.4 13.4-17.1 1.5-3.4-0.1-2.6-0.9-1.4-1.9-1.2-3-0.7-4.4-0.3-43-0.3zM173.2 171.5l-1.3 1.3-1.2 2-17.9 36.4-11.6 21.2-8.4 13.5-11 14.3-1.9 3-1 2.6-0.2 2.4 0.6 1.6 1.7 1.4 1.8 0.7 3 0.5 10.4 0.5 60.6-0.1 11.4-0.5 8.6-0.7 3.4-1.1 1.8-1.7 0.6-2-0.1-2-1.5-4.6-9.8-15.4-7.4-13.7-9-18.5-17.7-38.4-1.9-2.4-1-0.5zM304.2 171.6l-1.2 1.2-1.2 2.1-17.6 35.5-11.4 21.3-9 14.4-10.9 14.1-1.9 3-1 2.6-0.2 2.4 1 2 1.4 1.1 4.6 1.1 11 0.5 60.4-0.1 11.6-0.5 8.4-0.8 3-0.9 1.9-1.8 0.6-2-0.1-2-1.5-4.6-9.9-15.6-7.4-13.7-9-18.5-17.6-38.2-2-2.5-1-0.4zM435.2 171.6l-1 1-1.3 2.2-17.7 35.8-11.4 21.3-9 14.3-10.8 14-1.9 3-1 2.6-0.2 2.4 0.9 1.9 1.4 1.2 2 0.7 2.5 0.4 11.1 0.5 60-0.1 12-0.5 8.4-0.8 3-0.9 1.3-0.8 0.7-1 0.6-2 0-2-1.6-4.6-10-15.7-7.4-13.8-8.6-17.5-18-39-1-1.6-1-1-1-0.3zM566.2 171.7l-1 1-1.2 2.1-17.8 36-11.4 21.3-9 14.3-10.7 13.8-1.9 3-1 2.6-0.2 2.4 0.8 1.8 1.4 1.2 2 0.8 2.6 0.4 10.4 0.5 60.6-0.1 12-0.5 8.4-0.8 3-0.8 1.4-0.9 0.7-1 0.6-2-0.1-2-1.5-4.6-10.1-15.9-7.4-13.8-8.6-17.5-18-39-1-1.5-1-0.9-1-0.3zM697.8 171.5l-1.5 1.3-1.2 2-17.9 36.2-11.4 21.2-8.6 13.6-11 14.4-1.9 3-1 2.6-0.2 2.4 0.7 1.6 1.6 1.4 1.8 0.7 3 0.5 10.6 0.5 60-0.1 12-0.5 8.4-0.7 3.6-1.1 1.6-1.7 0.6-2-0.1-2-1.5-4.6-9.6-15.2-7.6-13.7-9-18.5-18-38.9-1.6-2.1-0.8-0.4z"/>
<path fill="#ff5500" d="M23.7 51.8l59.1 0 15.4 0.7 13.6 0.1 14 1.3 13-1.5 11.4-0.5 57.6-0.2 22 0.8 12.4 0.1 14.6 1.3 12.4-1.5 11.6-0.5 55-0.3 12 0.2 13 0.7 12.4 0.1 14.6 1.3 13-1.5 11-0.5 53-0.3 13.4 0.2 14 0.7 12 0.1 14.6 1.3 12.4-1.5 11-0.5 52-0.3 15 0.2 14 0.7 12 0.1 14.6 1.3 13-1.5 10.4-0.5 51-0.3 15.6 0.2 14.4 0.7 12-0 14.6 1.4 16-1.7 25-0.6 0 3.9-23.6 0.4-10 0.6-3.4 0.5-2 0.9-1.6 1.5-0.9 2.4-0.3 2.4 0.4 3.6 1.6 4 1.9 3 8.3 11.3 6 9.5 8 14.2 9.6 18.5 6 12.4 0 8.2-10.8-22.1-8.6-16.6-7.5-13-7-10.4-5.7-7-2.4-2.5-2.6-1.9-2.4-1.3-3-1.1-3-0.5-3 0.1-3 0.5-3.6 1.3-3.4 2-3.6 2.7-7.4 7.6-8.3 10.5-6 9-5.5 9-12.9 23.6-8.2 16.4-1 3.6-0.3 3.4 0.7 5 2.2 5.6 18.6 40.4 6 12 5.4 10 7 11 5.7 7.3 2.6 2.2 2.5 1.6 2.5 1.1 3 0.6 3-0 3-0.5 3-1.2 3-1.7 3-2.3 3.4-3.4 7.7-9.1 7.1-10.6 8.5-14.4 9.1-17.6 12.2-24.8-0 8.5-17 33.9-7.6 13.5-7.4 12-6 8.3-10.4 12.6-1.6 3.6-0.5 3 0.3 2.4 1.2 2.2 2 1.6 2 0.7 4.4 0.6 8 0.4 32.6 0.2-0 3.8-36-0.3-13.6-1-12-0.3-12-1.2-10 1.5-8.4 0.7-28.6 0.6-45.4-0.3-14.6-1-12-0.3-12-1.2-2.4 0.1-7.6 1.4-8 0.7-27 0.6-47.4-0.3-15-1-11.5-0.3-12.1-1.2-2.4 0.1-7.6 1.4-7.4 0.7-25.6 0.6-49-0.2-15.4-1.1-11.6-0.3-12.4-1.2-8.6 1.3-7 0.8-24 0.6-52-0.1-15.4-1.1-11.6-0.3-12.4-1.2-14 1.9-20.6 0.8-56.4-0.1-16-1.1-12-0.3-12-1.2-13 1.9-12 0.6-35 0.3-32.6-0.3-0-3.8 18.6 0.3 36.4-0.1 16-0.3 16.6-0.9 2.4-0.7 1.6-1.1 1.3-2 0.7-3-0.2-4.6-1.6-4.4-10.2-15.2-6.6-11.2-10.4-20.9-17.8-38.3-1.8-2.8-1.4-1.1-1-0.1-1.4 0.6-2 2.4-14.6 29.8-9 17.2-8 14-7.6 11.3-0-7.4 5.2-7.9 5.1-8.4 12.5-23.6 14.3-29.4 1.2-3.6 0.4-4-0.4-4-1.1-3.4-15-31-12-22-4.9-8-5.3-7.5-0-6.6 8.6 12.2 8.4 14.5 9.6 18.1 13 26.7 1.6 2 1.8 0.6 1.6-0.6 1.5-2 15.5-29.5 12-20.4 5-7.5 5-6.8 12.9-15.2 2-3.6 0.9-3-0.2-3.4-0.6-1.4-1-1.2-3-1.6-4-0.7-14.6-0.4-33-0.1-23.4 0.3-19.6 0.9-0-3.4 9.2-1zM109.2 72.7l-3.4 0.9-3 1.3-3.6 2.2-3 2.4-4 3.9-3.8 4.4-8.4 11-10.5 16.4-11.6 21-9.3 18.6-1 3-0.4 3.4 0.4 5 2 5.6 19 41.4 6 12 5.4 10 7 11 3.4 4.6 2.8 3.2 2.6 2.1 2.4 1.5 3 1.1 3 0.4 3-0.2 3.6-0.9 3-1.5 3.4-2.4 4-3.6 3.9-4.3 7.9-10.4 10-16.6 12.1-23 13.3-27.4 1.2-3.6 0.3-3.4-0.2-4-1-3.6-9.7-20.4-13.5-26-5.5-9.6-5.1-8-6.8-9-2.9-3-3-2.4-3-1.7-3-1.1-3.4-0.5zM148.8 55.7l-16.6 0.8-3 0.5-1.4 0.5-2 1.9-1 2.4-0.3 3 0.4 3 1.1 3 1.4 2.4 10.8 15.2 9.6 15.9 10 19 13.1 26.9 1.9 2.2 1 0.4 0.9 0 1.5-1 1.2-1.6 15.4-29.4 6.4-11.4 6.6-10.5 9-12.8 11.4-13.3 2.6-3.6 1.7-4 0.3-2-0.2-2-0.9-2-1.9-1.8-2.6-1-4-0.5-25.4-0.5zM240.2 72.7l-3.4 0.9-3 1.4-3 1.8-3.6 2.8-7.7 8.2-8.1 10.4-10.8 17-12.1 22-8.8 17.6-1 3-0.5 3.8 0.6 5.2 2.1 5.4 19 41.6 6.5 13 5.6 10 7.2 10.9 5.6 6.6 2.5 2.1 2.5 1.4 3 1 3 0.3 3-0.3 3.4-1 3.6-1.8 3-2.2 4-3.8 3.8-4.2 7.8-10.6 10-16.4 12.1-23 13-27 1.2-3.6 0.3-3.4-0.2-4-1-3.6-9.7-20.4-13.2-25.6-5.5-9.4-5.4-8.6-6.8-9-3-3.1-3-2.4-3-1.7-3-1-3.4-0.5zM280.2 55.7l-16.4 0.8-4.6 0.8-2 1.6-1.2 2.3-0.4 3 0.4 3.6 0.9 2.4 1.6 3 10.7 15 9 15 10 18.9 13.8 28.1 1.8 2.2 1 0.4 1 0 1.4-0.9 1.3-1.7 16.3-31 6-10.5 6.4-10.5 8.6-12 11.5-13.4 2.6-3.6 1.7-4 0.3-1.9-0.2-2.1-0.9-2.1-2-1.8-2.6-0.9-4-0.5-25-0.5zM371.8 72.7l-3.6 0.8-3 1.3-3 1.7-3.4 2.8-3.6 3.3-4.2 4.6-8.1 10.6-10.9 17-11.4 20.4-9.6 19-1.2 3.6-0.4 3.4 0.4 5 1.8 5 19.4 42.6 6 12 5.5 10 7 11 3.5 4.4 2.8 3 2.4 2.1 2.6 1.5 3 0.9 3 0.4 3-0.2 3.4-1 3-1.5 3.6-2.5 3.4-3.2 4.1-4.4 8.2-11.1 10-16.4 12.1-23 12.8-26.6 1.2-3.4 0.5-4-0.2-4-1-3.6-9.5-20-13.4-26-5.5-9.4-5.1-8-7.1-9.6-2.8-3-2.7-2.2-3-1.8-3-1.1-3.6-0.6zM411.2 55.7l-16.4 0.8-3 0.4-1.6 0.5-2 1.6-1.1 2.2-0.4 3 0.4 3.6 0.9 2.4 1.6 3 11.2 15.6 9 15.1 10 19 13.3 27.3 1.7 2.1 1 0.5 1.1 0 1.6-1 1.4-2 15.3-29.5 6-10.6 6.6-10.5 9.4-13.5 11.2-12.9 2.6-3.6 1.7-4 0.3-2-0.2-2-1-2.3-2-1.6-2.6-0.9-4-0.5-25.4-0.5zM502.8 72.7l-3.6 0.8-3 1.3-3 1.8-3.4 2.8-7.7 7.8-8.1 10.6-10 15.4-12 21.6-9.9 19.4-1.2 3.6-0.4 3.4 0.5 5.6 2.1 5.4 19 41.6 6 12 5.5 10 7.4 11.4 5.8 7 2.4 2 2.6 1.5 3 1 3 0.4 3-0.2 3.4-1 3-1.5 3.6-2.5 3.4-3.2 4.2-4.5 8.2-11 5.4-8.4 4.9-8.6 11.5-22 13.1-27 1.3-3.4 0.5-4-0.3-4-1-3.6-9.5-20-13.1-25.4-5.5-9.6-5.4-8.4-7.1-9.6-2.8-3-2.8-2.3-3-1.8-3-1-3.6-0.6zM542.2 55.7l-16.4 0.8-3 0.4-1.6 0.5-2 1.7-1 2.1-0.4 3 0.4 3.6 0.9 2.4 1.6 3 11.1 15.5 9 15 10 19 13.4 27.5 1 1.5 1 0.8 1 0.3 1-0.1 1.4-0.9 1.4-2 15.2-29.3 6.6-11.4 6-9.8 9.4-13.5 11.3-13 2.6-3.6 1.7-4 0.3-2-0.2-2-0.8-2-1.9-1.7-2.4-1-4.6-0.6-26-0.5zM633.8 72.7l-3.6 0.9-3 1.3-3.4 2.1-3 2.4-7.6 7.8-8.1 10.6-10.6 16.4-11.9 21.6-9.6 19-1 3-0.4 3.4 0.4 5 2 5.6 19 41.4 6.5 13 5.5 10 7.1 11 5.7 6.9 2.4 2.1 2.6 1.4 3 1.1 3 0.4 3-0.2 3.4-1 3-1.4 3.6-2.5 3.4-3.1 4-4.4 8.2-10.7 5.1-8 4.9-8.6 12.1-23 13.3-27.4 1.2-3.6 0.3-3.4-0.2-4-1-3.6-10.2-21.4-13-25-5.5-9.6-5.4-8.4-6.9-9-3-3-2.9-2.3-3-1.6-3-1-3-0.4zM673.2 55.7l-16.4 0.8-3 0.4-1.6 0.6-1.9 1.7-1.1 2.3-0.3 2.7 0.4 3.6 1.1 3 1.4 2.4 10.4 14.6 9.6 15.8 10 18.9 13.5 27.7 1.9 2.3 1.1 0.3 0.9-0.1 1.6-1 1.3-1.9 15.7-30.1 6-10.5 6.4-10.5 9.6-13.4 10.8-12.5 2.6-3.6 1.7-4 0.3-2-0.2-2-0.8-2-2-1.8-2.4-0.9-4-0.6-25-0.5zM173.8 170.2l-1.6 0.7-1.7 2.3-18.7 37.8-12 21.7-9 13.6-11.1 13.5-2.6 4-1.2 3.4-0 3 1.2 3 2.1 1.8 4.6 1.1 12 0.6 34.4 0.2 27.6-0.3 21.4-1.1 2-0.5 1-0.6 1.7-2.2 0.9-2.4 0.2-3.6-0.6-3-1.3-3.4-9.9-14.5-6-10.2-11-21.8-18.6-40.1-1.8-2.4-1-0.5zM305.2 170.2l-1 0.2-1 0.6-1.6 2.2-18.8 38-6.6 12.1-6 10.4-8.4 12.8-11 13.3-2.3 3.4-1.4 3.6-0.1 3.4 1.2 3 2 1.8 2 0.7 2.6 0.4 12 0.6 34.4 0.2 27.6-0.3 22-1.1 2.4-1 1.8-2.3 0.9-2.4 0.2-3-0.6-3.6-1.1-3-2-3.4-8.2-11.7-6-10.2-10.4-20.7-18.9-40.4-1.7-2.6-1-0.7zM436.2 170.2l-1 0.2-1 0.7-1.7 2.7-18.7 37.6-6.6 12.1-6 10.3-8.4 12.8-10.9 13.2-2.3 3.4-1.4 3.6-0.1 3.4 1.1 3 2 1.7 2 0.8 2.6 0.4 12 0.6 34 0.2 28-0.3 22-1.1 2.4-1 2-2.3 0.8-2.4 0.2-3-0.6-3.6-1.1-3-2-3.4-7.7-11-6.6-11.1-10.4-20.7-18.8-40.2-1.8-2.7-1-0.7zM567.2 170.2l-1 0.3-1 0.7-1.6 2.6-18.4 36.8-6.4 12.2-6 10.4-9 13.5-10.8 13.1-2.3 3.4-1.4 3.6-0.1 3.4 1 2.8 2 1.9 2 0.8 2.6 0.4 11.4 0.6 33 0.2 29-0.3 22.6-1.1 2.4-0.9 2-2.3 0.9-2.5 0.2-3-0.4-3-1.3-3.6-2-3.4-7.8-11.2-6-10.2-11-21.6-18.7-40-1.9-2.8-1-0.6zM698.2 170.2l-1.4 0.7-1.9 2.3-19.1 38.6-12 21.5-8.6 12.9-11.1 13.6-2.6 4-1.2 3.4 0.1 3.6 1.1 2.4 2.3 1.9 2.4 0.8 2.6 0.3 13.4 0.6 34.6 0.1 25-0.3 22-1.1 2.4-0.8 2-2.2 1-2.7 0.2-3.6-0.6-3-1.3-3.4-9.3-13.6-6.4-11-10.6-20.6-19.2-41.4-1.8-2.3-1-0.6z"/>
<path fill="#ff4700" d="M111.7 55.8l2.5 0.1 2.6 0.7 2 1.1 1 1.1 1 2.4 0.4 4-0.2 3-0.8 1.2-2 0.5-6.4-0.4-6.6 0.2-1.4-0.4-0.5-0.5-0.1-2 0.7-5.1 1.2-3.5 1.1-1.1 1.6-0.7zM636.2 55.8l2.6 0.2 2.4 0.6 2 1.1 1 1.1 1 2.4 0.3 3.6 0 3-0.7 1.6-2 0.5-6.6-0.4-6.4 0.2-1.6-0.3-0.4-0.6-0.3-1.6 0.7-5 0.6-2.4 0.7-1.6 1.3-1.1 1.4-0.8zM767.2 55.8l2.6 0.1 2.4 0.7 2 1.1 1.1 1.1 1 2.4 0.4 4-0.2 3-0.7 1.2-2 0.5-6.6-0.4-6.4 0.2-1.6-0.4-0.4-0.5-0.1-2 0.7-5 1.2-3.6 1.2-1.1 1.4-0.7zM239.2 56.2l3-0.4 3.6 0.2 2.5 0.8 2.2 1.4 1.1 2 0.5 3 0.1 4.2-0.6 1.8-0.8 0.5-1.6 0.2-6-0.3-6.4 0.1-2-0.5-0.5-1-0.1-1 1.3-7.4 1.3-2.2zM370.3 56.2l2.9-0.4 3.6 0.2 3 0.9 1.8 1.3 1.1 2 0.5 3 0.2 4-0.7 2-0.9 0.5-1.6 0.2-6-0.4-6.4 0.2-2-0.6-0.4-0.9-0-1.4 1.2-7 1.2-2.1zM501.4 56.2l2.8-0.4 3.6 0.2 3 0.9 1.9 1.3 1.1 2 0.5 3 0.2 4-0.3 1.3-0.4 0.8-2 0.6-6.6-0.4-6.4 0.2-1.8-0.5-0.5-1-0.1-1 1.3-7.4 1.1-2zM46.9 152.8l0.3-0.2 0.2 0.6-0.8 7.6 0.1 8.4-0.5 0.5-2.4-0.7-1.6-0-3 1.2-0.4-0.1 0.7-7.9-0.3-8.7 0.6-0.2 2 0.7 2 0.1zM178 152.8l0.4 0 0 0.4-0.7 7 0.1 9.3-0.6 0.2-2-0.6-1.4-0.2-1.6 0.4-2.1 0.9-0.2-0.4 0.7-8.6-0.3-7.4 0.5-0.5 2.4 0.8 1.6-0zM309.1 152.8l0.4 0 0 0.4-0.7 7 0.2 8.6-0.2 0.8-4-0.6-1.6 0.3-2 1-0.2-0.5 0.7-8.6-0.3-7.4 0.4-0.5 2.4 0.7 1.6 0.1 1.4-0.4zM440.2 152.8l0.4 0 0.1 0.4-0.8 7 0.1 9-0.2 0.5-2.6-0.7-1.4-0-3.6 1.3-0.1-1.1 0.7-7.4-0.3-8 0.3-0.5 2.4 0.7 2-0zM571.2 152.8l0.6-0.1-0 0.5-0.8 7 0.1 9-0.3 0.5-2.6-0.7-1.4-0-3.6 1.3 0.7-8.1-0.1-8.8 4 0.7 1.6-0.3zM702.4 152.8l0.4-0.2 0.1 0.6-0.8 7.6 0.1 8.4-0.4 0.5-2.6-0.7-1.4-0-3 1.2-0.6-0.1 0.8-7.9-0.2-8.7 0.4-0.2 2 0.7 2 0.1zM98.8 262.8l2-0.4 8.4 0.1 1.6 0.2 0.9 0.5 0.5 2-0.4 4.1-0.7 2.9-0.9 1.6-2 1.3-3 0.5-3.5-0.5-2.5-1.3-1.4-2.4-0.5-3.6 0.3-3.6 0.5-1zM229.9 262.8l1.9-0.4 8.4 0.1 1.6 0.1 1 0.6 0.5 1.6-0.4 4.4-0.7 3-1 1.7-2.3 1.3-3.1 0.4-3-0.5-2.6-1.4-0.8-0.9-0.6-1.6-0.4-3.4 0.3-3.6 0.5-1zM361 262.8l2.2-0.4 8 0.1 1.6 0.1 1 0.5 0.5 1.7-0.3 4.4-0.7 3-1.1 1.8-2.2 1.2-3.2 0.4-3-0.5-2.6-1.5-1.3-2.4-0.4-3.4 0.3-3.6 0.4-0.9zM492.1 262.8l2.1-0.4 8.6 0.1 1.4 0.2 0.8 0.5 0.5 2-0.6 5-0.7 2.5-1 1.4-2.1 1.1-3.3 0.4-3-0.6-2.6-1.5-1.2-2.3-0.4-4 0.3-3 0.5-1zM623.2 262.8l2-0.4 8.6 0.1 1.4 0.2 0.9 0.5 0.5 2-0.6 5-0.7 2.6-1 1.4-2.5 1.2-3 0.2-3.6-0.8-2-1.4-1.1-2.2-0.4-4 0.3-3 0.5-1zM754.3 262.8l1.9-0.4 8.6 0.1 1.4 0.2 1 0.5 0.5 2-0.5 4.1-0.6 2.9-0.8 1.6-2 1.3-3 0.5-3.6-0.5-2.5-1.3-1.5-2.4-0.4-3.6 0.3-3.6 0.5-1z"/>
<path fill="#ff3600" d="M42.1 155.8l2.7 0.2 0.4 0.5 0.5 1.3-0.2 7.4-0.5 1.6-1.2 0.5-2.6-0.2-0.4-0.5-0.4-1.4 0.1-7.4 0.6-1.6zM173.2 155.8l2.6 0.1 0.7 0.9 0.3 1-0.1 7.4-0.6 1.6-1.3 0.5-1.6 0-1-0.3-0.7-1.8 0.1-7.4 0.6-1.6zM304.3 155.8l2.5 0.1 0.8 0.9 0.3 1-0.1 7.5-0.6 1.5-1.4 0.5-1.6 0-1-0.4-0.6-1.7 0-7.4 0.6-1.5zM435.5 155.8l1.7-0.1 1 0.4 0.8 1.7-0.1 7.4-0.6 1.6-1.1 0.5-2.4-0.1-0.6-0.4-0.5-1.6 0.1-7.5 0.4-1.3zM566.6 155.8l1.6-0.1 1 0.4 0.9 1.7-0.2 7.4-0.5 1.6-1.2 0.5-2.4-0.2-0.6-0.4-0.5-1.5 0.2-7.4 0.6-1.6zM697.6 155.8l2.6 0.2 0.6 0.5 0.4 1.3-0.2 7.4-0.5 1.6-1.3 0.5-2.4-0.2-0.6-0.5-0.3-1.4 0.1-7.4 0.6-1.6z"/>
<path fill="#ff2400" d="M42.1 158.2l0.7-0.3 1 0.2 0.5 0.7 0.4 1.4-0.2 3.6-0.6 1-0.7 0.4-1.2-0.4-0.6-1.6-0.1-3zM173.2 158.2l0.6-0.3 1 0.1 0.6 0.8 0.4 1.1-0.2 3.9-0.6 1-0.8 0.4-1-0.3-0.7-1.7-0.1-3zM304.3 158.2l0.9-0.4 0.9 0.4 0.8 2-0.2 3.6-0.6 1-0.9 0.4-1-0.4-0.7-2 0.1-3zM435.4 158.2l0.8-0.3 1 0.3 0.8 2-0.2 3.6-0.6 1-1 0.4-1-0.5-0.6-1.9 0.1-3zM566.5 158.2l0.7-0.3 1 0.2 0.8 1.7 0 3.4-0.3 1-0.9 0.9-0.6 0.1-0.8-0.4-0.6-1.5-0-3.2zM697.6 158.2l0.6-0.3 1 0.2 0.6 0.7 0.4 1.4-0.2 3.6-0.6 1-0.6 0.4-1.3-0.4-0.6-1.6-0.1-3z"/>
</svg></div>
<div class="a" style="left:148px;top:136px;width:822px;height:331px;border:1px solid #b3b3b3;border-top:2px solid #a8a8a8;border-bottom-color:#a0a0a0"></div>
<svg class="a" style="left:0;top:0" width="1024" height="500" viewBox="0 0 1024 500" shape-rendering="crispEdges">
 <path d="M969.5 138V466" stroke="#b08a5a" stroke-width="1" stroke-dasharray="1 2" fill="none"/>
</svg>
<svg class="a" style="left:0;top:0" width="1024" height="500" viewBox="0 0 1024 500">
 <path d="M547.5 137.5H567.5L558.5 148.5Z" fill="#9b9b9b"/>
 <path d="M243 204.7L254.5 209.3L243 213.9ZM280 194.5L268.3 199.1L280 203.7ZM230 402.5L241.6 407.1L230 411.7ZM267.4 392.9L255.8 397.5L267.4 402.1Z" fill="#fff"/>
 <path d="M963 488.8V477L968.5 469.3L974 477V488.8Z" fill="#e78f2d"/>
 <path d="M971.8 301.7L984.8 294.5V308.9Z" fill="#dccb2e"/>
 <text x="966" y="485.8" font-family="Liberation Sans,sans-serif" font-size="10" fill="#1a1206">1</text>
</svg>
<div class="t" style="left:480px;top:138px;font-size:12.3px;font-style:italic;color:#7b7b7b;letter-spacing:-0.1px">24.07742 ns</div>
<div class="lbl" style="left:181px;top:196px;width:59px;height:35px"><b>1 Noise</b><i>224 mV</i></div>
<div class="lbl" style="left:292px;top:186px;width:59px;height:35px"><b>1 Level</b><i>248 mV</i></div>
<div class="lbl" style="left:168px;top:387px;width:59px;height:35px"><b>0 Level</b><i>-260 mV</i></div>
<div class="lbl" style="left:280px;top:376px;width:59px;height:35px"><b>0 Noise</b><i>-234 mV</i></div>
<!-- signals legend -->
<div class="a" style="left:845px;top:150px;width:116px;height:38px;border:1px solid #8e8e8e;background:rgba(0,0,0,.78)"></div>
<div class="t" style="left:849.5px;top:156px;font-size:12.3px;color:#fff;letter-spacing:-0.5px">Signals</div>
<div class="t" style="left:849.5px;top:173.5px;font-size:11.8px;color:#fff;letter-spacing:-0.55px">Channel 3A</div>
<div class="a" style="left:916px;top:177px;width:41px;height:5px;background:#c9bd5e"></div>
<svg class="a" style="left:0;top:0" width="1024" height="200" viewBox="0 0 1024 200"><path d="M943.5 160.8L949 156L954.5 160.8M943.5 166L949 161.2L954.5 166" fill="none" stroke="#c4c4c4" stroke-width="1.3"/></svg>
<div class="a" style="left:893px;top:243px;width:68px;height:17px;background:rgba(0,0,0,.62)"></div>
<div class="t" style="left:895px;top:245px;font-size:12.3px;font-style:italic;color:#d99555;letter-spacing:-0.1px">? 78.41 mV</div>
<div class="t" style="left:890px;top:446.5px;font-size:12.3px;font-style:italic;color:#d99c5a;letter-spacing:-0.1px">24.12952 ns</div>
<div class="t" style="left:988.5px;top:294px;font-size:15.5px;color:#dccb2e;letter-spacing:-0.6px">3A</div>


<!-- results panel -->
<div class="a" style="left:133px;top:496px;width:890px;height:199px;background:#222;border:1px solid #7e7e7e;border-radius:5px"></div>
<div class="a" style="left:252px;top:496px;width:652px;height:32px;background:#0a0a0a;border-left:1px solid #858585;border-bottom:1px solid #858585;border-top:1px solid #4e4e4e"></div>
<div class="a" style="left:904px;top:496px;width:120px;height:7px;background:#050505"></div>
<div class="a" style="left:904px;top:497px;width:119px;height:31px;background:#272727;border:1px solid #858585;border-bottom:none;border-radius:5px 5px 0 0"></div>
<div class="a" style="left:904px;top:527px;width:119px;height:1px;background:#858585"></div>
<div class="t" style="left:158px;top:506px;font-size:14.5px;color:#fff;letter-spacing:-0.6px">Results</div>
<svg class="a" style="left:229px;top:501px" width="22" height="22" viewBox="0 0 22 22"><circle cx="11" cy="10.9" r="9.8" fill="#1c1c1c" stroke="#8a8a8a" stroke-width="1.1"/><path d="M7.3 5.5L16.8 10.9L7.3 16.3Z" fill="#a9a9a9"/></svg>
<div class="t" style="left:951.5px;top:506px;font-size:14.5px;color:#a3a3a3;letter-spacing:-0.55px">Markers</div>
<svg class="a" style="left:563px;top:496px" width="62" height="31" viewBox="0 0 62 31">
 <circle cx="15.1" cy="15.2" r="13.5" fill="#1d1d1d" stroke="#787878" stroke-width="1.1"/>
 <path d="M9 10.5L15.1 15.5L21.2 10.5M9 15L15.1 20L21.2 15" fill="none" stroke="#8a8a8a" stroke-width="1.3"/>
 <path d="M45 8.4H53.2V17H55.5V18.2H49.8V22.5H48.4V18.2H42.8V17H45Z" fill="#9a9a9a"/>
</svg>
<!-- table -->
<div class="a" style="left:137px;top:532px;width:882px;height:121px;background:#fff"></div>
<div class="a" style="left:137px;top:532px;width:856px;height:26px;background:linear-gradient(#f4f4f4,#e2e2e2 45%,#c9c9c9);border-bottom:1px solid #a8a8a8;border-top:1px solid #fafafa">
 <div class="th" style="left:0;width:213px;text-align:left;padding-left:4.5px">Measurement</div>
 <div class="th" style="left:213px;width:95px">Current</div>
 <div class="th" style="left:308px;width:95px">Minimum</div>
 <div class="th" style="left:403px;width:95px">Maximum</div>
 <div class="th" style="left:498px;width:95px">Count</div>
</div>
<div class="a" style="left:137px;top:558px;width:856px;height:23px;background:#ecf9e8;border-radius:0 4px 4px 0"></div>
<div class="a" style="left:137px;top:606px;width:857px;height:24px;background:#ecf9e8;border:1px solid #3b93c4;border-radius:4px"></div>
<div class="row" style="left:137px;top:558px"><span class="nm">Bit Rate</span><div class="bdg">3A</div><span class="v" style="right:552.5px">60.00 Gb/s</span><span class="v" style="right:457.3px">60.00 Gb/s</span><span class="v" style="right:362.2px">60.00 Gb/s</span><span class="v" style="right:270.7px">449</span></div>
<div class="row" style="left:137px;top:582px"><span class="nm">Eye Ampl</span><div class="bdg">3A</div><span class="v" style="right:552.5px">507.0 mV</span><span class="v" style="right:457.3px">506.6 mV</span><span class="v" style="right:362.2px">510.0 mV</span><span class="v" style="right:270.7px">449</span></div>
<div class="row" style="left:137px;top:606px"><span class="nm">SNR</span><div class="bdg">3A</div><span class="v" style="right:552.5px">10.13</span><span class="v" style="right:457.3px">10.04</span><span class="v" style="right:362.2px">10.51</span><span class="v" style="right:270.7px">449</span></div>
<!-- scrollbar -->
<div class="a" style="left:994.5px;top:533px;width:23.5px;height:118px;border-radius:4px;background:linear-gradient(90deg,#d4d4d4,#ececec 40%,#e4e4e4);border:1px solid #bdbdbd"></div>
<div class="a" style="left:996.5px;top:575px;width:19.5px;height:53px;border-radius:4px;background:linear-gradient(90deg,#9e9e9e,#b9b9b9 45%,#a4a4a4)"></div>
<svg class="a" style="left:994px;top:533px" width="24" height="118" viewBox="0 0 24 118"><path d="M4.5 16.5H19.5L12 8.5ZM4.5 101.5H19.5L12 110Z" fill="#8f8f8f"/></svg>
<!-- buttons -->
<div class="gbtn" style="left:138px;top:658px;width:29px"></div>
<svg class="a" style="left:143px;top:662px" width="19" height="19" viewBox="0 0 19 19"><path d="M6 2.5L9.8 7.8L13.8 1.5L16 2.5L11.3 9.5L14.3 16.3L11.8 17.3L9.3 11.8L5 17.5L2.8 16.5L8 9.3L4 3.7Z" fill="#e01818"/></svg>
<div class="gbtn" style="left:172px;top:658px;width:53px">Details...</div>
<div class="gbtn" style="left:230px;top:658px;width:48px">Limits...</div>
<div class="a" style="left:866px;top:662px;width:18px;height:18px;background:#fff;border:1px solid #a9a9a9;border-radius:2px"></div>
<svg class="a" style="left:866px;top:662px" width="18" height="18" viewBox="0 0 18 18"><path d="M3.2 9.2L5.2 8.2L7.3 11.8L13.6 3L15 4L7.5 15.2Z" fill="#1c8a2c"/></svg>
<div class="t" style="left:890px;top:664.5px;font-size:14.6px;color:#fff;letter-spacing:-0.4px">Annotations</div>
<div class="gbtn" style="left:974px;top:658px;width:41px;height:26px;border-color:#e8e8e8;background:#c9c9c9;box-shadow:inset 0 0 0 1px #9a9a9a"></div>
<svg class="a" style="left:974px;top:658px" width="41" height="26" viewBox="0 0 41 26" shape-rendering="crispEdges"><rect x="6" y="6" width="30" height="15" fill="#fff" stroke="#808080" stroke-width="1"/><path d="M16 6V21M26 6V21M6 11H36M6 16H36" stroke="#808080" stroke-width="1" fill="none"/></svg>

<div class="a" style="left:0;top:697px;width:1024px;height:71px;background:linear-gradient(#262626 0,#141414 4px,#070707 14px,#050505)"></div>
<!-- left nav -->
<svg class="a" style="left:5px;top:699px" width="28" height="67" viewBox="0 0 28 67">
 <path d="M27 1H9C3 10 1 20 1 32H27Z" fill="#555"/><path d="M27 34H1C1 46 3 56 9 65H27Z" fill="#505050"/>
 <path d="M20 9V25L8.5 17Z" fill="#626262"/>
 <g fill="#5e5e5e"><rect x="6" y="42" width="5" height="3"/><rect x="12.5" y="42" width="5" height="3"/><rect x="19" y="42" width="5" height="3"/><rect x="6" y="47" width="5" height="3"/><rect x="12.5" y="47" width="5" height="3"/></g>
</svg>
<div class="a" style="left:34px;top:700px;width:220px;height:64px;border:1px solid #9a9a9a;border-radius:6px;background:linear-gradient(#171717,#0a0a0a 50%,#111);overflow:hidden"><svg class="a" style="left:0;top:0" width="218" height="62" viewBox="0 0 218 62"><path d="M196 62L218 40V62Z" fill="#5d5d5d"/><text x="206.5" y="60.5" font-family="Liberation Serif,serif" font-weight="bold" font-style="italic" font-size="13" fill="#999">3</text></svg></div>
<div class="a" style="left:40.5px;top:737px;width:23px;height:23px;border-radius:50%;background:radial-gradient(circle at 45% 35%,#e6d566,#cdb93f 60%,#a89628);text-align:center;line-height:23px;font-size:13px;color:#1a1a1a;letter-spacing:-0.8px">3A</div>
<div class="t" style="left:69px;top:737.5px;font-size:11.3px;color:#fff;line-height:12.6px">100.0 mV/<br>1.7 mV</div>
<div class="a" style="left:148.5px;top:738px;width:23px;height:23px;border-radius:50%;background:radial-gradient(circle at 45% 35%,#ececec,#c4c4c4 60%,#9a9a9a);text-align:center;line-height:23px;font-size:13px;color:#1a1a1a;letter-spacing:-0.8px">4A</div>
<div class="t" style="left:176.5px;top:737.5px;font-size:11.3px;color:#fff;line-height:12.6px">560 µW/<br>-835.0 µW</div>
<svg class="a" style="left:256px;top:699px" width="28" height="67" viewBox="0 0 28 67">
 <path d="M0 1H18C24 10 26 20 26 32H0Z" fill="#545454"/><path d="M0 34H26C26 46 24 56 18 65H0Z" fill="#c6c6c6"/>
 <path d="M7 9V25L18.5 17Z" fill="#616161"/>
 <g transform="translate(12.8 49.3)" fill="#2f2f2f"><circle r="6.2"/><g><rect x="-1.9" y="-8.8" width="3.8" height="17.6" rx=".8"/><rect x="-1.9" y="-8.8" width="3.8" height="17.6" rx=".8" transform="rotate(45)"/><rect x="-1.9" y="-8.8" width="3.8" height="17.6" rx=".8" transform="rotate(90)"/><rect x="-1.9" y="-8.8" width="3.8" height="17.6" rx=".8" transform="rotate(135)"/></g><circle r="3.3" fill="#c6c6c6"/></g>
</svg>
<!-- status boxes -->
<div class="sbox" style="left:538px;width:104px"><div class="h" style="padding-right:2px">Timebase</div>
 <div class="a" style="left:85px;top:3px;width:12px;height:12px;border-radius:50%;background:radial-gradient(circle at 40% 35%,#d4d4d4,#a8a8a8)"></div>
 <div class="l" style="top:19px">10.42 ps/</div><div class="l" style="top:33px"><span>Pos:</span> 24.07742 ns</div><div class="l" style="top:47px"><span>IPTB:</span> Off</div></div>
<div class="sbox" style="left:643px;width:113px"><div class="h">Acquisition</div>
 <div class="l" style="top:19px"><span>Full Pattern:</span> On</div><div class="l" style="top:33px">8 pts/UI</div><div class="l" style="top:47px"><span>Smoothing:</span> Average</div></div>
<div class="sbox" style="left:758px;width:100px"><div class="h">Frame Trigger</div>
 <div class="l" style="top:19px"><span>Src:</span> Front Panel</div><div class="l" style="top:33px">60.000000 GBd</div><div class="l" style="top:47px;color:#8a8a8a">32767 UI</div></div>
<div class="sbox" style="left:860px;width:51px;background:#000">
 <div class="a" style="left:0;top:0;width:49px;height:14px;background:#2a2a2a;border-bottom:1px solid #8c8c8c;text-align:center;font-style:italic;font-size:10.2px;line-height:13px;color:#1f9a30">Pattern</div>
 <div class="a" style="left:0;top:48px;width:49px;height:14px;background:#2a2a2a;border-top:1px solid #8c8c8c;text-align:center;font-style:italic;font-size:11.5px;line-height:13px;color:#1f9a30">Lock</div>
 <svg class="a" style="left:15px;top:20px" width="20" height="24" viewBox="0 0 20 24"><path d="M5.5 10V6.5a4.5 4.5 0 0 1 9 0V10" fill="none" stroke="#cfd6cf" stroke-width="2.2"/><rect x="1.5" y="9.5" width="17" height="13" rx="1.5" fill="#3fae4c"/><path d="M1.5 12.8H18.5M1.5 16H18.5M1.5 19.2H18.5" stroke="#a5e3ab" stroke-width="1.2"/></svg>
</div>
<div class="circ" style="left:913px;top:706.5px">Math</div>
<div class="circ" style="left:968.5px;top:706.5px;letter-spacing:-1.2px">Signals</div>
<svg class="a" style="left:913px;top:706px" width="110" height="16" viewBox="0 0 110 16"><path d="M17.5 13H34L25.7 4.5ZM73 13H89.5L81.2 4.5Z" fill="#b8b8b8"/></svg>

</div>
</body>
</html>
